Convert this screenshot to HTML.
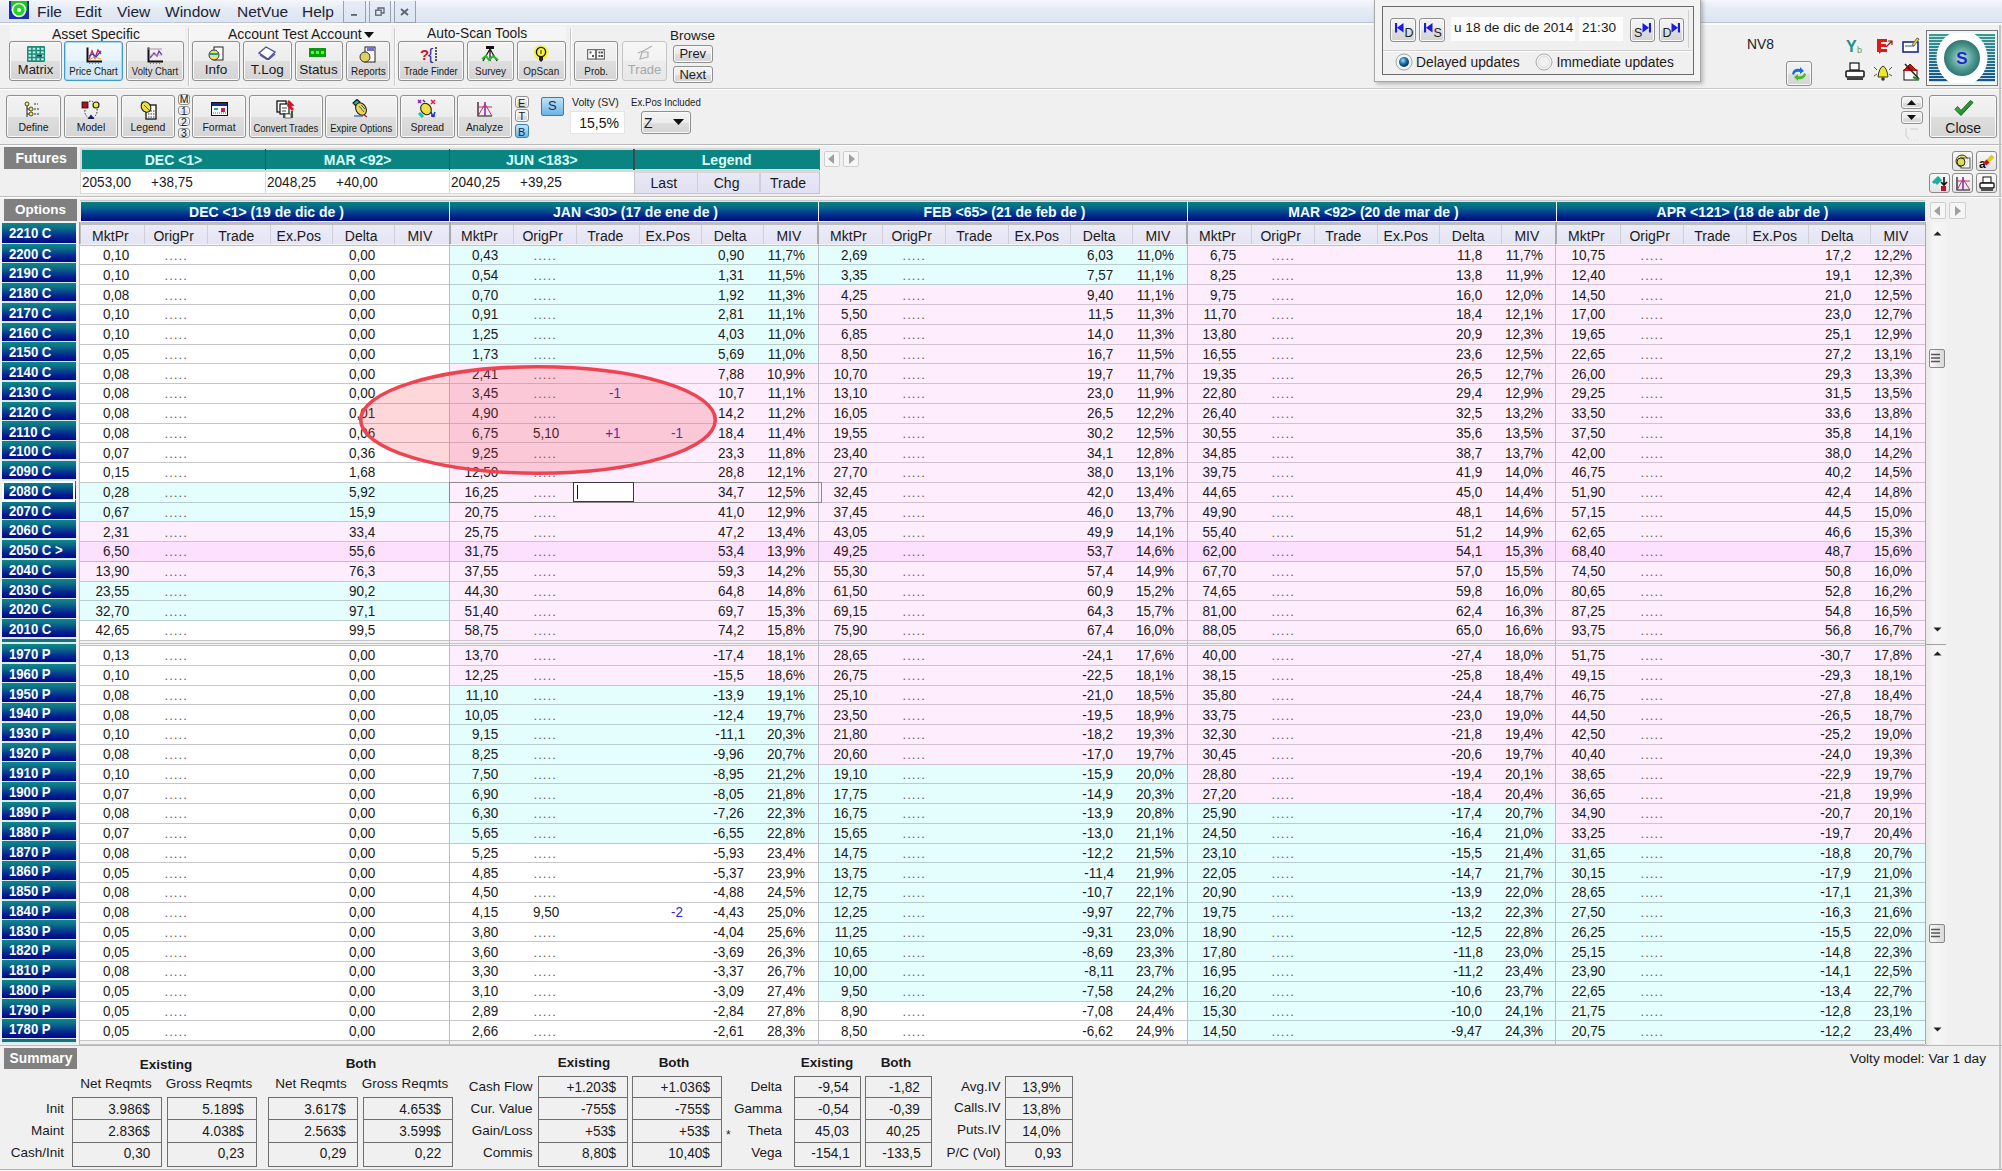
<!DOCTYPE html><html><head><meta charset="utf-8"><style>
*{margin:0;padding:0;box-sizing:border-box}
html,body{width:2002px;height:1171px;overflow:hidden;background:#f0f0f0}
body{position:relative;font-family:"Liberation Sans",sans-serif;font-size:14px;color:#1a1a1a}
.a{position:absolute}
.t{position:absolute;white-space:nowrap;line-height:16px;height:16px}
.r{text-align:right}
.c{text-align:center}
.b{font-weight:bold}
.lab{font-size:14.6px;transform:scaleX(.9);transform-origin:0 50%}
.sx{transform:scaleX(.93);transform-origin:100% 50%;font-size:14.5px}
.dots{color:#5c6262;letter-spacing:1.1px;font-size:13px}
.sxl{transform:scaleX(.97);transform-origin:0 50%}
.sxc{transform:scaleX(.93);transform-origin:50% 50%}
.btn{position:absolute;border:1px solid #8e8f8f;border-radius:3px;background:linear-gradient(#f2f2f2 0%,#ebebeb 50%,#dddddd 51%,#cfcfcf 100%)}
.lbl{position:absolute;background:#808080;color:#fff;font-weight:bold;text-align:center}
</style></head><body>
<div class="a " style="left:80.00px;top:199.60px;width:1845.00px;height:1.00px;background:#c8c8c8"></div>
<div class="a " style="left:80.00px;top:200.60px;width:1845.00px;height:1.00px;background:#bff0f0"></div>
<div class="a " style="left:81.00px;top:201.50px;width:368.00px;height:19.60px;background:linear-gradient(#0a807e 0%,#07698a 28%,#044690 52%,#01208a 78%,#000e78 100%)"></div>
<div class="t c b" style="left:116.50px;width:300px;top:203.60px;color:#f2ffff;font-size:14px">DEC &lt;1&gt; (19 de dic de )</div>
<div class="a " style="left:450.00px;top:201.50px;width:368.00px;height:19.60px;background:linear-gradient(#0a807e 0%,#07698a 28%,#044690 52%,#01208a 78%,#000e78 100%)"></div>
<div class="t c b" style="left:485.50px;width:300px;top:203.60px;color:#f2ffff;font-size:14px">JAN &lt;30&gt; (17 de ene de )</div>
<div class="a " style="left:819.00px;top:201.50px;width:368.00px;height:19.60px;background:linear-gradient(#0a807e 0%,#07698a 28%,#044690 52%,#01208a 78%,#000e78 100%)"></div>
<div class="t c b" style="left:854.50px;width:300px;top:203.60px;color:#f2ffff;font-size:14px">FEB &lt;65&gt; (21 de feb de )</div>
<div class="a " style="left:1188.00px;top:201.50px;width:368.00px;height:19.60px;background:linear-gradient(#0a807e 0%,#07698a 28%,#044690 52%,#01208a 78%,#000e78 100%)"></div>
<div class="t c b" style="left:1223.50px;width:300px;top:203.60px;color:#f2ffff;font-size:14px">MAR &lt;92&gt; (20 de mar de )</div>
<div class="a " style="left:1557.00px;top:201.50px;width:368.00px;height:19.60px;background:linear-gradient(#0a807e 0%,#07698a 28%,#044690 52%,#01208a 78%,#000e78 100%)"></div>
<div class="t c b" style="left:1592.50px;width:300px;top:203.60px;color:#f2ffff;font-size:14px">APR &lt;121&gt; (18 de abr de )</div>
<div class="a " style="left:80.00px;top:222.00px;width:1845.00px;height:23.00px;background:#bdbdbd"></div>
<div class="a " style="left:81.00px;top:224.50px;width:367.50px;height:20.00px;background:linear-gradient(#ececf8,#e3e3f4)"></div>
<div class="t c " style="left:70.40px;width:80px;top:227.60px;">MktPr</div>
<div class="a " style="left:144.30px;top:225.00px;width:1.20px;height:19.50px;background:#d0cfd8"></div>
<div class="t c " style="left:133.65px;width:80px;top:227.60px;">OrigPr</div>
<div class="a " style="left:207.00px;top:225.00px;width:1.20px;height:19.50px;background:#d0cfd8"></div>
<div class="t c " style="left:196.25px;width:80px;top:227.60px;">Trade</div>
<div class="a " style="left:269.50px;top:225.00px;width:1.20px;height:19.50px;background:#d0cfd8"></div>
<div class="t c " style="left:258.75px;width:80px;top:227.60px;">Ex.Pos</div>
<div class="a " style="left:332.00px;top:225.00px;width:1.20px;height:19.50px;background:#d0cfd8"></div>
<div class="t c " style="left:321.15px;width:80px;top:227.60px;">Delta</div>
<div class="a " style="left:394.30px;top:225.00px;width:1.20px;height:19.50px;background:#d0cfd8"></div>
<div class="t c " style="left:379.90px;width:80px;top:227.60px;">MIV</div>
<div class="a " style="left:450.00px;top:224.50px;width:367.50px;height:20.00px;background:linear-gradient(#ececf8,#e3e3f4)"></div>
<div class="t c " style="left:439.40px;width:80px;top:227.60px;">MktPr</div>
<div class="a " style="left:513.30px;top:225.00px;width:1.20px;height:19.50px;background:#d0cfd8"></div>
<div class="t c " style="left:502.65px;width:80px;top:227.60px;">OrigPr</div>
<div class="a " style="left:576.00px;top:225.00px;width:1.20px;height:19.50px;background:#d0cfd8"></div>
<div class="t c " style="left:565.25px;width:80px;top:227.60px;">Trade</div>
<div class="a " style="left:638.50px;top:225.00px;width:1.20px;height:19.50px;background:#d0cfd8"></div>
<div class="t c " style="left:627.75px;width:80px;top:227.60px;">Ex.Pos</div>
<div class="a " style="left:701.00px;top:225.00px;width:1.20px;height:19.50px;background:#d0cfd8"></div>
<div class="t c " style="left:690.15px;width:80px;top:227.60px;">Delta</div>
<div class="a " style="left:763.30px;top:225.00px;width:1.20px;height:19.50px;background:#d0cfd8"></div>
<div class="t c " style="left:748.90px;width:80px;top:227.60px;">MIV</div>
<div class="a " style="left:819.00px;top:224.50px;width:367.50px;height:20.00px;background:linear-gradient(#ececf8,#e3e3f4)"></div>
<div class="t c " style="left:808.40px;width:80px;top:227.60px;">MktPr</div>
<div class="a " style="left:882.30px;top:225.00px;width:1.20px;height:19.50px;background:#d0cfd8"></div>
<div class="t c " style="left:871.65px;width:80px;top:227.60px;">OrigPr</div>
<div class="a " style="left:945.00px;top:225.00px;width:1.20px;height:19.50px;background:#d0cfd8"></div>
<div class="t c " style="left:934.25px;width:80px;top:227.60px;">Trade</div>
<div class="a " style="left:1007.50px;top:225.00px;width:1.20px;height:19.50px;background:#d0cfd8"></div>
<div class="t c " style="left:996.75px;width:80px;top:227.60px;">Ex.Pos</div>
<div class="a " style="left:1070.00px;top:225.00px;width:1.20px;height:19.50px;background:#d0cfd8"></div>
<div class="t c " style="left:1059.15px;width:80px;top:227.60px;">Delta</div>
<div class="a " style="left:1132.30px;top:225.00px;width:1.20px;height:19.50px;background:#d0cfd8"></div>
<div class="t c " style="left:1117.90px;width:80px;top:227.60px;">MIV</div>
<div class="a " style="left:1188.00px;top:224.50px;width:367.50px;height:20.00px;background:linear-gradient(#ececf8,#e3e3f4)"></div>
<div class="t c " style="left:1177.40px;width:80px;top:227.60px;">MktPr</div>
<div class="a " style="left:1251.30px;top:225.00px;width:1.20px;height:19.50px;background:#d0cfd8"></div>
<div class="t c " style="left:1240.65px;width:80px;top:227.60px;">OrigPr</div>
<div class="a " style="left:1314.00px;top:225.00px;width:1.20px;height:19.50px;background:#d0cfd8"></div>
<div class="t c " style="left:1303.25px;width:80px;top:227.60px;">Trade</div>
<div class="a " style="left:1376.50px;top:225.00px;width:1.20px;height:19.50px;background:#d0cfd8"></div>
<div class="t c " style="left:1365.75px;width:80px;top:227.60px;">Ex.Pos</div>
<div class="a " style="left:1439.00px;top:225.00px;width:1.20px;height:19.50px;background:#d0cfd8"></div>
<div class="t c " style="left:1428.15px;width:80px;top:227.60px;">Delta</div>
<div class="a " style="left:1501.30px;top:225.00px;width:1.20px;height:19.50px;background:#d0cfd8"></div>
<div class="t c " style="left:1486.90px;width:80px;top:227.60px;">MIV</div>
<div class="a " style="left:1557.00px;top:224.50px;width:367.50px;height:20.00px;background:linear-gradient(#ececf8,#e3e3f4)"></div>
<div class="t c " style="left:1546.40px;width:80px;top:227.60px;">MktPr</div>
<div class="a " style="left:1620.30px;top:225.00px;width:1.20px;height:19.50px;background:#d0cfd8"></div>
<div class="t c " style="left:1609.65px;width:80px;top:227.60px;">OrigPr</div>
<div class="a " style="left:1683.00px;top:225.00px;width:1.20px;height:19.50px;background:#d0cfd8"></div>
<div class="t c " style="left:1672.25px;width:80px;top:227.60px;">Trade</div>
<div class="a " style="left:1745.50px;top:225.00px;width:1.20px;height:19.50px;background:#d0cfd8"></div>
<div class="t c " style="left:1734.75px;width:80px;top:227.60px;">Ex.Pos</div>
<div class="a " style="left:1808.00px;top:225.00px;width:1.20px;height:19.50px;background:#d0cfd8"></div>
<div class="t c " style="left:1797.15px;width:80px;top:227.60px;">Delta</div>
<div class="a " style="left:1870.30px;top:225.00px;width:1.20px;height:19.50px;background:#d0cfd8"></div>
<div class="t c " style="left:1855.90px;width:80px;top:227.60px;">MIV</div>
<div class="a " style="left:78.70px;top:222.00px;width:1.40px;height:23.00px;background:#9a9a9a"></div>
<div class="a " style="left:448.60px;top:222.00px;width:2.00px;height:23.00px;background:#a8a8a8"></div>
<div class="a " style="left:817.20px;top:222.00px;width:2.00px;height:23.00px;background:#a8a8a8"></div>
<div class="a " style="left:1186.00px;top:222.00px;width:2.00px;height:23.00px;background:#a8a8a8"></div>
<div class="a " style="left:1554.50px;top:222.00px;width:2.00px;height:23.00px;background:#a8a8a8"></div>
<div class="a " style="left:1925.00px;top:222.00px;width:2.00px;height:23.00px;background:#a8a8a8"></div>
<div class="a " style="left:80.00px;top:244.00px;width:1845.00px;height:401.20px;background:#f4f4f4"></div>
<div class="a " style="left:80.00px;top:245.00px;width:369.00px;height:19.76px;background:#ffffff"></div>
<div class="a " style="left:80.00px;top:264.76px;width:369.00px;height:19.76px;background:#ffffff"></div>
<div class="a " style="left:80.00px;top:284.52px;width:369.00px;height:19.76px;background:#ffffff"></div>
<div class="a " style="left:80.00px;top:304.28px;width:369.00px;height:19.76px;background:#ffffff"></div>
<div class="a " style="left:80.00px;top:324.04px;width:369.00px;height:19.76px;background:#ffffff"></div>
<div class="a " style="left:80.00px;top:343.80px;width:369.00px;height:19.76px;background:#ffffff"></div>
<div class="a " style="left:80.00px;top:363.56px;width:369.00px;height:19.76px;background:#ffffff"></div>
<div class="a " style="left:80.00px;top:383.32px;width:369.00px;height:19.76px;background:#ffffff"></div>
<div class="a " style="left:80.00px;top:403.08px;width:369.00px;height:19.76px;background:#ffffff"></div>
<div class="a " style="left:80.00px;top:422.84px;width:369.00px;height:19.76px;background:#ffffff"></div>
<div class="a " style="left:80.00px;top:442.60px;width:369.00px;height:19.76px;background:#ffffff"></div>
<div class="a " style="left:80.00px;top:462.36px;width:369.00px;height:19.76px;background:#ffffff"></div>
<div class="a " style="left:80.00px;top:482.12px;width:369.00px;height:19.76px;background:#e4fdfd"></div>
<div class="a " style="left:80.00px;top:501.88px;width:369.00px;height:19.76px;background:#e4fdfd"></div>
<div class="a " style="left:80.00px;top:521.64px;width:369.00px;height:19.76px;background:#fdedfd"></div>
<div class="a " style="left:80.00px;top:541.40px;width:369.00px;height:19.76px;background:#fde0fd"></div>
<div class="a " style="left:80.00px;top:561.16px;width:369.00px;height:19.76px;background:#fdedfd"></div>
<div class="a " style="left:80.00px;top:580.92px;width:369.00px;height:19.76px;background:#e4fdfd"></div>
<div class="a " style="left:80.00px;top:600.68px;width:369.00px;height:19.76px;background:#e4fdfd"></div>
<div class="a " style="left:80.00px;top:620.44px;width:369.00px;height:19.76px;background:#ffffff"></div>
<div class="a " style="left:80.00px;top:640.20px;width:369.00px;height:4.50px;background:#f2f2f2"></div>
<div class="a " style="left:449.00px;top:245.00px;width:369.00px;height:19.76px;background:#e4fdfd"></div>
<div class="a " style="left:449.00px;top:264.76px;width:369.00px;height:19.76px;background:#e4fdfd"></div>
<div class="a " style="left:449.00px;top:284.52px;width:369.00px;height:19.76px;background:#e4fdfd"></div>
<div class="a " style="left:449.00px;top:304.28px;width:369.00px;height:19.76px;background:#e4fdfd"></div>
<div class="a " style="left:449.00px;top:324.04px;width:369.00px;height:19.76px;background:#e4fdfd"></div>
<div class="a " style="left:449.00px;top:343.80px;width:369.00px;height:19.76px;background:#e4fdfd"></div>
<div class="a " style="left:449.00px;top:363.56px;width:369.00px;height:19.76px;background:#fdedfd"></div>
<div class="a " style="left:449.00px;top:383.32px;width:369.00px;height:19.76px;background:#fdedfd"></div>
<div class="a " style="left:449.00px;top:403.08px;width:369.00px;height:19.76px;background:#fdedfd"></div>
<div class="a " style="left:449.00px;top:422.84px;width:369.00px;height:19.76px;background:#fdedfd"></div>
<div class="a " style="left:449.00px;top:442.60px;width:369.00px;height:19.76px;background:#fdedfd"></div>
<div class="a " style="left:449.00px;top:462.36px;width:369.00px;height:19.76px;background:#fdedfd"></div>
<div class="a " style="left:449.00px;top:482.12px;width:369.00px;height:19.76px;background:#fdedfd"></div>
<div class="a " style="left:449.00px;top:501.88px;width:369.00px;height:19.76px;background:#fdedfd"></div>
<div class="a " style="left:449.00px;top:521.64px;width:369.00px;height:19.76px;background:#fdedfd"></div>
<div class="a " style="left:449.00px;top:541.40px;width:369.00px;height:19.76px;background:#fde0fd"></div>
<div class="a " style="left:449.00px;top:561.16px;width:369.00px;height:19.76px;background:#fdedfd"></div>
<div class="a " style="left:449.00px;top:580.92px;width:369.00px;height:19.76px;background:#fdedfd"></div>
<div class="a " style="left:449.00px;top:600.68px;width:369.00px;height:19.76px;background:#fdedfd"></div>
<div class="a " style="left:449.00px;top:620.44px;width:369.00px;height:19.76px;background:#fdedfd"></div>
<div class="a " style="left:449.00px;top:640.20px;width:369.00px;height:4.50px;background:#f2f2f2"></div>
<div class="a " style="left:818.00px;top:245.00px;width:369.00px;height:19.76px;background:#e4fdfd"></div>
<div class="a " style="left:818.00px;top:264.76px;width:369.00px;height:19.76px;background:#e4fdfd"></div>
<div class="a " style="left:818.00px;top:284.52px;width:369.00px;height:19.76px;background:#fdedfd"></div>
<div class="a " style="left:818.00px;top:304.28px;width:369.00px;height:19.76px;background:#fdedfd"></div>
<div class="a " style="left:818.00px;top:324.04px;width:369.00px;height:19.76px;background:#fdedfd"></div>
<div class="a " style="left:818.00px;top:343.80px;width:369.00px;height:19.76px;background:#fdedfd"></div>
<div class="a " style="left:818.00px;top:363.56px;width:369.00px;height:19.76px;background:#fdedfd"></div>
<div class="a " style="left:818.00px;top:383.32px;width:369.00px;height:19.76px;background:#fdedfd"></div>
<div class="a " style="left:818.00px;top:403.08px;width:369.00px;height:19.76px;background:#fdedfd"></div>
<div class="a " style="left:818.00px;top:422.84px;width:369.00px;height:19.76px;background:#fdedfd"></div>
<div class="a " style="left:818.00px;top:442.60px;width:369.00px;height:19.76px;background:#fdedfd"></div>
<div class="a " style="left:818.00px;top:462.36px;width:369.00px;height:19.76px;background:#fdedfd"></div>
<div class="a " style="left:818.00px;top:482.12px;width:369.00px;height:19.76px;background:#fdedfd"></div>
<div class="a " style="left:818.00px;top:501.88px;width:369.00px;height:19.76px;background:#fdedfd"></div>
<div class="a " style="left:818.00px;top:521.64px;width:369.00px;height:19.76px;background:#fdedfd"></div>
<div class="a " style="left:818.00px;top:541.40px;width:369.00px;height:19.76px;background:#fde0fd"></div>
<div class="a " style="left:818.00px;top:561.16px;width:369.00px;height:19.76px;background:#fdedfd"></div>
<div class="a " style="left:818.00px;top:580.92px;width:369.00px;height:19.76px;background:#fdedfd"></div>
<div class="a " style="left:818.00px;top:600.68px;width:369.00px;height:19.76px;background:#fdedfd"></div>
<div class="a " style="left:818.00px;top:620.44px;width:369.00px;height:19.76px;background:#fdedfd"></div>
<div class="a " style="left:818.00px;top:640.20px;width:369.00px;height:4.50px;background:#f2f2f2"></div>
<div class="a " style="left:1187.00px;top:245.00px;width:369.00px;height:19.76px;background:#fdedfd"></div>
<div class="a " style="left:1187.00px;top:264.76px;width:369.00px;height:19.76px;background:#fdedfd"></div>
<div class="a " style="left:1187.00px;top:284.52px;width:369.00px;height:19.76px;background:#fdedfd"></div>
<div class="a " style="left:1187.00px;top:304.28px;width:369.00px;height:19.76px;background:#fdedfd"></div>
<div class="a " style="left:1187.00px;top:324.04px;width:369.00px;height:19.76px;background:#fdedfd"></div>
<div class="a " style="left:1187.00px;top:343.80px;width:369.00px;height:19.76px;background:#fdedfd"></div>
<div class="a " style="left:1187.00px;top:363.56px;width:369.00px;height:19.76px;background:#fdedfd"></div>
<div class="a " style="left:1187.00px;top:383.32px;width:369.00px;height:19.76px;background:#fdedfd"></div>
<div class="a " style="left:1187.00px;top:403.08px;width:369.00px;height:19.76px;background:#fdedfd"></div>
<div class="a " style="left:1187.00px;top:422.84px;width:369.00px;height:19.76px;background:#fdedfd"></div>
<div class="a " style="left:1187.00px;top:442.60px;width:369.00px;height:19.76px;background:#fdedfd"></div>
<div class="a " style="left:1187.00px;top:462.36px;width:369.00px;height:19.76px;background:#fdedfd"></div>
<div class="a " style="left:1187.00px;top:482.12px;width:369.00px;height:19.76px;background:#fdedfd"></div>
<div class="a " style="left:1187.00px;top:501.88px;width:369.00px;height:19.76px;background:#fdedfd"></div>
<div class="a " style="left:1187.00px;top:521.64px;width:369.00px;height:19.76px;background:#fdedfd"></div>
<div class="a " style="left:1187.00px;top:541.40px;width:369.00px;height:19.76px;background:#fde0fd"></div>
<div class="a " style="left:1187.00px;top:561.16px;width:369.00px;height:19.76px;background:#fdedfd"></div>
<div class="a " style="left:1187.00px;top:580.92px;width:369.00px;height:19.76px;background:#fdedfd"></div>
<div class="a " style="left:1187.00px;top:600.68px;width:369.00px;height:19.76px;background:#fdedfd"></div>
<div class="a " style="left:1187.00px;top:620.44px;width:369.00px;height:19.76px;background:#fdedfd"></div>
<div class="a " style="left:1187.00px;top:640.20px;width:369.00px;height:4.50px;background:#f2f2f2"></div>
<div class="a " style="left:1556.00px;top:245.00px;width:369.00px;height:19.76px;background:#fdedfd"></div>
<div class="a " style="left:1556.00px;top:264.76px;width:369.00px;height:19.76px;background:#fdedfd"></div>
<div class="a " style="left:1556.00px;top:284.52px;width:369.00px;height:19.76px;background:#fdedfd"></div>
<div class="a " style="left:1556.00px;top:304.28px;width:369.00px;height:19.76px;background:#fdedfd"></div>
<div class="a " style="left:1556.00px;top:324.04px;width:369.00px;height:19.76px;background:#fdedfd"></div>
<div class="a " style="left:1556.00px;top:343.80px;width:369.00px;height:19.76px;background:#fdedfd"></div>
<div class="a " style="left:1556.00px;top:363.56px;width:369.00px;height:19.76px;background:#fdedfd"></div>
<div class="a " style="left:1556.00px;top:383.32px;width:369.00px;height:19.76px;background:#fdedfd"></div>
<div class="a " style="left:1556.00px;top:403.08px;width:369.00px;height:19.76px;background:#fdedfd"></div>
<div class="a " style="left:1556.00px;top:422.84px;width:369.00px;height:19.76px;background:#fdedfd"></div>
<div class="a " style="left:1556.00px;top:442.60px;width:369.00px;height:19.76px;background:#fdedfd"></div>
<div class="a " style="left:1556.00px;top:462.36px;width:369.00px;height:19.76px;background:#fdedfd"></div>
<div class="a " style="left:1556.00px;top:482.12px;width:369.00px;height:19.76px;background:#fdedfd"></div>
<div class="a " style="left:1556.00px;top:501.88px;width:369.00px;height:19.76px;background:#fdedfd"></div>
<div class="a " style="left:1556.00px;top:521.64px;width:369.00px;height:19.76px;background:#fdedfd"></div>
<div class="a " style="left:1556.00px;top:541.40px;width:369.00px;height:19.76px;background:#fde0fd"></div>
<div class="a " style="left:1556.00px;top:561.16px;width:369.00px;height:19.76px;background:#fdedfd"></div>
<div class="a " style="left:1556.00px;top:580.92px;width:369.00px;height:19.76px;background:#fdedfd"></div>
<div class="a " style="left:1556.00px;top:600.68px;width:369.00px;height:19.76px;background:#fdedfd"></div>
<div class="a " style="left:1556.00px;top:620.44px;width:369.00px;height:19.76px;background:#fdedfd"></div>
<div class="a " style="left:1556.00px;top:640.20px;width:369.00px;height:4.50px;background:#f2f2f2"></div>
<div class="a " style="left:80.00px;top:245.00px;width:369.00px;height:1.00px;background:#c0c0c0"></div>
<div class="a " style="left:80.00px;top:264.00px;width:369.00px;height:1.00px;background:#c6c6ca"></div>
<div class="a " style="left:80.00px;top:284.00px;width:369.00px;height:1.00px;background:#c6c6ca"></div>
<div class="a " style="left:80.00px;top:304.00px;width:369.00px;height:1.00px;background:#c6c6ca"></div>
<div class="a " style="left:80.00px;top:324.00px;width:369.00px;height:1.00px;background:#c6c6ca"></div>
<div class="a " style="left:80.00px;top:344.00px;width:369.00px;height:1.00px;background:#c6c6ca"></div>
<div class="a " style="left:80.00px;top:363.00px;width:369.00px;height:1.00px;background:#c6c6ca"></div>
<div class="a " style="left:80.00px;top:383.00px;width:369.00px;height:1.00px;background:#c6c6ca"></div>
<div class="a " style="left:80.00px;top:403.00px;width:369.00px;height:1.00px;background:#c6c6ca"></div>
<div class="a " style="left:80.00px;top:423.00px;width:369.00px;height:1.00px;background:#c6c6ca"></div>
<div class="a " style="left:80.00px;top:442.00px;width:369.00px;height:1.00px;background:#c6c6ca"></div>
<div class="a " style="left:80.00px;top:462.00px;width:369.00px;height:1.00px;background:#c6c6ca"></div>
<div class="a " style="left:80.00px;top:482.00px;width:369.00px;height:1.00px;background:#c6c6ca"></div>
<div class="a " style="left:80.00px;top:502.00px;width:369.00px;height:1.00px;background:#b9cdd0"></div>
<div class="a " style="left:80.00px;top:521.00px;width:369.00px;height:1.00px;background:#b9cdd0"></div>
<div class="a " style="left:80.00px;top:541.00px;width:369.00px;height:1.00px;background:#d0c2d0"></div>
<div class="a " style="left:80.00px;top:561.00px;width:369.00px;height:1.00px;background:#cbb8cb"></div>
<div class="a " style="left:80.00px;top:581.00px;width:369.00px;height:1.00px;background:#d0c2d0"></div>
<div class="a " style="left:80.00px;top:600.00px;width:369.00px;height:1.00px;background:#b9cdd0"></div>
<div class="a " style="left:80.00px;top:620.00px;width:369.00px;height:1.00px;background:#b9cdd0"></div>
<div class="a " style="left:80.00px;top:640.00px;width:369.00px;height:1.00px;background:#c6c6ca"></div>
<div class="a " style="left:449.00px;top:245.00px;width:369.00px;height:1.00px;background:#c0c0c0"></div>
<div class="a " style="left:449.00px;top:264.00px;width:369.00px;height:1.00px;background:#b9cdd0"></div>
<div class="a " style="left:449.00px;top:284.00px;width:369.00px;height:1.00px;background:#b9cdd0"></div>
<div class="a " style="left:449.00px;top:304.00px;width:369.00px;height:1.00px;background:#b9cdd0"></div>
<div class="a " style="left:449.00px;top:324.00px;width:369.00px;height:1.00px;background:#b9cdd0"></div>
<div class="a " style="left:449.00px;top:344.00px;width:369.00px;height:1.00px;background:#b9cdd0"></div>
<div class="a " style="left:449.00px;top:363.00px;width:369.00px;height:1.00px;background:#b9cdd0"></div>
<div class="a " style="left:449.00px;top:383.00px;width:369.00px;height:1.00px;background:#d0c2d0"></div>
<div class="a " style="left:449.00px;top:403.00px;width:369.00px;height:1.00px;background:#d0c2d0"></div>
<div class="a " style="left:449.00px;top:423.00px;width:369.00px;height:1.00px;background:#d0c2d0"></div>
<div class="a " style="left:449.00px;top:442.00px;width:369.00px;height:1.00px;background:#d0c2d0"></div>
<div class="a " style="left:449.00px;top:462.00px;width:369.00px;height:1.00px;background:#d0c2d0"></div>
<div class="a " style="left:449.00px;top:482.00px;width:369.00px;height:1.00px;background:#d0c2d0"></div>
<div class="a " style="left:449.00px;top:502.00px;width:369.00px;height:1.00px;background:#d0c2d0"></div>
<div class="a " style="left:449.00px;top:521.00px;width:369.00px;height:1.00px;background:#d0c2d0"></div>
<div class="a " style="left:449.00px;top:541.00px;width:369.00px;height:1.00px;background:#d0c2d0"></div>
<div class="a " style="left:449.00px;top:561.00px;width:369.00px;height:1.00px;background:#cbb8cb"></div>
<div class="a " style="left:449.00px;top:581.00px;width:369.00px;height:1.00px;background:#d0c2d0"></div>
<div class="a " style="left:449.00px;top:600.00px;width:369.00px;height:1.00px;background:#d0c2d0"></div>
<div class="a " style="left:449.00px;top:620.00px;width:369.00px;height:1.00px;background:#d0c2d0"></div>
<div class="a " style="left:449.00px;top:640.00px;width:369.00px;height:1.00px;background:#d0c2d0"></div>
<div class="a " style="left:818.00px;top:245.00px;width:369.00px;height:1.00px;background:#c0c0c0"></div>
<div class="a " style="left:818.00px;top:264.00px;width:369.00px;height:1.00px;background:#b9cdd0"></div>
<div class="a " style="left:818.00px;top:284.00px;width:369.00px;height:1.00px;background:#b9cdd0"></div>
<div class="a " style="left:818.00px;top:304.00px;width:369.00px;height:1.00px;background:#d0c2d0"></div>
<div class="a " style="left:818.00px;top:324.00px;width:369.00px;height:1.00px;background:#d0c2d0"></div>
<div class="a " style="left:818.00px;top:344.00px;width:369.00px;height:1.00px;background:#d0c2d0"></div>
<div class="a " style="left:818.00px;top:363.00px;width:369.00px;height:1.00px;background:#d0c2d0"></div>
<div class="a " style="left:818.00px;top:383.00px;width:369.00px;height:1.00px;background:#d0c2d0"></div>
<div class="a " style="left:818.00px;top:403.00px;width:369.00px;height:1.00px;background:#d0c2d0"></div>
<div class="a " style="left:818.00px;top:423.00px;width:369.00px;height:1.00px;background:#d0c2d0"></div>
<div class="a " style="left:818.00px;top:442.00px;width:369.00px;height:1.00px;background:#d0c2d0"></div>
<div class="a " style="left:818.00px;top:462.00px;width:369.00px;height:1.00px;background:#d0c2d0"></div>
<div class="a " style="left:818.00px;top:482.00px;width:369.00px;height:1.00px;background:#d0c2d0"></div>
<div class="a " style="left:818.00px;top:502.00px;width:369.00px;height:1.00px;background:#d0c2d0"></div>
<div class="a " style="left:818.00px;top:521.00px;width:369.00px;height:1.00px;background:#d0c2d0"></div>
<div class="a " style="left:818.00px;top:541.00px;width:369.00px;height:1.00px;background:#d0c2d0"></div>
<div class="a " style="left:818.00px;top:561.00px;width:369.00px;height:1.00px;background:#cbb8cb"></div>
<div class="a " style="left:818.00px;top:581.00px;width:369.00px;height:1.00px;background:#d0c2d0"></div>
<div class="a " style="left:818.00px;top:600.00px;width:369.00px;height:1.00px;background:#d0c2d0"></div>
<div class="a " style="left:818.00px;top:620.00px;width:369.00px;height:1.00px;background:#d0c2d0"></div>
<div class="a " style="left:818.00px;top:640.00px;width:369.00px;height:1.00px;background:#d0c2d0"></div>
<div class="a " style="left:1187.00px;top:245.00px;width:369.00px;height:1.00px;background:#c0c0c0"></div>
<div class="a " style="left:1187.00px;top:264.00px;width:369.00px;height:1.00px;background:#d0c2d0"></div>
<div class="a " style="left:1187.00px;top:284.00px;width:369.00px;height:1.00px;background:#d0c2d0"></div>
<div class="a " style="left:1187.00px;top:304.00px;width:369.00px;height:1.00px;background:#d0c2d0"></div>
<div class="a " style="left:1187.00px;top:324.00px;width:369.00px;height:1.00px;background:#d0c2d0"></div>
<div class="a " style="left:1187.00px;top:344.00px;width:369.00px;height:1.00px;background:#d0c2d0"></div>
<div class="a " style="left:1187.00px;top:363.00px;width:369.00px;height:1.00px;background:#d0c2d0"></div>
<div class="a " style="left:1187.00px;top:383.00px;width:369.00px;height:1.00px;background:#d0c2d0"></div>
<div class="a " style="left:1187.00px;top:403.00px;width:369.00px;height:1.00px;background:#d0c2d0"></div>
<div class="a " style="left:1187.00px;top:423.00px;width:369.00px;height:1.00px;background:#d0c2d0"></div>
<div class="a " style="left:1187.00px;top:442.00px;width:369.00px;height:1.00px;background:#d0c2d0"></div>
<div class="a " style="left:1187.00px;top:462.00px;width:369.00px;height:1.00px;background:#d0c2d0"></div>
<div class="a " style="left:1187.00px;top:482.00px;width:369.00px;height:1.00px;background:#d0c2d0"></div>
<div class="a " style="left:1187.00px;top:502.00px;width:369.00px;height:1.00px;background:#d0c2d0"></div>
<div class="a " style="left:1187.00px;top:521.00px;width:369.00px;height:1.00px;background:#d0c2d0"></div>
<div class="a " style="left:1187.00px;top:541.00px;width:369.00px;height:1.00px;background:#d0c2d0"></div>
<div class="a " style="left:1187.00px;top:561.00px;width:369.00px;height:1.00px;background:#cbb8cb"></div>
<div class="a " style="left:1187.00px;top:581.00px;width:369.00px;height:1.00px;background:#d0c2d0"></div>
<div class="a " style="left:1187.00px;top:600.00px;width:369.00px;height:1.00px;background:#d0c2d0"></div>
<div class="a " style="left:1187.00px;top:620.00px;width:369.00px;height:1.00px;background:#d0c2d0"></div>
<div class="a " style="left:1187.00px;top:640.00px;width:369.00px;height:1.00px;background:#d0c2d0"></div>
<div class="a " style="left:1556.00px;top:245.00px;width:369.00px;height:1.00px;background:#c0c0c0"></div>
<div class="a " style="left:1556.00px;top:264.00px;width:369.00px;height:1.00px;background:#d0c2d0"></div>
<div class="a " style="left:1556.00px;top:284.00px;width:369.00px;height:1.00px;background:#d0c2d0"></div>
<div class="a " style="left:1556.00px;top:304.00px;width:369.00px;height:1.00px;background:#d0c2d0"></div>
<div class="a " style="left:1556.00px;top:324.00px;width:369.00px;height:1.00px;background:#d0c2d0"></div>
<div class="a " style="left:1556.00px;top:344.00px;width:369.00px;height:1.00px;background:#d0c2d0"></div>
<div class="a " style="left:1556.00px;top:363.00px;width:369.00px;height:1.00px;background:#d0c2d0"></div>
<div class="a " style="left:1556.00px;top:383.00px;width:369.00px;height:1.00px;background:#d0c2d0"></div>
<div class="a " style="left:1556.00px;top:403.00px;width:369.00px;height:1.00px;background:#d0c2d0"></div>
<div class="a " style="left:1556.00px;top:423.00px;width:369.00px;height:1.00px;background:#d0c2d0"></div>
<div class="a " style="left:1556.00px;top:442.00px;width:369.00px;height:1.00px;background:#d0c2d0"></div>
<div class="a " style="left:1556.00px;top:462.00px;width:369.00px;height:1.00px;background:#d0c2d0"></div>
<div class="a " style="left:1556.00px;top:482.00px;width:369.00px;height:1.00px;background:#d0c2d0"></div>
<div class="a " style="left:1556.00px;top:502.00px;width:369.00px;height:1.00px;background:#d0c2d0"></div>
<div class="a " style="left:1556.00px;top:521.00px;width:369.00px;height:1.00px;background:#d0c2d0"></div>
<div class="a " style="left:1556.00px;top:541.00px;width:369.00px;height:1.00px;background:#d0c2d0"></div>
<div class="a " style="left:1556.00px;top:561.00px;width:369.00px;height:1.00px;background:#cbb8cb"></div>
<div class="a " style="left:1556.00px;top:581.00px;width:369.00px;height:1.00px;background:#d0c2d0"></div>
<div class="a " style="left:1556.00px;top:600.00px;width:369.00px;height:1.00px;background:#d0c2d0"></div>
<div class="a " style="left:1556.00px;top:620.00px;width:369.00px;height:1.00px;background:#d0c2d0"></div>
<div class="a " style="left:1556.00px;top:640.00px;width:369.00px;height:1.00px;background:#d0c2d0"></div>
<div class="a " style="left:80.00px;top:643.30px;width:1845.00px;height:1.20px;background:#c2c2c2"></div>
<div class="a " style="left:78.90px;top:244.00px;width:1.00px;height:401.20px;background:#bdbac6"></div>
<div class="a " style="left:449.10px;top:244.00px;width:1.00px;height:401.20px;background:#bdbac6"></div>
<div class="a " style="left:817.70px;top:244.00px;width:1.00px;height:401.20px;background:#bdbac6"></div>
<div class="a " style="left:1186.50px;top:244.00px;width:1.00px;height:401.20px;background:#bdbac6"></div>
<div class="a " style="left:1555.00px;top:244.00px;width:1.00px;height:401.20px;background:#bdbac6"></div>
<div class="a " style="left:1925.50px;top:244.00px;width:1.00px;height:401.20px;background:#bdbac6"></div>
<div class="t r sx" style="right:1873.00px;top:247.00px;">0,10</div>
<div class="t r dots" style="right:1814.00px;top:248.00px;">.....</div>
<div class="t r sx" style="right:1626.50px;top:247.00px;">0,00</div>
<div class="t r sx" style="right:1873.00px;top:266.76px;">0,10</div>
<div class="t r dots" style="right:1814.00px;top:267.76px;">.....</div>
<div class="t r sx" style="right:1626.50px;top:266.76px;">0,00</div>
<div class="t r sx" style="right:1873.00px;top:286.52px;">0,08</div>
<div class="t r dots" style="right:1814.00px;top:287.52px;">.....</div>
<div class="t r sx" style="right:1626.50px;top:286.52px;">0,00</div>
<div class="t r sx" style="right:1873.00px;top:306.28px;">0,10</div>
<div class="t r dots" style="right:1814.00px;top:307.28px;">.....</div>
<div class="t r sx" style="right:1626.50px;top:306.28px;">0,00</div>
<div class="t r sx" style="right:1873.00px;top:326.04px;">0,10</div>
<div class="t r dots" style="right:1814.00px;top:327.04px;">.....</div>
<div class="t r sx" style="right:1626.50px;top:326.04px;">0,00</div>
<div class="t r sx" style="right:1873.00px;top:345.80px;">0,05</div>
<div class="t r dots" style="right:1814.00px;top:346.80px;">.....</div>
<div class="t r sx" style="right:1626.50px;top:345.80px;">0,00</div>
<div class="t r sx" style="right:1873.00px;top:365.56px;">0,08</div>
<div class="t r dots" style="right:1814.00px;top:366.56px;">.....</div>
<div class="t r sx" style="right:1626.50px;top:365.56px;">0,00</div>
<div class="t r sx" style="right:1873.00px;top:385.32px;">0,08</div>
<div class="t r dots" style="right:1814.00px;top:386.32px;">.....</div>
<div class="t r sx" style="right:1626.50px;top:385.32px;">0,00</div>
<div class="t r sx" style="right:1873.00px;top:405.08px;">0,08</div>
<div class="t r dots" style="right:1814.00px;top:406.08px;">.....</div>
<div class="t r sx" style="right:1626.50px;top:405.08px;">0,01</div>
<div class="t r sx" style="right:1873.00px;top:424.84px;">0,08</div>
<div class="t r dots" style="right:1814.00px;top:425.84px;">.....</div>
<div class="t r sx" style="right:1626.50px;top:424.84px;">0,06</div>
<div class="t r sx" style="right:1873.00px;top:444.60px;">0,07</div>
<div class="t r dots" style="right:1814.00px;top:445.60px;">.....</div>
<div class="t r sx" style="right:1626.50px;top:444.60px;">0,36</div>
<div class="t r sx" style="right:1873.00px;top:464.36px;">0,15</div>
<div class="t r dots" style="right:1814.00px;top:465.36px;">.....</div>
<div class="t r sx" style="right:1626.50px;top:464.36px;">1,68</div>
<div class="t r sx" style="right:1873.00px;top:484.12px;">0,28</div>
<div class="t r dots" style="right:1814.00px;top:485.12px;">.....</div>
<div class="t r sx" style="right:1626.50px;top:484.12px;">5,92</div>
<div class="t r sx" style="right:1873.00px;top:503.88px;">0,67</div>
<div class="t r dots" style="right:1814.00px;top:504.88px;">.....</div>
<div class="t r sx" style="right:1626.50px;top:503.88px;">15,9</div>
<div class="t r sx" style="right:1873.00px;top:523.64px;">2,31</div>
<div class="t r dots" style="right:1814.00px;top:524.64px;">.....</div>
<div class="t r sx" style="right:1626.50px;top:523.64px;">33,4</div>
<div class="t r sx" style="right:1873.00px;top:543.40px;">6,50</div>
<div class="t r dots" style="right:1814.00px;top:544.40px;">.....</div>
<div class="t r sx" style="right:1626.50px;top:543.40px;">55,6</div>
<div class="t r sx" style="right:1873.00px;top:563.16px;">13,90</div>
<div class="t r dots" style="right:1814.00px;top:564.16px;">.....</div>
<div class="t r sx" style="right:1626.50px;top:563.16px;">76,3</div>
<div class="t r sx" style="right:1873.00px;top:582.92px;">23,55</div>
<div class="t r dots" style="right:1814.00px;top:583.92px;">.....</div>
<div class="t r sx" style="right:1626.50px;top:582.92px;">90,2</div>
<div class="t r sx" style="right:1873.00px;top:602.68px;">32,70</div>
<div class="t r dots" style="right:1814.00px;top:603.68px;">.....</div>
<div class="t r sx" style="right:1626.50px;top:602.68px;">97,1</div>
<div class="t r sx" style="right:1873.00px;top:622.44px;">42,65</div>
<div class="t r dots" style="right:1814.00px;top:623.44px;">.....</div>
<div class="t r sx" style="right:1626.50px;top:622.44px;">99,5</div>
<div class="t r sx" style="right:1504.00px;top:247.00px;">0,43</div>
<div class="t r dots" style="right:1445.00px;top:248.00px;">.....</div>
<div class="t r sx" style="right:1257.50px;top:247.00px;">0,90</div>
<div class="t r sx" style="right:1196.50px;top:247.00px;">11,7%</div>
<div class="t r sx" style="right:1504.00px;top:266.76px;">0,54</div>
<div class="t r dots" style="right:1445.00px;top:267.76px;">.....</div>
<div class="t r sx" style="right:1257.50px;top:266.76px;">1,31</div>
<div class="t r sx" style="right:1196.50px;top:266.76px;">11,5%</div>
<div class="t r sx" style="right:1504.00px;top:286.52px;">0,70</div>
<div class="t r dots" style="right:1445.00px;top:287.52px;">.....</div>
<div class="t r sx" style="right:1257.50px;top:286.52px;">1,92</div>
<div class="t r sx" style="right:1196.50px;top:286.52px;">11,3%</div>
<div class="t r sx" style="right:1504.00px;top:306.28px;">0,91</div>
<div class="t r dots" style="right:1445.00px;top:307.28px;">.....</div>
<div class="t r sx" style="right:1257.50px;top:306.28px;">2,81</div>
<div class="t r sx" style="right:1196.50px;top:306.28px;">11,1%</div>
<div class="t r sx" style="right:1504.00px;top:326.04px;">1,25</div>
<div class="t r dots" style="right:1445.00px;top:327.04px;">.....</div>
<div class="t r sx" style="right:1257.50px;top:326.04px;">4,03</div>
<div class="t r sx" style="right:1196.50px;top:326.04px;">11,0%</div>
<div class="t r sx" style="right:1504.00px;top:345.80px;">1,73</div>
<div class="t r dots" style="right:1445.00px;top:346.80px;">.....</div>
<div class="t r sx" style="right:1257.50px;top:345.80px;">5,69</div>
<div class="t r sx" style="right:1196.50px;top:345.80px;">11,0%</div>
<div class="t r sx" style="right:1504.00px;top:365.56px;">2,41</div>
<div class="t r dots" style="right:1445.00px;top:366.56px;">.....</div>
<div class="t r sx" style="right:1257.50px;top:365.56px;">7,88</div>
<div class="t r sx" style="right:1196.50px;top:365.56px;">10,9%</div>
<div class="t r sx" style="right:1504.00px;top:385.32px;">3,45</div>
<div class="t r dots" style="right:1445.00px;top:386.32px;">.....</div>
<div class="t r sx" style="right:1381.50px;top:385.32px;color:#3b22c8">-1</div>
<div class="t r sx" style="right:1257.50px;top:385.32px;">10,7</div>
<div class="t r sx" style="right:1196.50px;top:385.32px;">11,1%</div>
<div class="t r sx" style="right:1504.00px;top:405.08px;">4,90</div>
<div class="t r dots" style="right:1445.00px;top:406.08px;">.....</div>
<div class="t r sx" style="right:1257.50px;top:405.08px;">14,2</div>
<div class="t r sx" style="right:1196.50px;top:405.08px;">11,2%</div>
<div class="t r sx" style="right:1504.00px;top:424.84px;">6,75</div>
<div class="t r sx" style="right:1442.50px;top:424.84px;">5,10</div>
<div class="t r sx" style="right:1381.50px;top:424.84px;color:#3b22c8">+1</div>
<div class="t r sx" style="right:1319.50px;top:424.84px;color:#3b22c8">-1</div>
<div class="t r sx" style="right:1257.50px;top:424.84px;">18,4</div>
<div class="t r sx" style="right:1196.50px;top:424.84px;">11,4%</div>
<div class="t r sx" style="right:1504.00px;top:444.60px;">9,25</div>
<div class="t r dots" style="right:1445.00px;top:445.60px;">.....</div>
<div class="t r sx" style="right:1257.50px;top:444.60px;">23,3</div>
<div class="t r sx" style="right:1196.50px;top:444.60px;">11,8%</div>
<div class="t r sx" style="right:1504.00px;top:464.36px;">12,50</div>
<div class="t r dots" style="right:1445.00px;top:465.36px;">.....</div>
<div class="t r sx" style="right:1257.50px;top:464.36px;">28,8</div>
<div class="t r sx" style="right:1196.50px;top:464.36px;">12,1%</div>
<div class="t r sx" style="right:1504.00px;top:484.12px;">16,25</div>
<div class="t r dots" style="right:1445.00px;top:485.12px;">.....</div>
<div class="t r sx" style="right:1257.50px;top:484.12px;">34,7</div>
<div class="t r sx" style="right:1196.50px;top:484.12px;">12,5%</div>
<div class="t r sx" style="right:1504.00px;top:503.88px;">20,75</div>
<div class="t r dots" style="right:1445.00px;top:504.88px;">.....</div>
<div class="t r sx" style="right:1257.50px;top:503.88px;">41,0</div>
<div class="t r sx" style="right:1196.50px;top:503.88px;">12,9%</div>
<div class="t r sx" style="right:1504.00px;top:523.64px;">25,75</div>
<div class="t r dots" style="right:1445.00px;top:524.64px;">.....</div>
<div class="t r sx" style="right:1257.50px;top:523.64px;">47,2</div>
<div class="t r sx" style="right:1196.50px;top:523.64px;">13,4%</div>
<div class="t r sx" style="right:1504.00px;top:543.40px;">31,75</div>
<div class="t r dots" style="right:1445.00px;top:544.40px;">.....</div>
<div class="t r sx" style="right:1257.50px;top:543.40px;">53,4</div>
<div class="t r sx" style="right:1196.50px;top:543.40px;">13,9%</div>
<div class="t r sx" style="right:1504.00px;top:563.16px;">37,55</div>
<div class="t r dots" style="right:1445.00px;top:564.16px;">.....</div>
<div class="t r sx" style="right:1257.50px;top:563.16px;">59,3</div>
<div class="t r sx" style="right:1196.50px;top:563.16px;">14,2%</div>
<div class="t r sx" style="right:1504.00px;top:582.92px;">44,30</div>
<div class="t r dots" style="right:1445.00px;top:583.92px;">.....</div>
<div class="t r sx" style="right:1257.50px;top:582.92px;">64,8</div>
<div class="t r sx" style="right:1196.50px;top:582.92px;">14,8%</div>
<div class="t r sx" style="right:1504.00px;top:602.68px;">51,40</div>
<div class="t r dots" style="right:1445.00px;top:603.68px;">.....</div>
<div class="t r sx" style="right:1257.50px;top:602.68px;">69,7</div>
<div class="t r sx" style="right:1196.50px;top:602.68px;">15,3%</div>
<div class="t r sx" style="right:1504.00px;top:622.44px;">58,75</div>
<div class="t r dots" style="right:1445.00px;top:623.44px;">.....</div>
<div class="t r sx" style="right:1257.50px;top:622.44px;">74,2</div>
<div class="t r sx" style="right:1196.50px;top:622.44px;">15,8%</div>
<div class="t r sx" style="right:1135.00px;top:247.00px;">2,69</div>
<div class="t r dots" style="right:1076.00px;top:248.00px;">.....</div>
<div class="t r sx" style="right:888.50px;top:247.00px;">6,03</div>
<div class="t r sx" style="right:827.50px;top:247.00px;">11,0%</div>
<div class="t r sx" style="right:1135.00px;top:266.76px;">3,35</div>
<div class="t r dots" style="right:1076.00px;top:267.76px;">.....</div>
<div class="t r sx" style="right:888.50px;top:266.76px;">7,57</div>
<div class="t r sx" style="right:827.50px;top:266.76px;">11,1%</div>
<div class="t r sx" style="right:1135.00px;top:286.52px;">4,25</div>
<div class="t r dots" style="right:1076.00px;top:287.52px;">.....</div>
<div class="t r sx" style="right:888.50px;top:286.52px;">9,40</div>
<div class="t r sx" style="right:827.50px;top:286.52px;">11,1%</div>
<div class="t r sx" style="right:1135.00px;top:306.28px;">5,50</div>
<div class="t r dots" style="right:1076.00px;top:307.28px;">.....</div>
<div class="t r sx" style="right:888.50px;top:306.28px;">11,5</div>
<div class="t r sx" style="right:827.50px;top:306.28px;">11,3%</div>
<div class="t r sx" style="right:1135.00px;top:326.04px;">6,85</div>
<div class="t r dots" style="right:1076.00px;top:327.04px;">.....</div>
<div class="t r sx" style="right:888.50px;top:326.04px;">14,0</div>
<div class="t r sx" style="right:827.50px;top:326.04px;">11,3%</div>
<div class="t r sx" style="right:1135.00px;top:345.80px;">8,50</div>
<div class="t r dots" style="right:1076.00px;top:346.80px;">.....</div>
<div class="t r sx" style="right:888.50px;top:345.80px;">16,7</div>
<div class="t r sx" style="right:827.50px;top:345.80px;">11,5%</div>
<div class="t r sx" style="right:1135.00px;top:365.56px;">10,70</div>
<div class="t r dots" style="right:1076.00px;top:366.56px;">.....</div>
<div class="t r sx" style="right:888.50px;top:365.56px;">19,7</div>
<div class="t r sx" style="right:827.50px;top:365.56px;">11,7%</div>
<div class="t r sx" style="right:1135.00px;top:385.32px;">13,10</div>
<div class="t r dots" style="right:1076.00px;top:386.32px;">.....</div>
<div class="t r sx" style="right:888.50px;top:385.32px;">23,0</div>
<div class="t r sx" style="right:827.50px;top:385.32px;">11,9%</div>
<div class="t r sx" style="right:1135.00px;top:405.08px;">16,05</div>
<div class="t r dots" style="right:1076.00px;top:406.08px;">.....</div>
<div class="t r sx" style="right:888.50px;top:405.08px;">26,5</div>
<div class="t r sx" style="right:827.50px;top:405.08px;">12,2%</div>
<div class="t r sx" style="right:1135.00px;top:424.84px;">19,55</div>
<div class="t r dots" style="right:1076.00px;top:425.84px;">.....</div>
<div class="t r sx" style="right:888.50px;top:424.84px;">30,2</div>
<div class="t r sx" style="right:827.50px;top:424.84px;">12,5%</div>
<div class="t r sx" style="right:1135.00px;top:444.60px;">23,40</div>
<div class="t r dots" style="right:1076.00px;top:445.60px;">.....</div>
<div class="t r sx" style="right:888.50px;top:444.60px;">34,1</div>
<div class="t r sx" style="right:827.50px;top:444.60px;">12,8%</div>
<div class="t r sx" style="right:1135.00px;top:464.36px;">27,70</div>
<div class="t r dots" style="right:1076.00px;top:465.36px;">.....</div>
<div class="t r sx" style="right:888.50px;top:464.36px;">38,0</div>
<div class="t r sx" style="right:827.50px;top:464.36px;">13,1%</div>
<div class="t r sx" style="right:1135.00px;top:484.12px;">32,45</div>
<div class="t r dots" style="right:1076.00px;top:485.12px;">.....</div>
<div class="t r sx" style="right:888.50px;top:484.12px;">42,0</div>
<div class="t r sx" style="right:827.50px;top:484.12px;">13,4%</div>
<div class="t r sx" style="right:1135.00px;top:503.88px;">37,45</div>
<div class="t r dots" style="right:1076.00px;top:504.88px;">.....</div>
<div class="t r sx" style="right:888.50px;top:503.88px;">46,0</div>
<div class="t r sx" style="right:827.50px;top:503.88px;">13,7%</div>
<div class="t r sx" style="right:1135.00px;top:523.64px;">43,05</div>
<div class="t r dots" style="right:1076.00px;top:524.64px;">.....</div>
<div class="t r sx" style="right:888.50px;top:523.64px;">49,9</div>
<div class="t r sx" style="right:827.50px;top:523.64px;">14,1%</div>
<div class="t r sx" style="right:1135.00px;top:543.40px;">49,25</div>
<div class="t r dots" style="right:1076.00px;top:544.40px;">.....</div>
<div class="t r sx" style="right:888.50px;top:543.40px;">53,7</div>
<div class="t r sx" style="right:827.50px;top:543.40px;">14,6%</div>
<div class="t r sx" style="right:1135.00px;top:563.16px;">55,30</div>
<div class="t r dots" style="right:1076.00px;top:564.16px;">.....</div>
<div class="t r sx" style="right:888.50px;top:563.16px;">57,4</div>
<div class="t r sx" style="right:827.50px;top:563.16px;">14,9%</div>
<div class="t r sx" style="right:1135.00px;top:582.92px;">61,50</div>
<div class="t r dots" style="right:1076.00px;top:583.92px;">.....</div>
<div class="t r sx" style="right:888.50px;top:582.92px;">60,9</div>
<div class="t r sx" style="right:827.50px;top:582.92px;">15,2%</div>
<div class="t r sx" style="right:1135.00px;top:602.68px;">69,15</div>
<div class="t r dots" style="right:1076.00px;top:603.68px;">.....</div>
<div class="t r sx" style="right:888.50px;top:602.68px;">64,3</div>
<div class="t r sx" style="right:827.50px;top:602.68px;">15,7%</div>
<div class="t r sx" style="right:1135.00px;top:622.44px;">75,90</div>
<div class="t r dots" style="right:1076.00px;top:623.44px;">.....</div>
<div class="t r sx" style="right:888.50px;top:622.44px;">67,4</div>
<div class="t r sx" style="right:827.50px;top:622.44px;">16,0%</div>
<div class="t r sx" style="right:766.00px;top:247.00px;">6,75</div>
<div class="t r dots" style="right:707.00px;top:248.00px;">.....</div>
<div class="t r sx" style="right:519.50px;top:247.00px;">11,8</div>
<div class="t r sx" style="right:458.50px;top:247.00px;">11,7%</div>
<div class="t r sx" style="right:766.00px;top:266.76px;">8,25</div>
<div class="t r dots" style="right:707.00px;top:267.76px;">.....</div>
<div class="t r sx" style="right:519.50px;top:266.76px;">13,8</div>
<div class="t r sx" style="right:458.50px;top:266.76px;">11,9%</div>
<div class="t r sx" style="right:766.00px;top:286.52px;">9,75</div>
<div class="t r dots" style="right:707.00px;top:287.52px;">.....</div>
<div class="t r sx" style="right:519.50px;top:286.52px;">16,0</div>
<div class="t r sx" style="right:458.50px;top:286.52px;">12,0%</div>
<div class="t r sx" style="right:766.00px;top:306.28px;">11,70</div>
<div class="t r dots" style="right:707.00px;top:307.28px;">.....</div>
<div class="t r sx" style="right:519.50px;top:306.28px;">18,4</div>
<div class="t r sx" style="right:458.50px;top:306.28px;">12,1%</div>
<div class="t r sx" style="right:766.00px;top:326.04px;">13,80</div>
<div class="t r dots" style="right:707.00px;top:327.04px;">.....</div>
<div class="t r sx" style="right:519.50px;top:326.04px;">20,9</div>
<div class="t r sx" style="right:458.50px;top:326.04px;">12,3%</div>
<div class="t r sx" style="right:766.00px;top:345.80px;">16,55</div>
<div class="t r dots" style="right:707.00px;top:346.80px;">.....</div>
<div class="t r sx" style="right:519.50px;top:345.80px;">23,6</div>
<div class="t r sx" style="right:458.50px;top:345.80px;">12,5%</div>
<div class="t r sx" style="right:766.00px;top:365.56px;">19,35</div>
<div class="t r dots" style="right:707.00px;top:366.56px;">.....</div>
<div class="t r sx" style="right:519.50px;top:365.56px;">26,5</div>
<div class="t r sx" style="right:458.50px;top:365.56px;">12,7%</div>
<div class="t r sx" style="right:766.00px;top:385.32px;">22,80</div>
<div class="t r dots" style="right:707.00px;top:386.32px;">.....</div>
<div class="t r sx" style="right:519.50px;top:385.32px;">29,4</div>
<div class="t r sx" style="right:458.50px;top:385.32px;">12,9%</div>
<div class="t r sx" style="right:766.00px;top:405.08px;">26,40</div>
<div class="t r dots" style="right:707.00px;top:406.08px;">.....</div>
<div class="t r sx" style="right:519.50px;top:405.08px;">32,5</div>
<div class="t r sx" style="right:458.50px;top:405.08px;">13,2%</div>
<div class="t r sx" style="right:766.00px;top:424.84px;">30,55</div>
<div class="t r dots" style="right:707.00px;top:425.84px;">.....</div>
<div class="t r sx" style="right:519.50px;top:424.84px;">35,6</div>
<div class="t r sx" style="right:458.50px;top:424.84px;">13,5%</div>
<div class="t r sx" style="right:766.00px;top:444.60px;">34,85</div>
<div class="t r dots" style="right:707.00px;top:445.60px;">.....</div>
<div class="t r sx" style="right:519.50px;top:444.60px;">38,7</div>
<div class="t r sx" style="right:458.50px;top:444.60px;">13,7%</div>
<div class="t r sx" style="right:766.00px;top:464.36px;">39,75</div>
<div class="t r dots" style="right:707.00px;top:465.36px;">.....</div>
<div class="t r sx" style="right:519.50px;top:464.36px;">41,9</div>
<div class="t r sx" style="right:458.50px;top:464.36px;">14,0%</div>
<div class="t r sx" style="right:766.00px;top:484.12px;">44,65</div>
<div class="t r dots" style="right:707.00px;top:485.12px;">.....</div>
<div class="t r sx" style="right:519.50px;top:484.12px;">45,0</div>
<div class="t r sx" style="right:458.50px;top:484.12px;">14,4%</div>
<div class="t r sx" style="right:766.00px;top:503.88px;">49,90</div>
<div class="t r dots" style="right:707.00px;top:504.88px;">.....</div>
<div class="t r sx" style="right:519.50px;top:503.88px;">48,1</div>
<div class="t r sx" style="right:458.50px;top:503.88px;">14,6%</div>
<div class="t r sx" style="right:766.00px;top:523.64px;">55,40</div>
<div class="t r dots" style="right:707.00px;top:524.64px;">.....</div>
<div class="t r sx" style="right:519.50px;top:523.64px;">51,2</div>
<div class="t r sx" style="right:458.50px;top:523.64px;">14,9%</div>
<div class="t r sx" style="right:766.00px;top:543.40px;">62,00</div>
<div class="t r dots" style="right:707.00px;top:544.40px;">.....</div>
<div class="t r sx" style="right:519.50px;top:543.40px;">54,1</div>
<div class="t r sx" style="right:458.50px;top:543.40px;">15,3%</div>
<div class="t r sx" style="right:766.00px;top:563.16px;">67,70</div>
<div class="t r dots" style="right:707.00px;top:564.16px;">.....</div>
<div class="t r sx" style="right:519.50px;top:563.16px;">57,0</div>
<div class="t r sx" style="right:458.50px;top:563.16px;">15,5%</div>
<div class="t r sx" style="right:766.00px;top:582.92px;">74,65</div>
<div class="t r dots" style="right:707.00px;top:583.92px;">.....</div>
<div class="t r sx" style="right:519.50px;top:582.92px;">59,8</div>
<div class="t r sx" style="right:458.50px;top:582.92px;">16,0%</div>
<div class="t r sx" style="right:766.00px;top:602.68px;">81,00</div>
<div class="t r dots" style="right:707.00px;top:603.68px;">.....</div>
<div class="t r sx" style="right:519.50px;top:602.68px;">62,4</div>
<div class="t r sx" style="right:458.50px;top:602.68px;">16,3%</div>
<div class="t r sx" style="right:766.00px;top:622.44px;">88,05</div>
<div class="t r dots" style="right:707.00px;top:623.44px;">.....</div>
<div class="t r sx" style="right:519.50px;top:622.44px;">65,0</div>
<div class="t r sx" style="right:458.50px;top:622.44px;">16,6%</div>
<div class="t r sx" style="right:397.00px;top:247.00px;">10,75</div>
<div class="t r dots" style="right:338.00px;top:248.00px;">.....</div>
<div class="t r sx" style="right:150.50px;top:247.00px;">17,2</div>
<div class="t r sx" style="right:89.50px;top:247.00px;">12,2%</div>
<div class="t r sx" style="right:397.00px;top:266.76px;">12,40</div>
<div class="t r dots" style="right:338.00px;top:267.76px;">.....</div>
<div class="t r sx" style="right:150.50px;top:266.76px;">19,1</div>
<div class="t r sx" style="right:89.50px;top:266.76px;">12,3%</div>
<div class="t r sx" style="right:397.00px;top:286.52px;">14,50</div>
<div class="t r dots" style="right:338.00px;top:287.52px;">.....</div>
<div class="t r sx" style="right:150.50px;top:286.52px;">21,0</div>
<div class="t r sx" style="right:89.50px;top:286.52px;">12,5%</div>
<div class="t r sx" style="right:397.00px;top:306.28px;">17,00</div>
<div class="t r dots" style="right:338.00px;top:307.28px;">.....</div>
<div class="t r sx" style="right:150.50px;top:306.28px;">23,0</div>
<div class="t r sx" style="right:89.50px;top:306.28px;">12,7%</div>
<div class="t r sx" style="right:397.00px;top:326.04px;">19,65</div>
<div class="t r dots" style="right:338.00px;top:327.04px;">.....</div>
<div class="t r sx" style="right:150.50px;top:326.04px;">25,1</div>
<div class="t r sx" style="right:89.50px;top:326.04px;">12,9%</div>
<div class="t r sx" style="right:397.00px;top:345.80px;">22,65</div>
<div class="t r dots" style="right:338.00px;top:346.80px;">.....</div>
<div class="t r sx" style="right:150.50px;top:345.80px;">27,2</div>
<div class="t r sx" style="right:89.50px;top:345.80px;">13,1%</div>
<div class="t r sx" style="right:397.00px;top:365.56px;">26,00</div>
<div class="t r dots" style="right:338.00px;top:366.56px;">.....</div>
<div class="t r sx" style="right:150.50px;top:365.56px;">29,3</div>
<div class="t r sx" style="right:89.50px;top:365.56px;">13,3%</div>
<div class="t r sx" style="right:397.00px;top:385.32px;">29,25</div>
<div class="t r dots" style="right:338.00px;top:386.32px;">.....</div>
<div class="t r sx" style="right:150.50px;top:385.32px;">31,5</div>
<div class="t r sx" style="right:89.50px;top:385.32px;">13,5%</div>
<div class="t r sx" style="right:397.00px;top:405.08px;">33,50</div>
<div class="t r dots" style="right:338.00px;top:406.08px;">.....</div>
<div class="t r sx" style="right:150.50px;top:405.08px;">33,6</div>
<div class="t r sx" style="right:89.50px;top:405.08px;">13,8%</div>
<div class="t r sx" style="right:397.00px;top:424.84px;">37,50</div>
<div class="t r dots" style="right:338.00px;top:425.84px;">.....</div>
<div class="t r sx" style="right:150.50px;top:424.84px;">35,8</div>
<div class="t r sx" style="right:89.50px;top:424.84px;">14,1%</div>
<div class="t r sx" style="right:397.00px;top:444.60px;">42,00</div>
<div class="t r dots" style="right:338.00px;top:445.60px;">.....</div>
<div class="t r sx" style="right:150.50px;top:444.60px;">38,0</div>
<div class="t r sx" style="right:89.50px;top:444.60px;">14,2%</div>
<div class="t r sx" style="right:397.00px;top:464.36px;">46,75</div>
<div class="t r dots" style="right:338.00px;top:465.36px;">.....</div>
<div class="t r sx" style="right:150.50px;top:464.36px;">40,2</div>
<div class="t r sx" style="right:89.50px;top:464.36px;">14,5%</div>
<div class="t r sx" style="right:397.00px;top:484.12px;">51,90</div>
<div class="t r dots" style="right:338.00px;top:485.12px;">.....</div>
<div class="t r sx" style="right:150.50px;top:484.12px;">42,4</div>
<div class="t r sx" style="right:89.50px;top:484.12px;">14,8%</div>
<div class="t r sx" style="right:397.00px;top:503.88px;">57,15</div>
<div class="t r dots" style="right:338.00px;top:504.88px;">.....</div>
<div class="t r sx" style="right:150.50px;top:503.88px;">44,5</div>
<div class="t r sx" style="right:89.50px;top:503.88px;">15,0%</div>
<div class="t r sx" style="right:397.00px;top:523.64px;">62,65</div>
<div class="t r dots" style="right:338.00px;top:524.64px;">.....</div>
<div class="t r sx" style="right:150.50px;top:523.64px;">46,6</div>
<div class="t r sx" style="right:89.50px;top:523.64px;">15,3%</div>
<div class="t r sx" style="right:397.00px;top:543.40px;">68,40</div>
<div class="t r dots" style="right:338.00px;top:544.40px;">.....</div>
<div class="t r sx" style="right:150.50px;top:543.40px;">48,7</div>
<div class="t r sx" style="right:89.50px;top:543.40px;">15,6%</div>
<div class="t r sx" style="right:397.00px;top:563.16px;">74,50</div>
<div class="t r dots" style="right:338.00px;top:564.16px;">.....</div>
<div class="t r sx" style="right:150.50px;top:563.16px;">50,8</div>
<div class="t r sx" style="right:89.50px;top:563.16px;">16,0%</div>
<div class="t r sx" style="right:397.00px;top:582.92px;">80,65</div>
<div class="t r dots" style="right:338.00px;top:583.92px;">.....</div>
<div class="t r sx" style="right:150.50px;top:582.92px;">52,8</div>
<div class="t r sx" style="right:89.50px;top:582.92px;">16,2%</div>
<div class="t r sx" style="right:397.00px;top:602.68px;">87,25</div>
<div class="t r dots" style="right:338.00px;top:603.68px;">.....</div>
<div class="t r sx" style="right:150.50px;top:602.68px;">54,8</div>
<div class="t r sx" style="right:89.50px;top:602.68px;">16,5%</div>
<div class="t r sx" style="right:397.00px;top:622.44px;">93,75</div>
<div class="t r dots" style="right:338.00px;top:623.44px;">.....</div>
<div class="t r sx" style="right:150.50px;top:622.44px;">56,8</div>
<div class="t r sx" style="right:89.50px;top:622.44px;">16,7%</div>
<div class="a " style="left:80.00px;top:644.30px;width:1845.00px;height:401.20px;background:#f4f4f4"></div>
<div class="a " style="left:80.00px;top:645.30px;width:369.00px;height:19.76px;background:#ffffff"></div>
<div class="a " style="left:80.00px;top:665.06px;width:369.00px;height:19.76px;background:#ffffff"></div>
<div class="a " style="left:80.00px;top:684.82px;width:369.00px;height:19.76px;background:#ffffff"></div>
<div class="a " style="left:80.00px;top:704.58px;width:369.00px;height:19.76px;background:#ffffff"></div>
<div class="a " style="left:80.00px;top:724.34px;width:369.00px;height:19.76px;background:#ffffff"></div>
<div class="a " style="left:80.00px;top:744.10px;width:369.00px;height:19.76px;background:#ffffff"></div>
<div class="a " style="left:80.00px;top:763.86px;width:369.00px;height:19.76px;background:#ffffff"></div>
<div class="a " style="left:80.00px;top:783.62px;width:369.00px;height:19.76px;background:#ffffff"></div>
<div class="a " style="left:80.00px;top:803.38px;width:369.00px;height:19.76px;background:#ffffff"></div>
<div class="a " style="left:80.00px;top:823.14px;width:369.00px;height:19.76px;background:#ffffff"></div>
<div class="a " style="left:80.00px;top:842.90px;width:369.00px;height:19.76px;background:#ffffff"></div>
<div class="a " style="left:80.00px;top:862.66px;width:369.00px;height:19.76px;background:#ffffff"></div>
<div class="a " style="left:80.00px;top:882.42px;width:369.00px;height:19.76px;background:#ffffff"></div>
<div class="a " style="left:80.00px;top:902.18px;width:369.00px;height:19.76px;background:#ffffff"></div>
<div class="a " style="left:80.00px;top:921.94px;width:369.00px;height:19.76px;background:#ffffff"></div>
<div class="a " style="left:80.00px;top:941.70px;width:369.00px;height:19.76px;background:#ffffff"></div>
<div class="a " style="left:80.00px;top:961.46px;width:369.00px;height:19.76px;background:#ffffff"></div>
<div class="a " style="left:80.00px;top:981.22px;width:369.00px;height:19.76px;background:#ffffff"></div>
<div class="a " style="left:80.00px;top:1000.98px;width:369.00px;height:19.76px;background:#ffffff"></div>
<div class="a " style="left:80.00px;top:1020.74px;width:369.00px;height:19.76px;background:#ffffff"></div>
<div class="a " style="left:80.00px;top:1040.50px;width:369.00px;height:4.50px;background:#f2f2f2"></div>
<div class="a " style="left:449.00px;top:645.30px;width:369.00px;height:19.76px;background:#fdedfd"></div>
<div class="a " style="left:449.00px;top:665.06px;width:369.00px;height:19.76px;background:#fdedfd"></div>
<div class="a " style="left:449.00px;top:684.82px;width:369.00px;height:19.76px;background:#e4fdfd"></div>
<div class="a " style="left:449.00px;top:704.58px;width:369.00px;height:19.76px;background:#e4fdfd"></div>
<div class="a " style="left:449.00px;top:724.34px;width:369.00px;height:19.76px;background:#e4fdfd"></div>
<div class="a " style="left:449.00px;top:744.10px;width:369.00px;height:19.76px;background:#e4fdfd"></div>
<div class="a " style="left:449.00px;top:763.86px;width:369.00px;height:19.76px;background:#e4fdfd"></div>
<div class="a " style="left:449.00px;top:783.62px;width:369.00px;height:19.76px;background:#e4fdfd"></div>
<div class="a " style="left:449.00px;top:803.38px;width:369.00px;height:19.76px;background:#e4fdfd"></div>
<div class="a " style="left:449.00px;top:823.14px;width:369.00px;height:19.76px;background:#e4fdfd"></div>
<div class="a " style="left:449.00px;top:842.90px;width:369.00px;height:19.76px;background:#ffffff"></div>
<div class="a " style="left:449.00px;top:862.66px;width:369.00px;height:19.76px;background:#ffffff"></div>
<div class="a " style="left:449.00px;top:882.42px;width:369.00px;height:19.76px;background:#ffffff"></div>
<div class="a " style="left:449.00px;top:902.18px;width:369.00px;height:19.76px;background:#ffffff"></div>
<div class="a " style="left:449.00px;top:921.94px;width:369.00px;height:19.76px;background:#ffffff"></div>
<div class="a " style="left:449.00px;top:941.70px;width:369.00px;height:19.76px;background:#ffffff"></div>
<div class="a " style="left:449.00px;top:961.46px;width:369.00px;height:19.76px;background:#ffffff"></div>
<div class="a " style="left:449.00px;top:981.22px;width:369.00px;height:19.76px;background:#ffffff"></div>
<div class="a " style="left:449.00px;top:1000.98px;width:369.00px;height:19.76px;background:#ffffff"></div>
<div class="a " style="left:449.00px;top:1020.74px;width:369.00px;height:19.76px;background:#ffffff"></div>
<div class="a " style="left:449.00px;top:1040.50px;width:369.00px;height:4.50px;background:#f2f2f2"></div>
<div class="a " style="left:818.00px;top:645.30px;width:369.00px;height:19.76px;background:#fdedfd"></div>
<div class="a " style="left:818.00px;top:665.06px;width:369.00px;height:19.76px;background:#fdedfd"></div>
<div class="a " style="left:818.00px;top:684.82px;width:369.00px;height:19.76px;background:#fdedfd"></div>
<div class="a " style="left:818.00px;top:704.58px;width:369.00px;height:19.76px;background:#fdedfd"></div>
<div class="a " style="left:818.00px;top:724.34px;width:369.00px;height:19.76px;background:#fdedfd"></div>
<div class="a " style="left:818.00px;top:744.10px;width:369.00px;height:19.76px;background:#fdedfd"></div>
<div class="a " style="left:818.00px;top:763.86px;width:369.00px;height:19.76px;background:#e4fdfd"></div>
<div class="a " style="left:818.00px;top:783.62px;width:369.00px;height:19.76px;background:#e4fdfd"></div>
<div class="a " style="left:818.00px;top:803.38px;width:369.00px;height:19.76px;background:#e4fdfd"></div>
<div class="a " style="left:818.00px;top:823.14px;width:369.00px;height:19.76px;background:#e4fdfd"></div>
<div class="a " style="left:818.00px;top:842.90px;width:369.00px;height:19.76px;background:#e4fdfd"></div>
<div class="a " style="left:818.00px;top:862.66px;width:369.00px;height:19.76px;background:#e4fdfd"></div>
<div class="a " style="left:818.00px;top:882.42px;width:369.00px;height:19.76px;background:#e4fdfd"></div>
<div class="a " style="left:818.00px;top:902.18px;width:369.00px;height:19.76px;background:#e4fdfd"></div>
<div class="a " style="left:818.00px;top:921.94px;width:369.00px;height:19.76px;background:#e4fdfd"></div>
<div class="a " style="left:818.00px;top:941.70px;width:369.00px;height:19.76px;background:#e4fdfd"></div>
<div class="a " style="left:818.00px;top:961.46px;width:369.00px;height:19.76px;background:#e4fdfd"></div>
<div class="a " style="left:818.00px;top:981.22px;width:369.00px;height:19.76px;background:#e4fdfd"></div>
<div class="a " style="left:818.00px;top:1000.98px;width:369.00px;height:19.76px;background:#ffffff"></div>
<div class="a " style="left:818.00px;top:1020.74px;width:369.00px;height:19.76px;background:#ffffff"></div>
<div class="a " style="left:818.00px;top:1040.50px;width:369.00px;height:4.50px;background:#f2f2f2"></div>
<div class="a " style="left:1187.00px;top:645.30px;width:369.00px;height:19.76px;background:#fdedfd"></div>
<div class="a " style="left:1187.00px;top:665.06px;width:369.00px;height:19.76px;background:#fdedfd"></div>
<div class="a " style="left:1187.00px;top:684.82px;width:369.00px;height:19.76px;background:#fdedfd"></div>
<div class="a " style="left:1187.00px;top:704.58px;width:369.00px;height:19.76px;background:#fdedfd"></div>
<div class="a " style="left:1187.00px;top:724.34px;width:369.00px;height:19.76px;background:#fdedfd"></div>
<div class="a " style="left:1187.00px;top:744.10px;width:369.00px;height:19.76px;background:#fdedfd"></div>
<div class="a " style="left:1187.00px;top:763.86px;width:369.00px;height:19.76px;background:#fdedfd"></div>
<div class="a " style="left:1187.00px;top:783.62px;width:369.00px;height:19.76px;background:#fdedfd"></div>
<div class="a " style="left:1187.00px;top:803.38px;width:369.00px;height:19.76px;background:#e4fdfd"></div>
<div class="a " style="left:1187.00px;top:823.14px;width:369.00px;height:19.76px;background:#e4fdfd"></div>
<div class="a " style="left:1187.00px;top:842.90px;width:369.00px;height:19.76px;background:#e4fdfd"></div>
<div class="a " style="left:1187.00px;top:862.66px;width:369.00px;height:19.76px;background:#e4fdfd"></div>
<div class="a " style="left:1187.00px;top:882.42px;width:369.00px;height:19.76px;background:#e4fdfd"></div>
<div class="a " style="left:1187.00px;top:902.18px;width:369.00px;height:19.76px;background:#e4fdfd"></div>
<div class="a " style="left:1187.00px;top:921.94px;width:369.00px;height:19.76px;background:#e4fdfd"></div>
<div class="a " style="left:1187.00px;top:941.70px;width:369.00px;height:19.76px;background:#e4fdfd"></div>
<div class="a " style="left:1187.00px;top:961.46px;width:369.00px;height:19.76px;background:#e4fdfd"></div>
<div class="a " style="left:1187.00px;top:981.22px;width:369.00px;height:19.76px;background:#e4fdfd"></div>
<div class="a " style="left:1187.00px;top:1000.98px;width:369.00px;height:19.76px;background:#e4fdfd"></div>
<div class="a " style="left:1187.00px;top:1020.74px;width:369.00px;height:19.76px;background:#e4fdfd"></div>
<div class="a " style="left:1187.00px;top:1040.50px;width:369.00px;height:4.50px;background:#f2f2f2"></div>
<div class="a " style="left:1556.00px;top:645.30px;width:369.00px;height:19.76px;background:#fdedfd"></div>
<div class="a " style="left:1556.00px;top:665.06px;width:369.00px;height:19.76px;background:#fdedfd"></div>
<div class="a " style="left:1556.00px;top:684.82px;width:369.00px;height:19.76px;background:#fdedfd"></div>
<div class="a " style="left:1556.00px;top:704.58px;width:369.00px;height:19.76px;background:#fdedfd"></div>
<div class="a " style="left:1556.00px;top:724.34px;width:369.00px;height:19.76px;background:#fdedfd"></div>
<div class="a " style="left:1556.00px;top:744.10px;width:369.00px;height:19.76px;background:#fdedfd"></div>
<div class="a " style="left:1556.00px;top:763.86px;width:369.00px;height:19.76px;background:#fdedfd"></div>
<div class="a " style="left:1556.00px;top:783.62px;width:369.00px;height:19.76px;background:#fdedfd"></div>
<div class="a " style="left:1556.00px;top:803.38px;width:369.00px;height:19.76px;background:#fdedfd"></div>
<div class="a " style="left:1556.00px;top:823.14px;width:369.00px;height:19.76px;background:#fdedfd"></div>
<div class="a " style="left:1556.00px;top:842.90px;width:369.00px;height:19.76px;background:#e4fdfd"></div>
<div class="a " style="left:1556.00px;top:862.66px;width:369.00px;height:19.76px;background:#e4fdfd"></div>
<div class="a " style="left:1556.00px;top:882.42px;width:369.00px;height:19.76px;background:#e4fdfd"></div>
<div class="a " style="left:1556.00px;top:902.18px;width:369.00px;height:19.76px;background:#e4fdfd"></div>
<div class="a " style="left:1556.00px;top:921.94px;width:369.00px;height:19.76px;background:#e4fdfd"></div>
<div class="a " style="left:1556.00px;top:941.70px;width:369.00px;height:19.76px;background:#e4fdfd"></div>
<div class="a " style="left:1556.00px;top:961.46px;width:369.00px;height:19.76px;background:#e4fdfd"></div>
<div class="a " style="left:1556.00px;top:981.22px;width:369.00px;height:19.76px;background:#e4fdfd"></div>
<div class="a " style="left:1556.00px;top:1000.98px;width:369.00px;height:19.76px;background:#e4fdfd"></div>
<div class="a " style="left:1556.00px;top:1020.74px;width:369.00px;height:19.76px;background:#e4fdfd"></div>
<div class="a " style="left:1556.00px;top:1040.50px;width:369.00px;height:4.50px;background:#f2f2f2"></div>
<div class="a " style="left:80.00px;top:645.00px;width:369.00px;height:1.00px;background:#c0c0c0"></div>
<div class="a " style="left:80.00px;top:665.00px;width:369.00px;height:1.00px;background:#c6c6ca"></div>
<div class="a " style="left:80.00px;top:685.00px;width:369.00px;height:1.00px;background:#c6c6ca"></div>
<div class="a " style="left:80.00px;top:704.00px;width:369.00px;height:1.00px;background:#c6c6ca"></div>
<div class="a " style="left:80.00px;top:724.00px;width:369.00px;height:1.00px;background:#c6c6ca"></div>
<div class="a " style="left:80.00px;top:744.00px;width:369.00px;height:1.00px;background:#c6c6ca"></div>
<div class="a " style="left:80.00px;top:764.00px;width:369.00px;height:1.00px;background:#c6c6ca"></div>
<div class="a " style="left:80.00px;top:783.00px;width:369.00px;height:1.00px;background:#c6c6ca"></div>
<div class="a " style="left:80.00px;top:803.00px;width:369.00px;height:1.00px;background:#c6c6ca"></div>
<div class="a " style="left:80.00px;top:823.00px;width:369.00px;height:1.00px;background:#c6c6ca"></div>
<div class="a " style="left:80.00px;top:843.00px;width:369.00px;height:1.00px;background:#c6c6ca"></div>
<div class="a " style="left:80.00px;top:862.00px;width:369.00px;height:1.00px;background:#c6c6ca"></div>
<div class="a " style="left:80.00px;top:882.00px;width:369.00px;height:1.00px;background:#c6c6ca"></div>
<div class="a " style="left:80.00px;top:902.00px;width:369.00px;height:1.00px;background:#c6c6ca"></div>
<div class="a " style="left:80.00px;top:922.00px;width:369.00px;height:1.00px;background:#c6c6ca"></div>
<div class="a " style="left:80.00px;top:941.00px;width:369.00px;height:1.00px;background:#c6c6ca"></div>
<div class="a " style="left:80.00px;top:961.00px;width:369.00px;height:1.00px;background:#c6c6ca"></div>
<div class="a " style="left:80.00px;top:981.00px;width:369.00px;height:1.00px;background:#c6c6ca"></div>
<div class="a " style="left:80.00px;top:1001.00px;width:369.00px;height:1.00px;background:#c6c6ca"></div>
<div class="a " style="left:80.00px;top:1020.00px;width:369.00px;height:1.00px;background:#c6c6ca"></div>
<div class="a " style="left:80.00px;top:1040.00px;width:369.00px;height:1.00px;background:#c6c6ca"></div>
<div class="a " style="left:449.00px;top:645.00px;width:369.00px;height:1.00px;background:#c0c0c0"></div>
<div class="a " style="left:449.00px;top:665.00px;width:369.00px;height:1.00px;background:#d0c2d0"></div>
<div class="a " style="left:449.00px;top:685.00px;width:369.00px;height:1.00px;background:#d0c2d0"></div>
<div class="a " style="left:449.00px;top:704.00px;width:369.00px;height:1.00px;background:#b9cdd0"></div>
<div class="a " style="left:449.00px;top:724.00px;width:369.00px;height:1.00px;background:#b9cdd0"></div>
<div class="a " style="left:449.00px;top:744.00px;width:369.00px;height:1.00px;background:#b9cdd0"></div>
<div class="a " style="left:449.00px;top:764.00px;width:369.00px;height:1.00px;background:#b9cdd0"></div>
<div class="a " style="left:449.00px;top:783.00px;width:369.00px;height:1.00px;background:#b9cdd0"></div>
<div class="a " style="left:449.00px;top:803.00px;width:369.00px;height:1.00px;background:#b9cdd0"></div>
<div class="a " style="left:449.00px;top:823.00px;width:369.00px;height:1.00px;background:#b9cdd0"></div>
<div class="a " style="left:449.00px;top:843.00px;width:369.00px;height:1.00px;background:#b9cdd0"></div>
<div class="a " style="left:449.00px;top:862.00px;width:369.00px;height:1.00px;background:#c6c6ca"></div>
<div class="a " style="left:449.00px;top:882.00px;width:369.00px;height:1.00px;background:#c6c6ca"></div>
<div class="a " style="left:449.00px;top:902.00px;width:369.00px;height:1.00px;background:#c6c6ca"></div>
<div class="a " style="left:449.00px;top:922.00px;width:369.00px;height:1.00px;background:#c6c6ca"></div>
<div class="a " style="left:449.00px;top:941.00px;width:369.00px;height:1.00px;background:#c6c6ca"></div>
<div class="a " style="left:449.00px;top:961.00px;width:369.00px;height:1.00px;background:#c6c6ca"></div>
<div class="a " style="left:449.00px;top:981.00px;width:369.00px;height:1.00px;background:#c6c6ca"></div>
<div class="a " style="left:449.00px;top:1001.00px;width:369.00px;height:1.00px;background:#c6c6ca"></div>
<div class="a " style="left:449.00px;top:1020.00px;width:369.00px;height:1.00px;background:#c6c6ca"></div>
<div class="a " style="left:449.00px;top:1040.00px;width:369.00px;height:1.00px;background:#c6c6ca"></div>
<div class="a " style="left:818.00px;top:645.00px;width:369.00px;height:1.00px;background:#c0c0c0"></div>
<div class="a " style="left:818.00px;top:665.00px;width:369.00px;height:1.00px;background:#d0c2d0"></div>
<div class="a " style="left:818.00px;top:685.00px;width:369.00px;height:1.00px;background:#d0c2d0"></div>
<div class="a " style="left:818.00px;top:704.00px;width:369.00px;height:1.00px;background:#d0c2d0"></div>
<div class="a " style="left:818.00px;top:724.00px;width:369.00px;height:1.00px;background:#d0c2d0"></div>
<div class="a " style="left:818.00px;top:744.00px;width:369.00px;height:1.00px;background:#d0c2d0"></div>
<div class="a " style="left:818.00px;top:764.00px;width:369.00px;height:1.00px;background:#d0c2d0"></div>
<div class="a " style="left:818.00px;top:783.00px;width:369.00px;height:1.00px;background:#b9cdd0"></div>
<div class="a " style="left:818.00px;top:803.00px;width:369.00px;height:1.00px;background:#b9cdd0"></div>
<div class="a " style="left:818.00px;top:823.00px;width:369.00px;height:1.00px;background:#b9cdd0"></div>
<div class="a " style="left:818.00px;top:843.00px;width:369.00px;height:1.00px;background:#b9cdd0"></div>
<div class="a " style="left:818.00px;top:862.00px;width:369.00px;height:1.00px;background:#b9cdd0"></div>
<div class="a " style="left:818.00px;top:882.00px;width:369.00px;height:1.00px;background:#b9cdd0"></div>
<div class="a " style="left:818.00px;top:902.00px;width:369.00px;height:1.00px;background:#b9cdd0"></div>
<div class="a " style="left:818.00px;top:922.00px;width:369.00px;height:1.00px;background:#b9cdd0"></div>
<div class="a " style="left:818.00px;top:941.00px;width:369.00px;height:1.00px;background:#b9cdd0"></div>
<div class="a " style="left:818.00px;top:961.00px;width:369.00px;height:1.00px;background:#b9cdd0"></div>
<div class="a " style="left:818.00px;top:981.00px;width:369.00px;height:1.00px;background:#b9cdd0"></div>
<div class="a " style="left:818.00px;top:1001.00px;width:369.00px;height:1.00px;background:#b9cdd0"></div>
<div class="a " style="left:818.00px;top:1020.00px;width:369.00px;height:1.00px;background:#c6c6ca"></div>
<div class="a " style="left:818.00px;top:1040.00px;width:369.00px;height:1.00px;background:#c6c6ca"></div>
<div class="a " style="left:1187.00px;top:645.00px;width:369.00px;height:1.00px;background:#c0c0c0"></div>
<div class="a " style="left:1187.00px;top:665.00px;width:369.00px;height:1.00px;background:#d0c2d0"></div>
<div class="a " style="left:1187.00px;top:685.00px;width:369.00px;height:1.00px;background:#d0c2d0"></div>
<div class="a " style="left:1187.00px;top:704.00px;width:369.00px;height:1.00px;background:#d0c2d0"></div>
<div class="a " style="left:1187.00px;top:724.00px;width:369.00px;height:1.00px;background:#d0c2d0"></div>
<div class="a " style="left:1187.00px;top:744.00px;width:369.00px;height:1.00px;background:#d0c2d0"></div>
<div class="a " style="left:1187.00px;top:764.00px;width:369.00px;height:1.00px;background:#d0c2d0"></div>
<div class="a " style="left:1187.00px;top:783.00px;width:369.00px;height:1.00px;background:#d0c2d0"></div>
<div class="a " style="left:1187.00px;top:803.00px;width:369.00px;height:1.00px;background:#d0c2d0"></div>
<div class="a " style="left:1187.00px;top:823.00px;width:369.00px;height:1.00px;background:#b9cdd0"></div>
<div class="a " style="left:1187.00px;top:843.00px;width:369.00px;height:1.00px;background:#b9cdd0"></div>
<div class="a " style="left:1187.00px;top:862.00px;width:369.00px;height:1.00px;background:#b9cdd0"></div>
<div class="a " style="left:1187.00px;top:882.00px;width:369.00px;height:1.00px;background:#b9cdd0"></div>
<div class="a " style="left:1187.00px;top:902.00px;width:369.00px;height:1.00px;background:#b9cdd0"></div>
<div class="a " style="left:1187.00px;top:922.00px;width:369.00px;height:1.00px;background:#b9cdd0"></div>
<div class="a " style="left:1187.00px;top:941.00px;width:369.00px;height:1.00px;background:#b9cdd0"></div>
<div class="a " style="left:1187.00px;top:961.00px;width:369.00px;height:1.00px;background:#b9cdd0"></div>
<div class="a " style="left:1187.00px;top:981.00px;width:369.00px;height:1.00px;background:#b9cdd0"></div>
<div class="a " style="left:1187.00px;top:1001.00px;width:369.00px;height:1.00px;background:#b9cdd0"></div>
<div class="a " style="left:1187.00px;top:1020.00px;width:369.00px;height:1.00px;background:#b9cdd0"></div>
<div class="a " style="left:1187.00px;top:1040.00px;width:369.00px;height:1.00px;background:#b9cdd0"></div>
<div class="a " style="left:1556.00px;top:645.00px;width:369.00px;height:1.00px;background:#c0c0c0"></div>
<div class="a " style="left:1556.00px;top:665.00px;width:369.00px;height:1.00px;background:#d0c2d0"></div>
<div class="a " style="left:1556.00px;top:685.00px;width:369.00px;height:1.00px;background:#d0c2d0"></div>
<div class="a " style="left:1556.00px;top:704.00px;width:369.00px;height:1.00px;background:#d0c2d0"></div>
<div class="a " style="left:1556.00px;top:724.00px;width:369.00px;height:1.00px;background:#d0c2d0"></div>
<div class="a " style="left:1556.00px;top:744.00px;width:369.00px;height:1.00px;background:#d0c2d0"></div>
<div class="a " style="left:1556.00px;top:764.00px;width:369.00px;height:1.00px;background:#d0c2d0"></div>
<div class="a " style="left:1556.00px;top:783.00px;width:369.00px;height:1.00px;background:#d0c2d0"></div>
<div class="a " style="left:1556.00px;top:803.00px;width:369.00px;height:1.00px;background:#d0c2d0"></div>
<div class="a " style="left:1556.00px;top:823.00px;width:369.00px;height:1.00px;background:#d0c2d0"></div>
<div class="a " style="left:1556.00px;top:843.00px;width:369.00px;height:1.00px;background:#d0c2d0"></div>
<div class="a " style="left:1556.00px;top:862.00px;width:369.00px;height:1.00px;background:#b9cdd0"></div>
<div class="a " style="left:1556.00px;top:882.00px;width:369.00px;height:1.00px;background:#b9cdd0"></div>
<div class="a " style="left:1556.00px;top:902.00px;width:369.00px;height:1.00px;background:#b9cdd0"></div>
<div class="a " style="left:1556.00px;top:922.00px;width:369.00px;height:1.00px;background:#b9cdd0"></div>
<div class="a " style="left:1556.00px;top:941.00px;width:369.00px;height:1.00px;background:#b9cdd0"></div>
<div class="a " style="left:1556.00px;top:961.00px;width:369.00px;height:1.00px;background:#b9cdd0"></div>
<div class="a " style="left:1556.00px;top:981.00px;width:369.00px;height:1.00px;background:#b9cdd0"></div>
<div class="a " style="left:1556.00px;top:1001.00px;width:369.00px;height:1.00px;background:#b9cdd0"></div>
<div class="a " style="left:1556.00px;top:1020.00px;width:369.00px;height:1.00px;background:#b9cdd0"></div>
<div class="a " style="left:1556.00px;top:1040.00px;width:369.00px;height:1.00px;background:#b9cdd0"></div>
<div class="a " style="left:80.00px;top:1043.60px;width:1845.00px;height:1.20px;background:#c2c2c2"></div>
<div class="a " style="left:78.90px;top:644.30px;width:1.00px;height:401.20px;background:#bdbac6"></div>
<div class="a " style="left:449.10px;top:644.30px;width:1.00px;height:401.20px;background:#bdbac6"></div>
<div class="a " style="left:817.70px;top:644.30px;width:1.00px;height:401.20px;background:#bdbac6"></div>
<div class="a " style="left:1186.50px;top:644.30px;width:1.00px;height:401.20px;background:#bdbac6"></div>
<div class="a " style="left:1555.00px;top:644.30px;width:1.00px;height:401.20px;background:#bdbac6"></div>
<div class="a " style="left:1925.50px;top:644.30px;width:1.00px;height:401.20px;background:#bdbac6"></div>
<div class="t r sx" style="right:1873.00px;top:647.30px;">0,13</div>
<div class="t r dots" style="right:1814.00px;top:648.30px;">.....</div>
<div class="t r sx" style="right:1626.50px;top:647.30px;">0,00</div>
<div class="t r sx" style="right:1873.00px;top:667.06px;">0,10</div>
<div class="t r dots" style="right:1814.00px;top:668.06px;">.....</div>
<div class="t r sx" style="right:1626.50px;top:667.06px;">0,00</div>
<div class="t r sx" style="right:1873.00px;top:686.82px;">0,08</div>
<div class="t r dots" style="right:1814.00px;top:687.82px;">.....</div>
<div class="t r sx" style="right:1626.50px;top:686.82px;">0,00</div>
<div class="t r sx" style="right:1873.00px;top:706.58px;">0,08</div>
<div class="t r dots" style="right:1814.00px;top:707.58px;">.....</div>
<div class="t r sx" style="right:1626.50px;top:706.58px;">0,00</div>
<div class="t r sx" style="right:1873.00px;top:726.34px;">0,10</div>
<div class="t r dots" style="right:1814.00px;top:727.34px;">.....</div>
<div class="t r sx" style="right:1626.50px;top:726.34px;">0,00</div>
<div class="t r sx" style="right:1873.00px;top:746.10px;">0,08</div>
<div class="t r dots" style="right:1814.00px;top:747.10px;">.....</div>
<div class="t r sx" style="right:1626.50px;top:746.10px;">0,00</div>
<div class="t r sx" style="right:1873.00px;top:765.86px;">0,10</div>
<div class="t r dots" style="right:1814.00px;top:766.86px;">.....</div>
<div class="t r sx" style="right:1626.50px;top:765.86px;">0,00</div>
<div class="t r sx" style="right:1873.00px;top:785.62px;">0,07</div>
<div class="t r dots" style="right:1814.00px;top:786.62px;">.....</div>
<div class="t r sx" style="right:1626.50px;top:785.62px;">0,00</div>
<div class="t r sx" style="right:1873.00px;top:805.38px;">0,08</div>
<div class="t r dots" style="right:1814.00px;top:806.38px;">.....</div>
<div class="t r sx" style="right:1626.50px;top:805.38px;">0,00</div>
<div class="t r sx" style="right:1873.00px;top:825.14px;">0,07</div>
<div class="t r dots" style="right:1814.00px;top:826.14px;">.....</div>
<div class="t r sx" style="right:1626.50px;top:825.14px;">0,00</div>
<div class="t r sx" style="right:1873.00px;top:844.90px;">0,08</div>
<div class="t r dots" style="right:1814.00px;top:845.90px;">.....</div>
<div class="t r sx" style="right:1626.50px;top:844.90px;">0,00</div>
<div class="t r sx" style="right:1873.00px;top:864.66px;">0,05</div>
<div class="t r dots" style="right:1814.00px;top:865.66px;">.....</div>
<div class="t r sx" style="right:1626.50px;top:864.66px;">0,00</div>
<div class="t r sx" style="right:1873.00px;top:884.42px;">0,08</div>
<div class="t r dots" style="right:1814.00px;top:885.42px;">.....</div>
<div class="t r sx" style="right:1626.50px;top:884.42px;">0,00</div>
<div class="t r sx" style="right:1873.00px;top:904.18px;">0,08</div>
<div class="t r dots" style="right:1814.00px;top:905.18px;">.....</div>
<div class="t r sx" style="right:1626.50px;top:904.18px;">0,00</div>
<div class="t r sx" style="right:1873.00px;top:923.94px;">0,05</div>
<div class="t r dots" style="right:1814.00px;top:924.94px;">.....</div>
<div class="t r sx" style="right:1626.50px;top:923.94px;">0,00</div>
<div class="t r sx" style="right:1873.00px;top:943.70px;">0,05</div>
<div class="t r dots" style="right:1814.00px;top:944.70px;">.....</div>
<div class="t r sx" style="right:1626.50px;top:943.70px;">0,00</div>
<div class="t r sx" style="right:1873.00px;top:963.46px;">0,08</div>
<div class="t r dots" style="right:1814.00px;top:964.46px;">.....</div>
<div class="t r sx" style="right:1626.50px;top:963.46px;">0,00</div>
<div class="t r sx" style="right:1873.00px;top:983.22px;">0,05</div>
<div class="t r dots" style="right:1814.00px;top:984.22px;">.....</div>
<div class="t r sx" style="right:1626.50px;top:983.22px;">0,00</div>
<div class="t r sx" style="right:1873.00px;top:1002.98px;">0,05</div>
<div class="t r dots" style="right:1814.00px;top:1003.98px;">.....</div>
<div class="t r sx" style="right:1626.50px;top:1002.98px;">0,00</div>
<div class="t r sx" style="right:1873.00px;top:1022.74px;">0,05</div>
<div class="t r dots" style="right:1814.00px;top:1023.74px;">.....</div>
<div class="t r sx" style="right:1626.50px;top:1022.74px;">0,00</div>
<div class="t r sx" style="right:1504.00px;top:647.30px;">13,70</div>
<div class="t r dots" style="right:1445.00px;top:648.30px;">.....</div>
<div class="t r sx" style="right:1257.50px;top:647.30px;">-17,4</div>
<div class="t r sx" style="right:1196.50px;top:647.30px;">18,1%</div>
<div class="t r sx" style="right:1504.00px;top:667.06px;">12,25</div>
<div class="t r dots" style="right:1445.00px;top:668.06px;">.....</div>
<div class="t r sx" style="right:1257.50px;top:667.06px;">-15,5</div>
<div class="t r sx" style="right:1196.50px;top:667.06px;">18,6%</div>
<div class="t r sx" style="right:1504.00px;top:686.82px;">11,10</div>
<div class="t r dots" style="right:1445.00px;top:687.82px;">.....</div>
<div class="t r sx" style="right:1257.50px;top:686.82px;">-13,9</div>
<div class="t r sx" style="right:1196.50px;top:686.82px;">19,1%</div>
<div class="t r sx" style="right:1504.00px;top:706.58px;">10,05</div>
<div class="t r dots" style="right:1445.00px;top:707.58px;">.....</div>
<div class="t r sx" style="right:1257.50px;top:706.58px;">-12,4</div>
<div class="t r sx" style="right:1196.50px;top:706.58px;">19,7%</div>
<div class="t r sx" style="right:1504.00px;top:726.34px;">9,15</div>
<div class="t r dots" style="right:1445.00px;top:727.34px;">.....</div>
<div class="t r sx" style="right:1257.50px;top:726.34px;">-11,1</div>
<div class="t r sx" style="right:1196.50px;top:726.34px;">20,3%</div>
<div class="t r sx" style="right:1504.00px;top:746.10px;">8,25</div>
<div class="t r dots" style="right:1445.00px;top:747.10px;">.....</div>
<div class="t r sx" style="right:1257.50px;top:746.10px;">-9,96</div>
<div class="t r sx" style="right:1196.50px;top:746.10px;">20,7%</div>
<div class="t r sx" style="right:1504.00px;top:765.86px;">7,50</div>
<div class="t r dots" style="right:1445.00px;top:766.86px;">.....</div>
<div class="t r sx" style="right:1257.50px;top:765.86px;">-8,95</div>
<div class="t r sx" style="right:1196.50px;top:765.86px;">21,2%</div>
<div class="t r sx" style="right:1504.00px;top:785.62px;">6,90</div>
<div class="t r dots" style="right:1445.00px;top:786.62px;">.....</div>
<div class="t r sx" style="right:1257.50px;top:785.62px;">-8,05</div>
<div class="t r sx" style="right:1196.50px;top:785.62px;">21,8%</div>
<div class="t r sx" style="right:1504.00px;top:805.38px;">6,30</div>
<div class="t r dots" style="right:1445.00px;top:806.38px;">.....</div>
<div class="t r sx" style="right:1257.50px;top:805.38px;">-7,26</div>
<div class="t r sx" style="right:1196.50px;top:805.38px;">22,3%</div>
<div class="t r sx" style="right:1504.00px;top:825.14px;">5,65</div>
<div class="t r dots" style="right:1445.00px;top:826.14px;">.....</div>
<div class="t r sx" style="right:1257.50px;top:825.14px;">-6,55</div>
<div class="t r sx" style="right:1196.50px;top:825.14px;">22,8%</div>
<div class="t r sx" style="right:1504.00px;top:844.90px;">5,25</div>
<div class="t r dots" style="right:1445.00px;top:845.90px;">.....</div>
<div class="t r sx" style="right:1257.50px;top:844.90px;">-5,93</div>
<div class="t r sx" style="right:1196.50px;top:844.90px;">23,4%</div>
<div class="t r sx" style="right:1504.00px;top:864.66px;">4,85</div>
<div class="t r dots" style="right:1445.00px;top:865.66px;">.....</div>
<div class="t r sx" style="right:1257.50px;top:864.66px;">-5,37</div>
<div class="t r sx" style="right:1196.50px;top:864.66px;">23,9%</div>
<div class="t r sx" style="right:1504.00px;top:884.42px;">4,50</div>
<div class="t r dots" style="right:1445.00px;top:885.42px;">.....</div>
<div class="t r sx" style="right:1257.50px;top:884.42px;">-4,88</div>
<div class="t r sx" style="right:1196.50px;top:884.42px;">24,5%</div>
<div class="t r sx" style="right:1504.00px;top:904.18px;">4,15</div>
<div class="t r sx" style="right:1442.50px;top:904.18px;">9,50</div>
<div class="t r sx" style="right:1319.50px;top:904.18px;color:#3b22c8">-2</div>
<div class="t r sx" style="right:1257.50px;top:904.18px;">-4,43</div>
<div class="t r sx" style="right:1196.50px;top:904.18px;">25,0%</div>
<div class="t r sx" style="right:1504.00px;top:923.94px;">3,80</div>
<div class="t r dots" style="right:1445.00px;top:924.94px;">.....</div>
<div class="t r sx" style="right:1257.50px;top:923.94px;">-4,04</div>
<div class="t r sx" style="right:1196.50px;top:923.94px;">25,6%</div>
<div class="t r sx" style="right:1504.00px;top:943.70px;">3,60</div>
<div class="t r dots" style="right:1445.00px;top:944.70px;">.....</div>
<div class="t r sx" style="right:1257.50px;top:943.70px;">-3,69</div>
<div class="t r sx" style="right:1196.50px;top:943.70px;">26,3%</div>
<div class="t r sx" style="right:1504.00px;top:963.46px;">3,30</div>
<div class="t r dots" style="right:1445.00px;top:964.46px;">.....</div>
<div class="t r sx" style="right:1257.50px;top:963.46px;">-3,37</div>
<div class="t r sx" style="right:1196.50px;top:963.46px;">26,7%</div>
<div class="t r sx" style="right:1504.00px;top:983.22px;">3,10</div>
<div class="t r dots" style="right:1445.00px;top:984.22px;">.....</div>
<div class="t r sx" style="right:1257.50px;top:983.22px;">-3,09</div>
<div class="t r sx" style="right:1196.50px;top:983.22px;">27,4%</div>
<div class="t r sx" style="right:1504.00px;top:1002.98px;">2,89</div>
<div class="t r dots" style="right:1445.00px;top:1003.98px;">.....</div>
<div class="t r sx" style="right:1257.50px;top:1002.98px;">-2,84</div>
<div class="t r sx" style="right:1196.50px;top:1002.98px;">27,8%</div>
<div class="t r sx" style="right:1504.00px;top:1022.74px;">2,66</div>
<div class="t r dots" style="right:1445.00px;top:1023.74px;">.....</div>
<div class="t r sx" style="right:1257.50px;top:1022.74px;">-2,61</div>
<div class="t r sx" style="right:1196.50px;top:1022.74px;">28,3%</div>
<div class="t r sx" style="right:1135.00px;top:647.30px;">28,65</div>
<div class="t r dots" style="right:1076.00px;top:648.30px;">.....</div>
<div class="t r sx" style="right:888.50px;top:647.30px;">-24,1</div>
<div class="t r sx" style="right:827.50px;top:647.30px;">17,6%</div>
<div class="t r sx" style="right:1135.00px;top:667.06px;">26,75</div>
<div class="t r dots" style="right:1076.00px;top:668.06px;">.....</div>
<div class="t r sx" style="right:888.50px;top:667.06px;">-22,5</div>
<div class="t r sx" style="right:827.50px;top:667.06px;">18,1%</div>
<div class="t r sx" style="right:1135.00px;top:686.82px;">25,10</div>
<div class="t r dots" style="right:1076.00px;top:687.82px;">.....</div>
<div class="t r sx" style="right:888.50px;top:686.82px;">-21,0</div>
<div class="t r sx" style="right:827.50px;top:686.82px;">18,5%</div>
<div class="t r sx" style="right:1135.00px;top:706.58px;">23,50</div>
<div class="t r dots" style="right:1076.00px;top:707.58px;">.....</div>
<div class="t r sx" style="right:888.50px;top:706.58px;">-19,5</div>
<div class="t r sx" style="right:827.50px;top:706.58px;">18,9%</div>
<div class="t r sx" style="right:1135.00px;top:726.34px;">21,80</div>
<div class="t r dots" style="right:1076.00px;top:727.34px;">.....</div>
<div class="t r sx" style="right:888.50px;top:726.34px;">-18,2</div>
<div class="t r sx" style="right:827.50px;top:726.34px;">19,3%</div>
<div class="t r sx" style="right:1135.00px;top:746.10px;">20,60</div>
<div class="t r dots" style="right:1076.00px;top:747.10px;">.....</div>
<div class="t r sx" style="right:888.50px;top:746.10px;">-17,0</div>
<div class="t r sx" style="right:827.50px;top:746.10px;">19,7%</div>
<div class="t r sx" style="right:1135.00px;top:765.86px;">19,10</div>
<div class="t r dots" style="right:1076.00px;top:766.86px;">.....</div>
<div class="t r sx" style="right:888.50px;top:765.86px;">-15,9</div>
<div class="t r sx" style="right:827.50px;top:765.86px;">20,0%</div>
<div class="t r sx" style="right:1135.00px;top:785.62px;">17,75</div>
<div class="t r dots" style="right:1076.00px;top:786.62px;">.....</div>
<div class="t r sx" style="right:888.50px;top:785.62px;">-14,9</div>
<div class="t r sx" style="right:827.50px;top:785.62px;">20,3%</div>
<div class="t r sx" style="right:1135.00px;top:805.38px;">16,75</div>
<div class="t r dots" style="right:1076.00px;top:806.38px;">.....</div>
<div class="t r sx" style="right:888.50px;top:805.38px;">-13,9</div>
<div class="t r sx" style="right:827.50px;top:805.38px;">20,8%</div>
<div class="t r sx" style="right:1135.00px;top:825.14px;">15,65</div>
<div class="t r dots" style="right:1076.00px;top:826.14px;">.....</div>
<div class="t r sx" style="right:888.50px;top:825.14px;">-13,0</div>
<div class="t r sx" style="right:827.50px;top:825.14px;">21,1%</div>
<div class="t r sx" style="right:1135.00px;top:844.90px;">14,75</div>
<div class="t r dots" style="right:1076.00px;top:845.90px;">.....</div>
<div class="t r sx" style="right:888.50px;top:844.90px;">-12,2</div>
<div class="t r sx" style="right:827.50px;top:844.90px;">21,5%</div>
<div class="t r sx" style="right:1135.00px;top:864.66px;">13,75</div>
<div class="t r dots" style="right:1076.00px;top:865.66px;">.....</div>
<div class="t r sx" style="right:888.50px;top:864.66px;">-11,4</div>
<div class="t r sx" style="right:827.50px;top:864.66px;">21,9%</div>
<div class="t r sx" style="right:1135.00px;top:884.42px;">12,75</div>
<div class="t r dots" style="right:1076.00px;top:885.42px;">.....</div>
<div class="t r sx" style="right:888.50px;top:884.42px;">-10,7</div>
<div class="t r sx" style="right:827.50px;top:884.42px;">22,1%</div>
<div class="t r sx" style="right:1135.00px;top:904.18px;">12,25</div>
<div class="t r dots" style="right:1076.00px;top:905.18px;">.....</div>
<div class="t r sx" style="right:888.50px;top:904.18px;">-9,97</div>
<div class="t r sx" style="right:827.50px;top:904.18px;">22,7%</div>
<div class="t r sx" style="right:1135.00px;top:923.94px;">11,25</div>
<div class="t r dots" style="right:1076.00px;top:924.94px;">.....</div>
<div class="t r sx" style="right:888.50px;top:923.94px;">-9,31</div>
<div class="t r sx" style="right:827.50px;top:923.94px;">23,0%</div>
<div class="t r sx" style="right:1135.00px;top:943.70px;">10,65</div>
<div class="t r dots" style="right:1076.00px;top:944.70px;">.....</div>
<div class="t r sx" style="right:888.50px;top:943.70px;">-8,69</div>
<div class="t r sx" style="right:827.50px;top:943.70px;">23,3%</div>
<div class="t r sx" style="right:1135.00px;top:963.46px;">10,00</div>
<div class="t r dots" style="right:1076.00px;top:964.46px;">.....</div>
<div class="t r sx" style="right:888.50px;top:963.46px;">-8,11</div>
<div class="t r sx" style="right:827.50px;top:963.46px;">23,7%</div>
<div class="t r sx" style="right:1135.00px;top:983.22px;">9,50</div>
<div class="t r dots" style="right:1076.00px;top:984.22px;">.....</div>
<div class="t r sx" style="right:888.50px;top:983.22px;">-7,58</div>
<div class="t r sx" style="right:827.50px;top:983.22px;">24,2%</div>
<div class="t r sx" style="right:1135.00px;top:1002.98px;">8,90</div>
<div class="t r dots" style="right:1076.00px;top:1003.98px;">.....</div>
<div class="t r sx" style="right:888.50px;top:1002.98px;">-7,08</div>
<div class="t r sx" style="right:827.50px;top:1002.98px;">24,4%</div>
<div class="t r sx" style="right:1135.00px;top:1022.74px;">8,50</div>
<div class="t r dots" style="right:1076.00px;top:1023.74px;">.....</div>
<div class="t r sx" style="right:888.50px;top:1022.74px;">-6,62</div>
<div class="t r sx" style="right:827.50px;top:1022.74px;">24,9%</div>
<div class="t r sx" style="right:766.00px;top:647.30px;">40,00</div>
<div class="t r dots" style="right:707.00px;top:648.30px;">.....</div>
<div class="t r sx" style="right:519.50px;top:647.30px;">-27,4</div>
<div class="t r sx" style="right:458.50px;top:647.30px;">18,0%</div>
<div class="t r sx" style="right:766.00px;top:667.06px;">38,15</div>
<div class="t r dots" style="right:707.00px;top:668.06px;">.....</div>
<div class="t r sx" style="right:519.50px;top:667.06px;">-25,8</div>
<div class="t r sx" style="right:458.50px;top:667.06px;">18,4%</div>
<div class="t r sx" style="right:766.00px;top:686.82px;">35,80</div>
<div class="t r dots" style="right:707.00px;top:687.82px;">.....</div>
<div class="t r sx" style="right:519.50px;top:686.82px;">-24,4</div>
<div class="t r sx" style="right:458.50px;top:686.82px;">18,7%</div>
<div class="t r sx" style="right:766.00px;top:706.58px;">33,75</div>
<div class="t r dots" style="right:707.00px;top:707.58px;">.....</div>
<div class="t r sx" style="right:519.50px;top:706.58px;">-23,0</div>
<div class="t r sx" style="right:458.50px;top:706.58px;">19,0%</div>
<div class="t r sx" style="right:766.00px;top:726.34px;">32,30</div>
<div class="t r dots" style="right:707.00px;top:727.34px;">.....</div>
<div class="t r sx" style="right:519.50px;top:726.34px;">-21,8</div>
<div class="t r sx" style="right:458.50px;top:726.34px;">19,4%</div>
<div class="t r sx" style="right:766.00px;top:746.10px;">30,45</div>
<div class="t r dots" style="right:707.00px;top:747.10px;">.....</div>
<div class="t r sx" style="right:519.50px;top:746.10px;">-20,6</div>
<div class="t r sx" style="right:458.50px;top:746.10px;">19,7%</div>
<div class="t r sx" style="right:766.00px;top:765.86px;">28,80</div>
<div class="t r dots" style="right:707.00px;top:766.86px;">.....</div>
<div class="t r sx" style="right:519.50px;top:765.86px;">-19,4</div>
<div class="t r sx" style="right:458.50px;top:765.86px;">20,1%</div>
<div class="t r sx" style="right:766.00px;top:785.62px;">27,20</div>
<div class="t r dots" style="right:707.00px;top:786.62px;">.....</div>
<div class="t r sx" style="right:519.50px;top:785.62px;">-18,4</div>
<div class="t r sx" style="right:458.50px;top:785.62px;">20,4%</div>
<div class="t r sx" style="right:766.00px;top:805.38px;">25,90</div>
<div class="t r dots" style="right:707.00px;top:806.38px;">.....</div>
<div class="t r sx" style="right:519.50px;top:805.38px;">-17,4</div>
<div class="t r sx" style="right:458.50px;top:805.38px;">20,7%</div>
<div class="t r sx" style="right:766.00px;top:825.14px;">24,50</div>
<div class="t r dots" style="right:707.00px;top:826.14px;">.....</div>
<div class="t r sx" style="right:519.50px;top:825.14px;">-16,4</div>
<div class="t r sx" style="right:458.50px;top:825.14px;">21,0%</div>
<div class="t r sx" style="right:766.00px;top:844.90px;">23,10</div>
<div class="t r dots" style="right:707.00px;top:845.90px;">.....</div>
<div class="t r sx" style="right:519.50px;top:844.90px;">-15,5</div>
<div class="t r sx" style="right:458.50px;top:844.90px;">21,4%</div>
<div class="t r sx" style="right:766.00px;top:864.66px;">22,05</div>
<div class="t r dots" style="right:707.00px;top:865.66px;">.....</div>
<div class="t r sx" style="right:519.50px;top:864.66px;">-14,7</div>
<div class="t r sx" style="right:458.50px;top:864.66px;">21,7%</div>
<div class="t r sx" style="right:766.00px;top:884.42px;">20,90</div>
<div class="t r dots" style="right:707.00px;top:885.42px;">.....</div>
<div class="t r sx" style="right:519.50px;top:884.42px;">-13,9</div>
<div class="t r sx" style="right:458.50px;top:884.42px;">22,0%</div>
<div class="t r sx" style="right:766.00px;top:904.18px;">19,75</div>
<div class="t r dots" style="right:707.00px;top:905.18px;">.....</div>
<div class="t r sx" style="right:519.50px;top:904.18px;">-13,2</div>
<div class="t r sx" style="right:458.50px;top:904.18px;">22,3%</div>
<div class="t r sx" style="right:766.00px;top:923.94px;">18,90</div>
<div class="t r dots" style="right:707.00px;top:924.94px;">.....</div>
<div class="t r sx" style="right:519.50px;top:923.94px;">-12,5</div>
<div class="t r sx" style="right:458.50px;top:923.94px;">22,8%</div>
<div class="t r sx" style="right:766.00px;top:943.70px;">17,80</div>
<div class="t r dots" style="right:707.00px;top:944.70px;">.....</div>
<div class="t r sx" style="right:519.50px;top:943.70px;">-11,8</div>
<div class="t r sx" style="right:458.50px;top:943.70px;">23,0%</div>
<div class="t r sx" style="right:766.00px;top:963.46px;">16,95</div>
<div class="t r dots" style="right:707.00px;top:964.46px;">.....</div>
<div class="t r sx" style="right:519.50px;top:963.46px;">-11,2</div>
<div class="t r sx" style="right:458.50px;top:963.46px;">23,4%</div>
<div class="t r sx" style="right:766.00px;top:983.22px;">16,20</div>
<div class="t r dots" style="right:707.00px;top:984.22px;">.....</div>
<div class="t r sx" style="right:519.50px;top:983.22px;">-10,6</div>
<div class="t r sx" style="right:458.50px;top:983.22px;">23,7%</div>
<div class="t r sx" style="right:766.00px;top:1002.98px;">15,30</div>
<div class="t r dots" style="right:707.00px;top:1003.98px;">.....</div>
<div class="t r sx" style="right:519.50px;top:1002.98px;">-10,0</div>
<div class="t r sx" style="right:458.50px;top:1002.98px;">24,1%</div>
<div class="t r sx" style="right:766.00px;top:1022.74px;">14,50</div>
<div class="t r dots" style="right:707.00px;top:1023.74px;">.....</div>
<div class="t r sx" style="right:519.50px;top:1022.74px;">-9,47</div>
<div class="t r sx" style="right:458.50px;top:1022.74px;">24,3%</div>
<div class="t r sx" style="right:397.00px;top:647.30px;">51,75</div>
<div class="t r dots" style="right:338.00px;top:648.30px;">.....</div>
<div class="t r sx" style="right:150.50px;top:647.30px;">-30,7</div>
<div class="t r sx" style="right:89.50px;top:647.30px;">17,8%</div>
<div class="t r sx" style="right:397.00px;top:667.06px;">49,15</div>
<div class="t r dots" style="right:338.00px;top:668.06px;">.....</div>
<div class="t r sx" style="right:150.50px;top:667.06px;">-29,3</div>
<div class="t r sx" style="right:89.50px;top:667.06px;">18,1%</div>
<div class="t r sx" style="right:397.00px;top:686.82px;">46,75</div>
<div class="t r dots" style="right:338.00px;top:687.82px;">.....</div>
<div class="t r sx" style="right:150.50px;top:686.82px;">-27,8</div>
<div class="t r sx" style="right:89.50px;top:686.82px;">18,4%</div>
<div class="t r sx" style="right:397.00px;top:706.58px;">44,50</div>
<div class="t r dots" style="right:338.00px;top:707.58px;">.....</div>
<div class="t r sx" style="right:150.50px;top:706.58px;">-26,5</div>
<div class="t r sx" style="right:89.50px;top:706.58px;">18,7%</div>
<div class="t r sx" style="right:397.00px;top:726.34px;">42,50</div>
<div class="t r dots" style="right:338.00px;top:727.34px;">.....</div>
<div class="t r sx" style="right:150.50px;top:726.34px;">-25,2</div>
<div class="t r sx" style="right:89.50px;top:726.34px;">19,0%</div>
<div class="t r sx" style="right:397.00px;top:746.10px;">40,40</div>
<div class="t r dots" style="right:338.00px;top:747.10px;">.....</div>
<div class="t r sx" style="right:150.50px;top:746.10px;">-24,0</div>
<div class="t r sx" style="right:89.50px;top:746.10px;">19,3%</div>
<div class="t r sx" style="right:397.00px;top:765.86px;">38,65</div>
<div class="t r dots" style="right:338.00px;top:766.86px;">.....</div>
<div class="t r sx" style="right:150.50px;top:765.86px;">-22,9</div>
<div class="t r sx" style="right:89.50px;top:765.86px;">19,7%</div>
<div class="t r sx" style="right:397.00px;top:785.62px;">36,65</div>
<div class="t r dots" style="right:338.00px;top:786.62px;">.....</div>
<div class="t r sx" style="right:150.50px;top:785.62px;">-21,8</div>
<div class="t r sx" style="right:89.50px;top:785.62px;">19,9%</div>
<div class="t r sx" style="right:397.00px;top:805.38px;">34,90</div>
<div class="t r dots" style="right:338.00px;top:806.38px;">.....</div>
<div class="t r sx" style="right:150.50px;top:805.38px;">-20,7</div>
<div class="t r sx" style="right:89.50px;top:805.38px;">20,1%</div>
<div class="t r sx" style="right:397.00px;top:825.14px;">33,25</div>
<div class="t r dots" style="right:338.00px;top:826.14px;">.....</div>
<div class="t r sx" style="right:150.50px;top:825.14px;">-19,7</div>
<div class="t r sx" style="right:89.50px;top:825.14px;">20,4%</div>
<div class="t r sx" style="right:397.00px;top:844.90px;">31,65</div>
<div class="t r dots" style="right:338.00px;top:845.90px;">.....</div>
<div class="t r sx" style="right:150.50px;top:844.90px;">-18,8</div>
<div class="t r sx" style="right:89.50px;top:844.90px;">20,7%</div>
<div class="t r sx" style="right:397.00px;top:864.66px;">30,15</div>
<div class="t r dots" style="right:338.00px;top:865.66px;">.....</div>
<div class="t r sx" style="right:150.50px;top:864.66px;">-17,9</div>
<div class="t r sx" style="right:89.50px;top:864.66px;">21,0%</div>
<div class="t r sx" style="right:397.00px;top:884.42px;">28,65</div>
<div class="t r dots" style="right:338.00px;top:885.42px;">.....</div>
<div class="t r sx" style="right:150.50px;top:884.42px;">-17,1</div>
<div class="t r sx" style="right:89.50px;top:884.42px;">21,3%</div>
<div class="t r sx" style="right:397.00px;top:904.18px;">27,50</div>
<div class="t r dots" style="right:338.00px;top:905.18px;">.....</div>
<div class="t r sx" style="right:150.50px;top:904.18px;">-16,3</div>
<div class="t r sx" style="right:89.50px;top:904.18px;">21,6%</div>
<div class="t r sx" style="right:397.00px;top:923.94px;">26,25</div>
<div class="t r dots" style="right:338.00px;top:924.94px;">.....</div>
<div class="t r sx" style="right:150.50px;top:923.94px;">-15,5</div>
<div class="t r sx" style="right:89.50px;top:923.94px;">22,0%</div>
<div class="t r sx" style="right:397.00px;top:943.70px;">25,15</div>
<div class="t r dots" style="right:338.00px;top:944.70px;">.....</div>
<div class="t r sx" style="right:150.50px;top:943.70px;">-14,8</div>
<div class="t r sx" style="right:89.50px;top:943.70px;">22,3%</div>
<div class="t r sx" style="right:397.00px;top:963.46px;">23,90</div>
<div class="t r dots" style="right:338.00px;top:964.46px;">.....</div>
<div class="t r sx" style="right:150.50px;top:963.46px;">-14,1</div>
<div class="t r sx" style="right:89.50px;top:963.46px;">22,5%</div>
<div class="t r sx" style="right:397.00px;top:983.22px;">22,65</div>
<div class="t r dots" style="right:338.00px;top:984.22px;">.....</div>
<div class="t r sx" style="right:150.50px;top:983.22px;">-13,4</div>
<div class="t r sx" style="right:89.50px;top:983.22px;">22,7%</div>
<div class="t r sx" style="right:397.00px;top:1002.98px;">21,75</div>
<div class="t r dots" style="right:338.00px;top:1003.98px;">.....</div>
<div class="t r sx" style="right:150.50px;top:1002.98px;">-12,8</div>
<div class="t r sx" style="right:89.50px;top:1002.98px;">23,1%</div>
<div class="t r sx" style="right:397.00px;top:1022.74px;">20,75</div>
<div class="t r dots" style="right:338.00px;top:1023.74px;">.....</div>
<div class="t r sx" style="right:150.50px;top:1022.74px;">-12,2</div>
<div class="t r sx" style="right:89.50px;top:1022.74px;">23,4%</div>
<div class="a " style="left:2.00px;top:223.00px;width:73.50px;height:420.00px;background:#d6ecf2"></div>
<div class="a " style="left:2.00px;top:643.00px;width:73.50px;height:401.00px;background:#d6ecf2"></div>
<div class="a " style="left:76.50px;top:222.00px;width:1.50px;height:822.00px;background:#fafafa"></div>
<div class="a " style="left:2.00px;top:223.30px;width:73.50px;height:19.50px;background:linear-gradient(#0f8886 0%,#0b6e88 25%,#06428e 52%,#021a90 78%,#000a80 100%)"><div class="t b lab" style="left:7.4px;top:2.0px;color:#fff">2210 C</div></div>
<div class="a " style="left:2.00px;top:243.50px;width:73.50px;height:18.36px;background:linear-gradient(#0f8886 0%,#0b6e88 25%,#06428e 52%,#021a90 78%,#000a80 100%)"><div class="t b lab" style="left:7.4px;top:2.2px;color:#fff">2200 C</div></div>
<div class="a " style="left:2.00px;top:263.26px;width:73.50px;height:18.36px;background:linear-gradient(#0f8886 0%,#0b6e88 25%,#06428e 52%,#021a90 78%,#000a80 100%)"><div class="t b lab" style="left:7.4px;top:2.2px;color:#fff">2190 C</div></div>
<div class="a " style="left:2.00px;top:283.02px;width:73.50px;height:18.36px;background:linear-gradient(#0f8886 0%,#0b6e88 25%,#06428e 52%,#021a90 78%,#000a80 100%)"><div class="t b lab" style="left:7.4px;top:2.2px;color:#fff">2180 C</div></div>
<div class="a " style="left:2.00px;top:302.78px;width:73.50px;height:18.36px;background:linear-gradient(#0f8886 0%,#0b6e88 25%,#06428e 52%,#021a90 78%,#000a80 100%)"><div class="t b lab" style="left:7.4px;top:2.2px;color:#fff">2170 C</div></div>
<div class="a " style="left:2.00px;top:322.54px;width:73.50px;height:18.36px;background:linear-gradient(#0f8886 0%,#0b6e88 25%,#06428e 52%,#021a90 78%,#000a80 100%)"><div class="t b lab" style="left:7.4px;top:2.2px;color:#fff">2160 C</div></div>
<div class="a " style="left:2.00px;top:342.30px;width:73.50px;height:18.36px;background:linear-gradient(#0f8886 0%,#0b6e88 25%,#06428e 52%,#021a90 78%,#000a80 100%)"><div class="t b lab" style="left:7.4px;top:2.2px;color:#fff">2150 C</div></div>
<div class="a " style="left:2.00px;top:362.06px;width:73.50px;height:18.36px;background:linear-gradient(#0f8886 0%,#0b6e88 25%,#06428e 52%,#021a90 78%,#000a80 100%)"><div class="t b lab" style="left:7.4px;top:2.2px;color:#fff">2140 C</div></div>
<div class="a " style="left:2.00px;top:381.82px;width:73.50px;height:18.36px;background:linear-gradient(#0f8886 0%,#0b6e88 25%,#06428e 52%,#021a90 78%,#000a80 100%)"><div class="t b lab" style="left:7.4px;top:2.2px;color:#fff">2130 C</div></div>
<div class="a " style="left:2.00px;top:401.58px;width:73.50px;height:18.36px;background:linear-gradient(#0f8886 0%,#0b6e88 25%,#06428e 52%,#021a90 78%,#000a80 100%)"><div class="t b lab" style="left:7.4px;top:2.2px;color:#fff">2120 C</div></div>
<div class="a " style="left:2.00px;top:421.34px;width:73.50px;height:18.36px;background:linear-gradient(#0f8886 0%,#0b6e88 25%,#06428e 52%,#021a90 78%,#000a80 100%)"><div class="t b lab" style="left:7.4px;top:2.2px;color:#fff">2110 C</div></div>
<div class="a " style="left:2.00px;top:441.10px;width:73.50px;height:18.36px;background:linear-gradient(#0f8886 0%,#0b6e88 25%,#06428e 52%,#021a90 78%,#000a80 100%)"><div class="t b lab" style="left:7.4px;top:2.2px;color:#fff">2100 C</div></div>
<div class="a " style="left:2.00px;top:460.86px;width:73.50px;height:18.36px;background:linear-gradient(#0f8886 0%,#0b6e88 25%,#06428e 52%,#021a90 78%,#000a80 100%)"><div class="t b lab" style="left:7.4px;top:2.2px;color:#fff">2090 C</div></div>
<div class="a " style="left:2.00px;top:480.62px;width:73.50px;height:18.36px;background:linear-gradient(#0f8886 0%,#0b6e88 25%,#06428e 52%,#021a90 78%,#000a80 100%)"><div class="t b lab" style="left:7.4px;top:2.2px;color:#fff">2080 C</div></div>
<div class="a " style="left:2.00px;top:500.38px;width:73.50px;height:18.36px;background:linear-gradient(#0f8886 0%,#0b6e88 25%,#06428e 52%,#021a90 78%,#000a80 100%)"><div class="t b lab" style="left:7.4px;top:2.2px;color:#fff">2070 C</div></div>
<div class="a " style="left:2.00px;top:520.14px;width:73.50px;height:18.36px;background:linear-gradient(#0f8886 0%,#0b6e88 25%,#06428e 52%,#021a90 78%,#000a80 100%)"><div class="t b lab" style="left:7.4px;top:2.2px;color:#fff">2060 C</div></div>
<div class="a " style="left:2.00px;top:539.90px;width:73.50px;height:18.36px;background:linear-gradient(#0f8886 0%,#0b6e88 25%,#06428e 52%,#021a90 78%,#000a80 100%)"><div class="t b lab" style="left:7.4px;top:2.2px;color:#fff">2050 C &gt;</div></div>
<div class="a " style="left:2.00px;top:559.66px;width:73.50px;height:18.36px;background:linear-gradient(#0f8886 0%,#0b6e88 25%,#06428e 52%,#021a90 78%,#000a80 100%)"><div class="t b lab" style="left:7.4px;top:2.2px;color:#fff">2040 C</div></div>
<div class="a " style="left:2.00px;top:579.42px;width:73.50px;height:18.36px;background:linear-gradient(#0f8886 0%,#0b6e88 25%,#06428e 52%,#021a90 78%,#000a80 100%)"><div class="t b lab" style="left:7.4px;top:2.2px;color:#fff">2030 C</div></div>
<div class="a " style="left:2.00px;top:599.18px;width:73.50px;height:18.36px;background:linear-gradient(#0f8886 0%,#0b6e88 25%,#06428e 52%,#021a90 78%,#000a80 100%)"><div class="t b lab" style="left:7.4px;top:2.2px;color:#fff">2020 C</div></div>
<div class="a " style="left:2.00px;top:618.94px;width:73.50px;height:18.36px;background:linear-gradient(#0f8886 0%,#0b6e88 25%,#06428e 52%,#021a90 78%,#000a80 100%)"><div class="t b lab" style="left:7.4px;top:2.2px;color:#fff">2010 C</div></div>
<div class="a " style="left:2.00px;top:638.70px;width:73.50px;height:3.20px;background:#137376"></div>
<div class="a " style="left:2.00px;top:643.80px;width:73.50px;height:18.36px;background:linear-gradient(#0f8886 0%,#0b6e88 25%,#06428e 52%,#021a90 78%,#000a80 100%)"><div class="t b lab" style="left:7.4px;top:2.2px;color:#fff">1970 P</div></div>
<div class="a " style="left:2.00px;top:663.56px;width:73.50px;height:18.36px;background:linear-gradient(#0f8886 0%,#0b6e88 25%,#06428e 52%,#021a90 78%,#000a80 100%)"><div class="t b lab" style="left:7.4px;top:2.2px;color:#fff">1960 P</div></div>
<div class="a " style="left:2.00px;top:683.32px;width:73.50px;height:18.36px;background:linear-gradient(#0f8886 0%,#0b6e88 25%,#06428e 52%,#021a90 78%,#000a80 100%)"><div class="t b lab" style="left:7.4px;top:2.2px;color:#fff">1950 P</div></div>
<div class="a " style="left:2.00px;top:703.08px;width:73.50px;height:18.36px;background:linear-gradient(#0f8886 0%,#0b6e88 25%,#06428e 52%,#021a90 78%,#000a80 100%)"><div class="t b lab" style="left:7.4px;top:2.2px;color:#fff">1940 P</div></div>
<div class="a " style="left:2.00px;top:722.84px;width:73.50px;height:18.36px;background:linear-gradient(#0f8886 0%,#0b6e88 25%,#06428e 52%,#021a90 78%,#000a80 100%)"><div class="t b lab" style="left:7.4px;top:2.2px;color:#fff">1930 P</div></div>
<div class="a " style="left:2.00px;top:742.60px;width:73.50px;height:18.36px;background:linear-gradient(#0f8886 0%,#0b6e88 25%,#06428e 52%,#021a90 78%,#000a80 100%)"><div class="t b lab" style="left:7.4px;top:2.2px;color:#fff">1920 P</div></div>
<div class="a " style="left:2.00px;top:762.36px;width:73.50px;height:18.36px;background:linear-gradient(#0f8886 0%,#0b6e88 25%,#06428e 52%,#021a90 78%,#000a80 100%)"><div class="t b lab" style="left:7.4px;top:2.2px;color:#fff">1910 P</div></div>
<div class="a " style="left:2.00px;top:782.12px;width:73.50px;height:18.36px;background:linear-gradient(#0f8886 0%,#0b6e88 25%,#06428e 52%,#021a90 78%,#000a80 100%)"><div class="t b lab" style="left:7.4px;top:2.2px;color:#fff">1900 P</div></div>
<div class="a " style="left:2.00px;top:801.88px;width:73.50px;height:18.36px;background:linear-gradient(#0f8886 0%,#0b6e88 25%,#06428e 52%,#021a90 78%,#000a80 100%)"><div class="t b lab" style="left:7.4px;top:2.2px;color:#fff">1890 P</div></div>
<div class="a " style="left:2.00px;top:821.64px;width:73.50px;height:18.36px;background:linear-gradient(#0f8886 0%,#0b6e88 25%,#06428e 52%,#021a90 78%,#000a80 100%)"><div class="t b lab" style="left:7.4px;top:2.2px;color:#fff">1880 P</div></div>
<div class="a " style="left:2.00px;top:841.40px;width:73.50px;height:18.36px;background:linear-gradient(#0f8886 0%,#0b6e88 25%,#06428e 52%,#021a90 78%,#000a80 100%)"><div class="t b lab" style="left:7.4px;top:2.2px;color:#fff">1870 P</div></div>
<div class="a " style="left:2.00px;top:861.16px;width:73.50px;height:18.36px;background:linear-gradient(#0f8886 0%,#0b6e88 25%,#06428e 52%,#021a90 78%,#000a80 100%)"><div class="t b lab" style="left:7.4px;top:2.2px;color:#fff">1860 P</div></div>
<div class="a " style="left:2.00px;top:880.92px;width:73.50px;height:18.36px;background:linear-gradient(#0f8886 0%,#0b6e88 25%,#06428e 52%,#021a90 78%,#000a80 100%)"><div class="t b lab" style="left:7.4px;top:2.2px;color:#fff">1850 P</div></div>
<div class="a " style="left:2.00px;top:900.68px;width:73.50px;height:18.36px;background:linear-gradient(#0f8886 0%,#0b6e88 25%,#06428e 52%,#021a90 78%,#000a80 100%)"><div class="t b lab" style="left:7.4px;top:2.2px;color:#fff">1840 P</div></div>
<div class="a " style="left:2.00px;top:920.44px;width:73.50px;height:18.36px;background:linear-gradient(#0f8886 0%,#0b6e88 25%,#06428e 52%,#021a90 78%,#000a80 100%)"><div class="t b lab" style="left:7.4px;top:2.2px;color:#fff">1830 P</div></div>
<div class="a " style="left:2.00px;top:940.20px;width:73.50px;height:18.36px;background:linear-gradient(#0f8886 0%,#0b6e88 25%,#06428e 52%,#021a90 78%,#000a80 100%)"><div class="t b lab" style="left:7.4px;top:2.2px;color:#fff">1820 P</div></div>
<div class="a " style="left:2.00px;top:959.96px;width:73.50px;height:18.36px;background:linear-gradient(#0f8886 0%,#0b6e88 25%,#06428e 52%,#021a90 78%,#000a80 100%)"><div class="t b lab" style="left:7.4px;top:2.2px;color:#fff">1810 P</div></div>
<div class="a " style="left:2.00px;top:979.72px;width:73.50px;height:18.36px;background:linear-gradient(#0f8886 0%,#0b6e88 25%,#06428e 52%,#021a90 78%,#000a80 100%)"><div class="t b lab" style="left:7.4px;top:2.2px;color:#fff">1800 P</div></div>
<div class="a " style="left:2.00px;top:999.48px;width:73.50px;height:18.36px;background:linear-gradient(#0f8886 0%,#0b6e88 25%,#06428e 52%,#021a90 78%,#000a80 100%)"><div class="t b lab" style="left:7.4px;top:2.2px;color:#fff">1790 P</div></div>
<div class="a " style="left:2.00px;top:1019.24px;width:73.50px;height:18.36px;background:linear-gradient(#0f8886 0%,#0b6e88 25%,#06428e 52%,#021a90 78%,#000a80 100%)"><div class="t b lab" style="left:7.4px;top:2.2px;color:#fff">1780 P</div></div>
<div class="a " style="left:2.00px;top:1039.00px;width:73.50px;height:3.20px;background:#137376"></div>
<div class="a " style="left:0.00px;top:0.00px;width:2002.00px;height:23.00px;background:linear-gradient(#f4f7fb 0%,#e6ecf5 40%,#dce4f0 100%);border-bottom:1px solid #b9c4d4"></div>
<div class="a " style="left:0.00px;top:23.00px;width:2002.00px;height:2.00px;background:#fbfbfb"></div>
<svg class="a" style="left:9px;top:1px;" width="20" height="18" viewBox="0 0 20 18"><rect x="0" y="0" width="20" height="18" fill="#1a2fb0"/><rect x="2" y="0" width="16" height="10" fill="#1fc21f"/><circle cx="10" cy="9" r="6.5" fill="#22d522" stroke="#fff" stroke-width="1.5"/><circle cx="10" cy="9" r="2" fill="#fff"/></svg>
<div class="t " style="left:37.00px;top:3.00px;font-size:15.5px;line-height:18px;height:18px;color:#1b2434">File</div>
<div class="t " style="left:75.00px;top:3.00px;font-size:15.5px;line-height:18px;height:18px;color:#1b2434">Edit</div>
<div class="t " style="left:117.00px;top:3.00px;font-size:15.5px;line-height:18px;height:18px;color:#1b2434">View</div>
<div class="t " style="left:165.00px;top:3.00px;font-size:15.5px;line-height:18px;height:18px;color:#1b2434">Window</div>
<div class="t " style="left:237.00px;top:3.00px;font-size:15.5px;line-height:18px;height:18px;color:#1b2434">NetVue</div>
<div class="t " style="left:302.00px;top:3.00px;font-size:15.5px;line-height:18px;height:18px;color:#1b2434">Help</div>
<div class="a " style="left:343.30px;top:1.00px;width:22.50px;height:21.50px;background:linear-gradient(#e6edf7,#dbe4f1);border:1px solid #98a2ae;border-top:none"></div>
<div class="a " style="left:368.50px;top:1.00px;width:22.30px;height:21.50px;background:linear-gradient(#e6edf7,#dbe4f1);border:1px solid #98a2ae;border-top:none"></div>
<div class="a " style="left:393.50px;top:1.00px;width:22.80px;height:21.50px;background:linear-gradient(#e6edf7,#dbe4f1);border:1px solid #98a2ae;border-top:none"></div>
<svg class="a" style="left:350px;top:10px;" width="12" height="8" viewBox="0 0 12 8"><rect x="1" y="4" width="6" height="1.8" fill="#5b6470"/></svg>
<svg class="a" style="left:375px;top:7px;" width="10" height="9" viewBox="0 0 10 9"><rect x="0.7" y="3.2" width="5.5" height="5" fill="none" stroke="#5b6470" stroke-width="1.3"/><path d="M3 3 V1 H9 V6 H6.5" fill="none" stroke="#5b6470" stroke-width="1.3"/></svg>
<svg class="a" style="left:400px;top:8px;" width="9" height="8" viewBox="0 0 9 8"><path d="M1 1 L8 7 M8 1 L1 7" stroke="#5b6470" stroke-width="1.8"/></svg>
<div class="a " style="left:0.00px;top:25.00px;width:2002.00px;height:64.00px;background:#f0f0f0"></div>
<div class="a " style="left:10.00px;top:26.00px;width:175.00px;height:14.00px;background:#f5f5f5"></div>
<div class="a " style="left:190.00px;top:26.00px;width:201.00px;height:14.00px;background:#f5f5f5"></div>
<div class="a " style="left:397.00px;top:26.00px;width:169.00px;height:14.00px;background:#f5f5f5"></div>
<div class="a " style="left:188.00px;top:28.00px;width:1.20px;height:58.00px;background:#c9c9c9"></div>
<div class="a " style="left:189.20px;top:28.00px;width:1.00px;height:58.00px;background:#fff"></div>
<div class="a " style="left:394.00px;top:28.00px;width:1.20px;height:58.00px;background:#c9c9c9"></div>
<div class="a " style="left:395.20px;top:28.00px;width:1.00px;height:58.00px;background:#fff"></div>
<div class="a " style="left:570.00px;top:28.00px;width:1.20px;height:58.00px;background:#c9c9c9"></div>
<div class="a " style="left:571.20px;top:28.00px;width:1.00px;height:58.00px;background:#fff"></div>
<div class="t " style="left:52.00px;top:26.00px;font-size:14px;line-height:16px">Asset Specific</div>
<div class="t " style="left:228.00px;top:26.00px;font-size:14px;line-height:16px">Account Test Account</div>
<svg class="a" style="left:364px;top:32px;" width="11" height="6" viewBox="0 0 11 6"><path d="M0 0 H10 L5 6 Z" fill="#111"/></svg>
<div class="t " style="left:427.00px;top:26.00px;font-size:13.8px;line-height:16px">Auto-Scan Tools</div>
<div class="t " style="left:670.00px;top:28.00px;font-size:13.5px;line-height:16px">Browse</div>
<div class="a " style="left:9.00px;top:41.00px;width:53.00px;height:40.00px;border:1px solid #8f8f8f;border-radius:3px;background:linear-gradient(#f3f3f3 0%,#ececec 50%,#dedede 51%,#d4d4d4 100%);box-shadow:inset 0 0 0 1px #fafafa"></div>
<div class="t c" style="left:-11px;width:93px;top:62px;font-size:13px;color:#1a1a1a;transform:scaleX(1.0);transform-origin:50% 50%;">Matrix</div>
<div class="a " style="left:64.00px;top:41.00px;width:59.00px;height:40.00px;border:1px solid #3c9ad0;border-radius:3px;background:linear-gradient(#f2f9fd 0%,#e6f3fb 50%,#d6ecf8 51%,#cfe6f4 100%);box-shadow:inset 0 0 0 1px #a8daf2"></div>
<div class="t c" style="left:44px;width:99px;top:63px;font-size:11px;color:#1a1a1a;transform:scaleX(0.88);transform-origin:50% 50%;">Price Chart</div>
<div class="a " style="left:126.00px;top:41.00px;width:58.00px;height:40.00px;border:1px solid #8f8f8f;border-radius:3px;background:linear-gradient(#f3f3f3 0%,#ececec 50%,#dedede 51%,#d4d4d4 100%);box-shadow:inset 0 0 0 1px #fafafa"></div>
<div class="t c" style="left:106px;width:98px;top:63px;font-size:11px;color:#1a1a1a;transform:scaleX(0.86);transform-origin:50% 50%;">Volty Chart</div>
<div class="a " style="left:192.00px;top:41.00px;width:48.00px;height:40.00px;border:1px solid #8f8f8f;border-radius:3px;background:linear-gradient(#f3f3f3 0%,#ececec 50%,#dedede 51%,#d4d4d4 100%);box-shadow:inset 0 0 0 1px #fafafa"></div>
<div class="t c" style="left:172px;width:88px;top:62px;font-size:13.5px;color:#1a1a1a;transform:scaleX(1.0);transform-origin:50% 50%;">Info</div>
<div class="a " style="left:243.00px;top:41.00px;width:48.50px;height:40.00px;border:1px solid #8f8f8f;border-radius:3px;background:linear-gradient(#f3f3f3 0%,#ececec 50%,#dedede 51%,#d4d4d4 100%);box-shadow:inset 0 0 0 1px #fafafa"></div>
<div class="t c" style="left:223px;width:88.5px;top:62px;font-size:13.5px;color:#1a1a1a;transform:scaleX(1.0);transform-origin:50% 50%;">T.Log</div>
<div class="a " style="left:294.50px;top:41.00px;width:48.00px;height:40.00px;border:1px solid #8f8f8f;border-radius:3px;background:linear-gradient(#f3f3f3 0%,#ececec 50%,#dedede 51%,#d4d4d4 100%);box-shadow:inset 0 0 0 1px #fafafa"></div>
<div class="t c" style="left:274.5px;width:88.0px;top:62px;font-size:13.5px;color:#1a1a1a;transform:scaleX(1.0);transform-origin:50% 50%;">Status</div>
<div class="a " style="left:345.50px;top:41.00px;width:44.90px;height:40.00px;border:1px solid #8f8f8f;border-radius:3px;background:linear-gradient(#f3f3f3 0%,#ececec 50%,#dedede 51%,#d4d4d4 100%);box-shadow:inset 0 0 0 1px #fafafa"></div>
<div class="t c" style="left:325.5px;width:84.89999999999998px;top:63px;font-size:11px;color:#1a1a1a;transform:scaleX(0.9);transform-origin:50% 50%;">Reports</div>
<div class="a " style="left:398.00px;top:41.00px;width:65.70px;height:40.00px;border:1px solid #8f8f8f;border-radius:3px;background:linear-gradient(#f3f3f3 0%,#ececec 50%,#dedede 51%,#d4d4d4 100%);box-shadow:inset 0 0 0 1px #fafafa"></div>
<div class="t c" style="left:378px;width:105.69999999999999px;top:63px;font-size:11px;color:#1a1a1a;transform:scaleX(0.86);transform-origin:50% 50%;">Trade Finder</div>
<div class="a " style="left:467.00px;top:41.00px;width:47.00px;height:40.00px;border:1px solid #8f8f8f;border-radius:3px;background:linear-gradient(#f3f3f3 0%,#ececec 50%,#dedede 51%,#d4d4d4 100%);box-shadow:inset 0 0 0 1px #fafafa"></div>
<div class="t c" style="left:447px;width:87px;top:63px;font-size:11px;color:#1a1a1a;transform:scaleX(0.9);transform-origin:50% 50%;">Survey</div>
<div class="a " style="left:517.00px;top:41.00px;width:48.50px;height:40.00px;border:1px solid #8f8f8f;border-radius:3px;background:linear-gradient(#f3f3f3 0%,#ececec 50%,#dedede 51%,#d4d4d4 100%);box-shadow:inset 0 0 0 1px #fafafa"></div>
<div class="t c" style="left:497px;width:88.5px;top:63px;font-size:11px;color:#1a1a1a;transform:scaleX(0.9);transform-origin:50% 50%;">OpScan</div>
<div class="a " style="left:573.70px;top:41.00px;width:44.30px;height:40.00px;border:1px solid #8f8f8f;border-radius:3px;background:linear-gradient(#f3f3f3 0%,#ececec 50%,#dedede 51%,#d4d4d4 100%);box-shadow:inset 0 0 0 1px #fafafa"></div>
<div class="t c" style="left:553.7px;width:84.29999999999995px;top:63px;font-size:11px;color:#1a1a1a;transform:scaleX(0.9);transform-origin:50% 50%;">Prob.</div>
<div class="a " style="left:621.70px;top:41.00px;width:45.80px;height:40.00px;border:1px solid #c5c5c5;border-radius:3px;background:linear-gradient(#f6f6f6 0%,#f2f2f2 50%,#ececec 51%,#e8e8e8 100%)"></div>
<div class="t c" style="left:601.7px;width:85.79999999999995px;top:62px;font-size:13px;color:#a8a8a8;transform:scaleX(1.0);transform-origin:50% 50%;">Trade</div>
<div class="a " style="left:672.50px;top:44.50px;width:40.50px;height:18.00px;border:1px solid #8f8f8f;border-radius:3px;background:linear-gradient(#f3f3f3 0%,#ececec 50%,#dedede 51%,#d4d4d4 100%);box-shadow:inset 0 0 0 1px #fafafa"></div>
<div class="t c" style="left:652.5px;width:80.5px;top:46px;font-size:13px;color:#1a1a1a;transform:scaleX(1.0);transform-origin:50% 50%;">Prev</div>
<div class="a " style="left:672.50px;top:65.50px;width:40.50px;height:17.50px;border:1px solid #8f8f8f;border-radius:3px;background:linear-gradient(#f3f3f3 0%,#ececec 50%,#dedede 51%,#d4d4d4 100%);box-shadow:inset 0 0 0 1px #fafafa"></div>
<div class="t c" style="left:652.5px;width:80.5px;top:67px;font-size:13px;color:#1a1a1a;transform:scaleX(1.0);transform-origin:50% 50%;">Next</div>
<svg class="a" style="left:27px;top:46px;" width="18" height="16" viewBox="0 0 18 16"><rect x="0" y="0" width="18" height="16" rx="1" fill="#1f8a7a"/><rect x="1.5" y="1.8" width="2.6" height="2" fill="#bff0e8"/><rect x="5.7" y="1.8" width="2.6" height="2" fill="#bff0e8"/><rect x="9.9" y="1.8" width="2.6" height="2" fill="#bff0e8"/><rect x="14.100000000000001" y="1.8" width="2.6" height="2" fill="#bff0e8"/><rect x="1.5" y="5.3" width="2.6" height="2" fill="#bff0e8"/><rect x="5.7" y="5.3" width="2.6" height="2" fill="#bff0e8"/><rect x="9.9" y="5.3" width="2.6" height="2" fill="#bff0e8"/><rect x="14.100000000000001" y="5.3" width="2.6" height="2" fill="#bff0e8"/><rect x="1.5" y="8.8" width="2.6" height="2" fill="#bff0e8"/><rect x="5.7" y="8.8" width="2.6" height="2" fill="#bff0e8"/><rect x="9.9" y="8.8" width="2.6" height="2" fill="#bff0e8"/><rect x="14.100000000000001" y="8.8" width="2.6" height="2" fill="#bff0e8"/><rect x="1.5" y="12.3" width="2.6" height="2" fill="#bff0e8"/><rect x="5.7" y="12.3" width="2.6" height="2" fill="#bff0e8"/><rect x="9.9" y="12.3" width="2.6" height="2" fill="#bff0e8"/><rect x="14.100000000000001" y="12.3" width="2.6" height="2" fill="#bff0e8"/><rect x="10" y="9" width="5" height="1.6" fill="#0a2a5a"/></svg>
<svg class="a" style="left:85px;top:47px;" width="18" height="17" viewBox="0 0 18 17"><rect x="2" y="1" width="15" height="13" fill="#fff" opacity=".6"/><path d="M2.5 0.5 V14.5 H17" stroke="#111" stroke-width="2" fill="none"/><path d="M4 12 L7 4 L10 11 L13 3 L16 7" stroke="#d02060" stroke-width="1.4" fill="none"/><path d="M4 9 L8 7 L11 10 L16 4" stroke="#3040d0" stroke-width="1.2" fill="none"/><path d="M4 13 L9 10 L16 12" stroke="#e0a020" stroke-width="1" fill="none"/><path d="M4 16.5 H16" stroke="#666" stroke-width=".8" stroke-dasharray="1 2"/></svg>
<svg class="a" style="left:146px;top:47px;" width="18" height="17" viewBox="0 0 18 17"><path d="M2.5 0.5 V14.5 H17" stroke="#111" stroke-width="2" fill="none"/><path d="M2 2 H16" stroke="#a090b0" stroke-width="1"/><path d="M4 11 L8 6 L11 9 L13 4 L16 8" stroke="#7040a0" stroke-width="1.3" fill="none"/><path d="M4 8 H16" stroke="#c0a0c0" stroke-width=".8"/><path d="M4 16.5 H16" stroke="#666" stroke-width=".8" stroke-dasharray="1 2"/></svg>
<svg class="a" style="left:207px;top:45px;" width="18" height="18" viewBox="0 0 18 18"><rect x="7" y="2" width="9" height="13" fill="#fff" stroke="#222"/><circle cx="7" cy="10" r="5" fill="#e8e070" stroke="#333"/><path d="M3 9 H11" stroke="#1aa0a0" stroke-width="2"/></svg>
<svg class="a" style="left:258px;top:46px;" width="18" height="14" viewBox="0 0 18 14"><path d="M1 7 L8 1 L17 6 L10 13 Z" fill="#fff" stroke="#5050a0" stroke-width="1.4"/><path d="M2 9 L10 14 L17 8" stroke="#5050a0" stroke-width="1.4" fill="none"/></svg>
<svg class="a" style="left:309px;top:48px;" width="17" height="9" viewBox="0 0 17 9"><rect x="0" y="0" width="17" height="9" fill="#0a9a0a"/><rect x="2" y="3" width="3" height="3" fill="#4f4"/><rect x="7" y="3" width="3" height="3" fill="#4f4"/><rect x="12" y="3" width="3" height="3" fill="#4f4"/></svg>
<svg class="a" style="left:359px;top:46px;" width="18" height="18" viewBox="0 0 18 18"><rect x="6" y="1" width="10" height="15" fill="#fff" stroke="#222"/><rect x="8" y="1" width="7" height="4" fill="#7070d0"/><circle cx="6" cy="11" r="5" fill="#e0d060" stroke="#333"/></svg>
<svg class="a" style="left:420px;top:45px;" width="20" height="18" viewBox="0 0 20 18"><text x="0" y="15" font-family="Liberation Sans" font-weight="bold" font-size="15" fill="#d01030">?</text><text x="8" y="15" font-family="Liberation Sans" font-size="16" fill="#2030a0">{</text><path d="M16 2 V16" stroke="#222" stroke-width="1.5" stroke-dasharray="2 1"/></svg>
<svg class="a" style="left:480px;top:45px;" width="20" height="18" viewBox="0 0 20 18"><rect x="6" y="1" width="8" height="3" fill="#111"/><path d="M10 4 L3 16 M10 4 L17 16 M10 4 V16" stroke="#111" stroke-width="1.2"/><path d="M2 14 L6 11 L9 15 L13 11 L18 15" stroke="#20c020" stroke-width="2" fill="none"/></svg>
<svg class="a" style="left:532px;top:45px;" width="18" height="19" viewBox="0 0 18 19"><circle cx="9" cy="7.5" r="7.5" fill="#f4f400" opacity=".7"/><circle cx="9" cy="7" r="4.6" fill="#f8f040" stroke="#111" stroke-width="1.3"/><path d="M7 11 H11 V15 L9 17 L7 15 Z" fill="#222"/><path d="M9 5 V9" stroke="#333"/></svg>
<svg class="a" style="left:587px;top:49px;" width="18" height="11" viewBox="0 0 18 11"><rect x="0.6" y="0.6" width="8" height="9.5" fill="#fff" stroke="#707070" stroke-width="1.3"/><rect x="9.4" y="0.6" width="8" height="9.5" fill="#fff" stroke="#707070" stroke-width="1.3"/><rect x="2.5" y="2.5" width="2" height="2" fill="#555"/><rect x="5" y="6" width="2" height="2" fill="#555"/><rect x="11.5" y="2.5" width="2" height="2" fill="#555"/><rect x="14" y="2.5" width="2" height="2" fill="#555"/><rect x="11.5" y="6" width="2" height="2" fill="#555"/><rect x="14" y="6" width="2" height="2" fill="#555"/></svg>
<svg class="a" style="left:636px;top:45px;" width="18" height="16" viewBox="0 0 18 16"><path d="M2 8 L9 5 L16 1 M4 14 L12 12 L12 7 L6 7 Z" stroke="#b0b0b0" stroke-width="1.2" fill="#eee"/></svg>
<div class="a " style="left:0.00px;top:88.00px;width:2002.00px;height:1.20px;background:#c8c8c8"></div>
<div class="a " style="left:0.00px;top:89.20px;width:2002.00px;height:1.00px;background:#fff"></div>
<div class="a " style="left:2.00px;top:90.00px;width:1996.00px;height:54.00px;background:#f0f0f0"></div>
<div class="a " style="left:6.00px;top:95.40px;width:55.00px;height:42.60px;border:1px solid #8f8f8f;border-radius:3px;background:linear-gradient(#f3f3f3 0%,#ececec 50%,#dedede 51%,#d4d4d4 100%);box-shadow:inset 0 0 0 1px #fafafa"></div>
<div class="t c" style="left:-14px;width:95px;top:119px;font-size:11px;color:#1a1a1a;transform:scaleX(0.95);transform-origin:50% 50%;">Define</div>
<div class="a " style="left:64.00px;top:95.40px;width:54.00px;height:42.60px;border:1px solid #8f8f8f;border-radius:3px;background:linear-gradient(#f3f3f3 0%,#ececec 50%,#dedede 51%,#d4d4d4 100%);box-shadow:inset 0 0 0 1px #fafafa"></div>
<div class="t c" style="left:44px;width:94px;top:119px;font-size:11px;color:#1a1a1a;transform:scaleX(0.95);transform-origin:50% 50%;">Model</div>
<div class="a " style="left:121.00px;top:95.40px;width:54.00px;height:42.60px;border:1px solid #8f8f8f;border-radius:3px;background:linear-gradient(#f3f3f3 0%,#ececec 50%,#dedede 51%,#d4d4d4 100%);box-shadow:inset 0 0 0 1px #fafafa"></div>
<div class="t c" style="left:101px;width:94px;top:119px;font-size:11px;color:#1a1a1a;transform:scaleX(0.95);transform-origin:50% 50%;">Legend</div>
<div class="a " style="left:178.00px;top:94.00px;width:12.00px;height:10.50px;border:1px solid #8f8f8f;border-radius:3px;background:linear-gradient(#f3f3f3 0%,#ececec 50%,#dedede 51%,#d4d4d4 100%);box-shadow:inset 0 0 0 1px #fafafa"></div>
<div class="t c" style="left:158px;width:52px;top:91px;font-size:10.5px;color:#1a1a1a;transform:scaleX(1.0);transform-origin:50% 50%;">M</div>
<div class="a " style="left:178.00px;top:106.00px;width:12.00px;height:9.00px;border:1px solid #8f8f8f;border-radius:3px;background:linear-gradient(#f3f3f3 0%,#ececec 50%,#dedede 51%,#d4d4d4 100%);box-shadow:inset 0 0 0 1px #fafafa"></div>
<div class="t c" style="left:158px;width:52px;top:103px;font-size:10.5px;color:#1a1a1a;transform:scaleX(1.0);transform-origin:50% 50%;">1</div>
<div class="a " style="left:178.00px;top:116.50px;width:12.00px;height:9.50px;border:1px solid #8f8f8f;border-radius:3px;background:linear-gradient(#f3f3f3 0%,#ececec 50%,#dedede 51%,#d4d4d4 100%);box-shadow:inset 0 0 0 1px #fafafa"></div>
<div class="t c" style="left:158px;width:52px;top:113.5px;font-size:10.5px;color:#1a1a1a;transform:scaleX(1.0);transform-origin:50% 50%;">2</div>
<div class="a " style="left:178.00px;top:127.50px;width:12.00px;height:10.50px;border:1px solid #8f8f8f;border-radius:3px;background:linear-gradient(#f3f3f3 0%,#ececec 50%,#dedede 51%,#d4d4d4 100%);box-shadow:inset 0 0 0 1px #fafafa"></div>
<div class="t c" style="left:158px;width:52px;top:124.5px;font-size:10.5px;color:#1a1a1a;transform:scaleX(1.0);transform-origin:50% 50%;">3</div>
<div class="a " style="left:192.00px;top:95.40px;width:54.00px;height:42.60px;border:1px solid #8f8f8f;border-radius:3px;background:linear-gradient(#f3f3f3 0%,#ececec 50%,#dedede 51%,#d4d4d4 100%);box-shadow:inset 0 0 0 1px #fafafa"></div>
<div class="t c" style="left:172px;width:94px;top:119px;font-size:11px;color:#1a1a1a;transform:scaleX(0.95);transform-origin:50% 50%;">Format</div>
<div class="a " style="left:249.00px;top:95.40px;width:73.70px;height:42.60px;border:1px solid #8f8f8f;border-radius:3px;background:linear-gradient(#f3f3f3 0%,#ececec 50%,#dedede 51%,#d4d4d4 100%);box-shadow:inset 0 0 0 1px #fafafa"></div>
<div class="t c" style="left:229px;width:113.69999999999999px;top:119.5px;font-size:11px;color:#1a1a1a;transform:scaleX(0.86);transform-origin:50% 50%;">Convert Trades</div>
<div class="a " style="left:325.00px;top:95.40px;width:72.50px;height:42.60px;border:1px solid #8f8f8f;border-radius:3px;background:linear-gradient(#f3f3f3 0%,#ececec 50%,#dedede 51%,#d4d4d4 100%);box-shadow:inset 0 0 0 1px #fafafa"></div>
<div class="t c" style="left:305px;width:112.5px;top:119.5px;font-size:11px;color:#1a1a1a;transform:scaleX(0.86);transform-origin:50% 50%;">Expire Options</div>
<div class="a " style="left:400.00px;top:95.40px;width:54.60px;height:42.60px;border:1px solid #8f8f8f;border-radius:3px;background:linear-gradient(#f3f3f3 0%,#ececec 50%,#dedede 51%,#d4d4d4 100%);box-shadow:inset 0 0 0 1px #fafafa"></div>
<div class="t c" style="left:380px;width:94.60000000000002px;top:119px;font-size:11px;color:#1a1a1a;transform:scaleX(0.95);transform-origin:50% 50%;">Spread</div>
<div class="a " style="left:457.00px;top:95.40px;width:55.00px;height:42.60px;border:1px solid #8f8f8f;border-radius:3px;background:linear-gradient(#f3f3f3 0%,#ececec 50%,#dedede 51%,#d4d4d4 100%);box-shadow:inset 0 0 0 1px #fafafa"></div>
<div class="t c" style="left:437px;width:95px;top:119px;font-size:11px;color:#1a1a1a;transform:scaleX(0.95);transform-origin:50% 50%;">Analyze</div>
<div class="a " style="left:514.60px;top:95.80px;width:14.40px;height:12.00px;border:1px solid #8f8f8f;border-radius:3px;background:linear-gradient(#f3f3f3 0%,#ececec 50%,#dedede 51%,#d4d4d4 100%);box-shadow:inset 0 0 0 1px #fafafa"></div>
<div class="t c" style="left:494.6px;width:54.39999999999998px;top:94.6px;font-size:11px;color:#1a1a1a;transform:scaleX(1.0);transform-origin:50% 50%;">E</div>
<div class="a " style="left:514.60px;top:109.00px;width:14.40px;height:13.00px;border:1px solid #8f8f8f;border-radius:3px;background:linear-gradient(#f3f3f3 0%,#ececec 50%,#dedede 51%,#d4d4d4 100%);box-shadow:inset 0 0 0 1px #fafafa"></div>
<div class="t c" style="left:494.6px;width:54.39999999999998px;top:108px;font-size:11px;color:#1a1a1a;transform:scaleX(1.0);transform-origin:50% 50%;">T</div>
<div class="a " style="left:514.60px;top:124.00px;width:14.40px;height:14.00px;border:1px solid #3a7fb0;border-radius:3px;background:linear-gradient(#c6e6f8,#6fb6e6)"></div>
<div class="t " style="left:518.00px;top:123.50px;font-size:11px;color:#0a2a55">B</div>
<div class="a " style="left:541.00px;top:96.50px;width:23.00px;height:19.50px;border:1px solid #2f7fbf;border-radius:2px;background:linear-gradient(#bfe3f8,#6ab3e6)"></div>
<div class="t " style="left:548.00px;top:98.00px;font-size:13px;color:#12304f">S</div>
<div class="t " style="left:572.00px;top:96.00px;font-size:10.5px;line-height:13px;color:#222">Volty (SV)</div>
<div class="a " style="left:570.00px;top:111.00px;width:55.00px;height:23.00px;background:#fff;border:1px solid #e4e4e4"></div>
<div class="t r " style="right:1383.00px;top:115.00px;font-size:14px;color:#111">15,5%</div>
<div class="t " style="left:631.00px;top:96.00px;font-size:10.5px;line-height:13px;color:#222;transform:scaleX(.92);transform-origin:0 0">Ex.Pos Included</div>
<div class="a " style="left:640.50px;top:111.00px;width:50.50px;height:23.00px;border:1px solid #8f8f8f;border-radius:3px;background:linear-gradient(#f3f3f3 0%,#ececec 50%,#dedede 51%,#d4d4d4 100%);box-shadow:inset 0 0 0 1px #fafafa"></div>
<div class="t " style="left:644.00px;top:115.00px;font-size:14px">Z</div>
<svg class="a" style="left:673px;top:119px;" width="11" height="6" viewBox="0 0 11 6"><path d="M0 0 H11 L5.5 6 Z" fill="#111"/></svg>
<svg class="a" style="left:24px;top:101px;" width="18" height="18" viewBox="0 0 18 18"><circle cx="3" cy="3" r="2" fill="#ee4" stroke="#222" stroke-width=".8"/><circle cx="7" cy="8" r="2" fill="#ee4" stroke="#222" stroke-width=".8"/><circle cx="7" cy="13" r="2" fill="#ee4" stroke="#222" stroke-width=".8"/><path d="M3 5 V16 M3 8 H5 M3 13 H5" stroke="#222"/><path d="M10 3 H14 M10 8 H16 M10 13 H16" stroke="#333" stroke-dasharray="2 1"/></svg>
<svg class="a" style="left:81px;top:100px;" width="20" height="20" viewBox="0 0 20 20"><rect x="1" y="2" width="6" height="6" fill="#b01020" stroke="#111" stroke-width=".8"/><circle cx="15" cy="5" r="3" fill="#ee4" stroke="#222" stroke-width="1.2"/><path d="M4 10 Q3 15 8 18 M16 9 Q17 14 12 18 M8 1.5 Q10 0.5 12 2" stroke="#222" stroke-dasharray="1.5 1.5" fill="none"/><path d="M6.5 19 L10 14.5 L13.5 19 Z" fill="#1a1a6a"/></svg>
<svg class="a" style="left:139px;top:100px;" width="19" height="20" viewBox="0 0 19 20"><rect x="7" y="5" width="10" height="14" fill="#fff" stroke="#111" stroke-width="1.3"/><path d="M9 11 H16 M9 14 H16 M9 17 H16" stroke="#333" stroke-dasharray="1.5 1"/><path d="M1 3 L4 1 L6 4 Z" fill="#20d0c0"/><ellipse cx="7" cy="7" rx="4.5" ry="5.5" transform="rotate(-35 7 7)" fill="#f0e040" stroke="#222" stroke-width="1.1"/><path d="M5 5 L10 10" stroke="#444"/></svg>
<svg class="a" style="left:211px;top:102px;" width="17" height="14" viewBox="0 0 17 14"><rect x="0.5" y="0.5" width="16" height="13" fill="#fff" stroke="#111"/><rect x="1" y="1" width="15" height="3" fill="#1a2a9a"/><rect x="3" y="6" width="4" height="2" fill="#20a0c0"/><rect x="10" y="6" width="4" height="4" fill="#c02060"/><path d="M2 11 H15" stroke="#555" stroke-dasharray="1 1"/></svg>
<svg class="a" style="left:276px;top:99px;" width="19" height="20" viewBox="0 0 19 20"><rect x="1" y="2" width="9" height="11" fill="#fff" stroke="#111" stroke-width="1.3"/><rect x="4" y="5" width="9" height="10" fill="#fff" stroke="#111" stroke-width="1.2"/><path d="M6 9 H11 M6 12 H10" stroke="#444"/><path d="M12 2 L16 6 L13 7 L17 11" stroke="#e01020" stroke-width="2.6" fill="none"/><path d="M8 14 V19 M16 12 V19" stroke="#2a4a2a" stroke-width="1.8"/><rect x="9" y="15" width="6" height="4" fill="#fff" stroke="#555" stroke-width=".8"/></svg>
<svg class="a" style="left:351px;top:99px;" width="19" height="20" viewBox="0 0 19 20"><path d="M2 4 L6 0.5 L9 3 L5 7 Z" fill="#18b8a8" stroke="#111" stroke-width="1.1"/><ellipse cx="10" cy="10" rx="5" ry="6.5" transform="rotate(-30 10 10)" fill="#ecd850" stroke="#222" stroke-width="1.1"/><path d="M8 7 L13 13 M10 6 L14 10" stroke="#555"/><path d="M3 17 H12" stroke="#3050b0" stroke-width="1.2"/><path d="M13 16 L16 18" stroke="#c02030" stroke-width="1.5"/></svg>
<svg class="a" style="left:417px;top:99px;" width="20" height="20" viewBox="0 0 20 20"><path d="M1 1 L4 4 M4 1 L1 4" stroke="#8020c0" stroke-width="1.5"/><path d="M6 1 L8 3" stroke="#3030c0" stroke-width="1.5"/><path d="M14 1 L18 5 M18 1 L14 5" stroke="#e02040" stroke-width="1.5"/><ellipse cx="9" cy="10" rx="5" ry="6" transform="rotate(-35 9 10)" fill="#eee040" stroke="#222" stroke-width="1.1"/><path d="M2 14 L6 18" stroke="#18c0b0" stroke-width="3"/><path d="M14 13 L16 18 M18 13 L16 18 M14 17 H18" stroke="#1a2ad0" stroke-width="1.5"/></svg>
<svg class="a" style="left:476px;top:101px;" width="17" height="17" viewBox="0 0 17 17"><path d="M2 1 V15 H16" stroke="#111" stroke-width="1.2" fill="none"/><path d="M9 1 V15" stroke="#8020c0" stroke-width="1.5"/><path d="M2 15 L9 3 L16 15 M2 6 H16" stroke="#c03060" fill="none"/></svg>
<div class="a " style="left:1901.00px;top:96.00px;width:21.50px;height:13.00px;border:1px solid #8f8f8f;border-radius:3px;background:linear-gradient(#f3f3f3 0%,#ececec 50%,#dedede 51%,#d4d4d4 100%);box-shadow:inset 0 0 0 1px #fafafa"></div>
<svg class="a" style="left:1907px;top:100px;" width="9" height="5" viewBox="0 0 9 5"><path d="M0 5 L4.5 0 L9 5 Z" fill="#111"/></svg>
<div class="a " style="left:1901.00px;top:111.00px;width:21.50px;height:13.00px;border:1px solid #8f8f8f;border-radius:3px;background:linear-gradient(#f3f3f3 0%,#ececec 50%,#dedede 51%,#d4d4d4 100%);box-shadow:inset 0 0 0 1px #fafafa"></div>
<svg class="a" style="left:1907px;top:115px;" width="9" height="5" viewBox="0 0 9 5"><path d="M0 0 L4.5 5 L9 0 Z" fill="#111"/></svg>
<svg class="a" style="left:1904px;top:127px;" width="16" height="14" viewBox="0 0 16 14"><path d="M2 1 V9 L5 12 M6 2 H14" stroke="#ccc" fill="none"/><path d="M4 13 H14" stroke="#ddd" stroke-dasharray="1 2"/></svg>
<div class="a " style="left:1929.00px;top:95.40px;width:68.40px;height:43.00px;border:1px solid #8f8f8f;border-radius:3px;background:linear-gradient(#f3f3f3 0%,#ececec 50%,#dedede 51%,#d4d4d4 100%);box-shadow:inset 0 0 0 1px #fafafa"></div>
<div class="t c" style="left:1909px;width:108.40000000000009px;top:119.5px;font-size:14px;color:#1a1a1a;transform:scaleX(1.0);transform-origin:50% 50%;">Close</div>
<svg class="a" style="left:1954px;top:100px;" width="20" height="17" viewBox="0 0 20 17"><defs><linearGradient id="lg4" x1="0" y1="0" x2="1" y2="1"><stop offset="0" stop-color="#50d050"/><stop offset="1" stop-color="#0a6a12"/></linearGradient></defs><path d="M1 9.5 L7 15.5 L19 2.5 L16.5 0.5 L7 10.5 L3.5 6.5 Z" fill="url(#lg4)" stroke="#0a5a10" stroke-width=".9"/></svg>
<div class="a " style="left:0.00px;top:143.50px;width:2002.00px;height:1.30px;background:#b8b8b8"></div>
<div class="a " style="left:0.00px;top:144.80px;width:2002.00px;height:1.00px;background:#fdfdfd"></div>
<div class="a " style="left:1374.00px;top:-2.00px;width:327.00px;height:84.00px;background:#f3f3f3;border:1px solid #a8a8a8;box-shadow:2px 2px 4px rgba(0,0,0,.25)"></div>
<div class="a " style="left:1381.50px;top:6.00px;width:312.00px;height:69.00px;border:1.5px solid #6a6a6a;background:#f0f0f0"></div>
<div class="a " style="left:1383.00px;top:49.50px;width:309.00px;height:1.00px;background:#cfcfcf"></div>
<div class="a " style="left:1383.00px;top:50.50px;width:309.00px;height:1.00px;background:#fff"></div>
<div class="a " style="left:1688.00px;top:10.00px;width:1.00px;height:38.00px;background:#d0d0d0"></div>
<div class="a " style="left:1390.00px;top:18.30px;width:26.00px;height:23.30px;border:1px solid #8f8f8f;border-radius:3px;background:linear-gradient(#f3f3f3 0%,#ececec 50%,#dedede 51%,#d4d4d4 100%);box-shadow:inset 0 0 0 1px #fafafa"></div>
<svg class="a" style="left:1395px;top:23px;" width="9" height="10" viewBox="0 0 9 10"><path d="M1 0 V9.5" stroke="#1a1ae0" stroke-width="2.2"/><path d="M8.5 0 L2 4.75 L8.5 9.5 Z" fill="#1a1ae0"/></svg>
<div class="t " style="left:1404.50px;top:26.50px;font-size:12.5px;line-height:13px;color:#222">D</div>
<div class="a " style="left:1419.00px;top:18.30px;width:25.70px;height:23.30px;border:1px solid #8f8f8f;border-radius:3px;background:linear-gradient(#f3f3f3 0%,#ececec 50%,#dedede 51%,#d4d4d4 100%);box-shadow:inset 0 0 0 1px #fafafa"></div>
<svg class="a" style="left:1424px;top:23px;" width="9" height="10" viewBox="0 0 9 10"><path d="M1 0 V9.5" stroke="#1a1ae0" stroke-width="2.2"/><path d="M8.5 0 L2 4.75 L8.5 9.5 Z" fill="#1a1ae0"/></svg>
<div class="t " style="left:1433.50px;top:26.50px;font-size:12.5px;line-height:13px;color:#222">S</div>
<div class="a " style="left:1630.00px;top:18.30px;width:25.00px;height:23.30px;border:1px solid #8f8f8f;border-radius:3px;background:linear-gradient(#f3f3f3 0%,#ececec 50%,#dedede 51%,#d4d4d4 100%);box-shadow:inset 0 0 0 1px #fafafa"></div>
<svg class="a" style="left:1642px;top:23px;" width="9" height="10" viewBox="0 0 9 10"><path d="M8 0 V9.5" stroke="#1a1ae0" stroke-width="2.2"/><path d="M0.5 0 L7 4.75 L0.5 9.5 Z" fill="#1a1ae0"/></svg>
<div class="t " style="left:1634.00px;top:26.50px;font-size:12.5px;line-height:13px;color:#222">S</div>
<div class="a " style="left:1658.60px;top:18.30px;width:25.40px;height:23.30px;border:1px solid #8f8f8f;border-radius:3px;background:linear-gradient(#f3f3f3 0%,#ececec 50%,#dedede 51%,#d4d4d4 100%);box-shadow:inset 0 0 0 1px #fafafa"></div>
<svg class="a" style="left:1671px;top:23px;" width="9" height="10" viewBox="0 0 9 10"><path d="M8 0 V9.5" stroke="#1a1ae0" stroke-width="2.2"/><path d="M0.5 0 L7 4.75 L0.5 9.5 Z" fill="#1a1ae0"/></svg>
<div class="t " style="left:1662.60px;top:26.50px;font-size:12.5px;line-height:13px;color:#222">D</div>
<div class="a " style="left:1450.60px;top:17.00px;width:124.00px;height:23.70px;background:#fcfcfc"></div>
<div class="a " style="left:1578.50px;top:17.00px;width:44.50px;height:23.70px;background:#fcfcfc"></div>
<div class="t " style="left:1454.00px;top:20.00px;font-size:13.6px;color:#1a1a1a">u 18 de dic de 2014</div>
<div class="t " style="left:1582.00px;top:20.00px;font-size:13.6px;color:#1a1a1a">21:30</div>
<svg class="a" style="left:1395px;top:53px;" width="18" height="18" viewBox="0 0 18 18"><defs><radialGradient id="rg1" cx="40%" cy="35%" r="60%"><stop offset="0" stop-color="#9fe0ff"/><stop offset=".6" stop-color="#1a6aa0"/><stop offset="1" stop-color="#0a3a60"/></radialGradient></defs><circle cx="9" cy="9" r="8" fill="#f4f4f4" stroke="#9aa" /><circle cx="9" cy="9" r="5" fill="url(#rg1)"/></svg>
<div class="t " style="left:1416.00px;top:55.00px;font-size:13.8px;color:#1a1a1a">Delayed updates</div>
<svg class="a" style="left:1535px;top:53px;" width="18" height="18" viewBox="0 0 18 18"><circle cx="9" cy="9" r="8" fill="#f0f0f0" stroke="#aaa"/><circle cx="9" cy="9" r="5.5" fill="none" stroke="#ddd"/></svg>
<div class="t " style="left:1556.50px;top:55.00px;font-size:13.8px;color:#1a1a1a">Immediate updates</div>
<div class="t " style="left:1747.00px;top:37.00px;font-size:13.8px;color:#222">NV8</div>
<div class="a " style="left:1786.00px;top:60.70px;width:26.00px;height:25.70px;border:1px solid #8f8f8f;border-radius:3px;background:linear-gradient(#f3f3f3 0%,#ececec 50%,#dedede 51%,#d4d4d4 100%);box-shadow:inset 0 0 0 1px #fafafa"></div>
<svg class="a" style="left:1790px;top:66px;" width="18" height="16" viewBox="0 0 18 16"><path d="M2 8 Q3 2 10 3 L10 1 L14 5 L10 8 L10 6 Q5 5 4 9 Z" fill="#1a70d0"/><path d="M16 8 Q15 14 8 13 L8 15 L4 11 L8 8 L8 10 Q13 11 14 7 Z" fill="#40c020"/></svg>
<svg class="a" style="left:1846px;top:38px;" width="18" height="16" viewBox="0 0 18 16"><text x="0" y="14" font-family="Liberation Sans" font-weight="bold" font-size="16" fill="#1a9090">Y</text><text x="11" y="15" font-family="Liberation Sans" font-size="9" fill="#60a040">b</text></svg>
<svg class="a" style="left:1876px;top:37px;" width="18" height="18" viewBox="0 0 18 18"><path d="M1 2 H11 V5 H5 V7 H10 V10 H5 V12 H11 V15 H5 L3 17 V15 H1 Z" fill="#e01818"/><path d="M10 10 L16 4 M12 4 H16 V8" stroke="#a01010" stroke-width="1.2" fill="none"/></svg>
<svg class="a" style="left:1902px;top:37px;" width="18" height="17" viewBox="0 0 18 17"><rect x="1" y="5" width="15" height="10" fill="#fff" stroke="#1a2a90" stroke-width="1.6"/><path d="M3 9 H12" stroke="#3a4aa0"/><path d="M10 8 L15 1 L17 2 L12 9 Z" fill="#e8e020" stroke="#665"/></svg>
<svg class="a" style="left:1845px;top:62px;" width="20" height="20" viewBox="0 0 20 20"><rect x="5" y="1" width="9" height="7" fill="#fff" stroke="#111" stroke-width="1.2"/><rect x="1" y="9" width="18" height="6" rx="1" fill="#fff" stroke="#111" stroke-width="1.5"/><path d="M2 17 H18" stroke="#111" stroke-width="1.6"/></svg>
<svg class="a" style="left:1873px;top:62px;" width="20" height="20" viewBox="0 0 20 20"><path d="M5 15 Q6 6 10 4 Q14 6 15 15 Z" fill="#f0e820" stroke="#333"/><circle cx="10" cy="17" r="1.8" fill="#333"/><path d="M1 5 L4 8 M19 5 L16 8 M1 14 L4 12 M19 14 L16 12" stroke="#555"/></svg>
<svg class="a" style="left:1901px;top:62px;" width="20" height="20" viewBox="0 0 20 20"><rect x="3" y="8" width="13" height="10" fill="#fff" stroke="#111"/><path d="M2 9 L9 2 L16 9" fill="#d01010" stroke="#900"/><path d="M4 2 L18 17" stroke="#222" stroke-width="1.5"/><path d="M12 15 L18 18" stroke="#2a8a2a" stroke-width="2"/></svg>
<div class="a " style="left:1926.00px;top:29.80px;width:72.00px;height:55.80px;border:1.5px solid #777;background:#eef6f6"></div>
<svg class="a" style="left:1929px;top:33px;" width="66" height="50" viewBox="0 0 66 50"><defs><radialGradient id="rg2" cx="50%" cy="50%" r="55%"><stop offset="0" stop-color="#c8e0dc"/><stop offset=".6" stop-color="#4a9a90"/><stop offset="1" stop-color="#2a6a6a"/></radialGradient></defs><rect x="0" y="0" width="66" height="50" fill="#eef6f6"/><defs><linearGradient id="lg3" x1="0" y1="0" x2="0" y2="1"><stop offset="0" stop-color="#3a9a90"/><stop offset="1" stop-color="#15508a"/></linearGradient></defs><rect x="0" y="1" width="66" height="48" fill="url(#lg3)"/><rect x="0" y="3.1" width="66" height="0.9" fill="#d8ecec"/><rect x="0" y="6.1" width="66" height="0.9" fill="#d8ecec"/><rect x="0" y="9.1" width="66" height="0.9" fill="#d8ecec"/><rect x="0" y="12.1" width="66" height="0.9" fill="#d8ecec"/><rect x="0" y="15.1" width="66" height="0.9" fill="#d8ecec"/><rect x="0" y="18.1" width="66" height="0.9" fill="#d8ecec"/><rect x="0" y="21.1" width="66" height="0.9" fill="#d8ecec"/><rect x="0" y="24.1" width="66" height="0.9" fill="#d8ecec"/><rect x="0" y="27.1" width="66" height="0.9" fill="#d8ecec"/><rect x="0" y="30.1" width="66" height="0.9" fill="#d8ecec"/><rect x="0" y="33.1" width="66" height="0.9" fill="#d8ecec"/><rect x="0" y="36.1" width="66" height="0.9" fill="#d8ecec"/><rect x="0" y="39.1" width="66" height="0.9" fill="#d8ecec"/><rect x="0" y="42.1" width="66" height="0.9" fill="#d8ecec"/><rect x="0" y="45.1" width="66" height="0.9" fill="#d8ecec"/><rect x="0" y="48.1" width="66" height="0.9" fill="#d8ecec"/><ellipse cx="33" cy="25" rx="25.5" ry="27.5" fill="#fff"/><circle cx="33" cy="25" r="18" fill="url(#rg2)"/><text x="33" y="31" text-anchor="middle" font-family="Liberation Sans" font-weight="bold" font-size="17" fill="#1a2ad0">S</text></svg>
<div class="a " style="left:1999.00px;top:25.00px;width:1.50px;height:1146.00px;background:#c4c4c4"></div>
<div class="a " style="left:4.00px;top:147.00px;width:73.00px;height:22.00px;background:#808080"></div>
<div class="t " style="left:15.50px;top:149.50px;font-size:14px;font-weight:bold;color:#fff">Futures</div>
<div class="a " style="left:80.00px;top:148.00px;width:740.00px;height:46.00px;background:#d8d8d8"></div>
<div class="a " style="left:82.00px;top:150.00px;width:183.00px;height:19.50px;background:#0a8480;border-bottom:1.5px solid #a8ecec"></div>
<div class="t c b" style="left:82px;width:183px;top:151.5px;font-size:14px;color:#d8ffff">DEC &lt;1&gt;</div>
<div class="a " style="left:266.00px;top:150.00px;width:183.40px;height:19.50px;background:#0a8480;border-bottom:1.5px solid #a8ecec"></div>
<div class="t c b" style="left:266px;width:183.39999999999998px;top:151.5px;font-size:14px;color:#d8ffff">MAR &lt;92&gt;</div>
<div class="a " style="left:450.00px;top:150.00px;width:183.60px;height:19.50px;background:#0a8480;border-bottom:1.5px solid #a8ecec"></div>
<div class="t c b" style="left:450px;width:183.60000000000002px;top:151.5px;font-size:14px;color:#d8ffff">JUN &lt;183&gt;</div>
<div class="a " style="left:634.40px;top:150.00px;width:184.60px;height:19.50px;background:#0a8480;border-bottom:1.5px solid #a8ecec"></div>
<div class="t c b" style="left:634.4px;width:184.60000000000002px;top:151.5px;font-size:14px;color:#d8ffff">Legend</div>
<div class="a " style="left:264.50px;top:149.00px;width:1.60px;height:21.00px;background:#3a4a4a"></div>
<div class="a " style="left:448.90px;top:149.00px;width:1.60px;height:21.00px;background:#3a4a4a"></div>
<div class="a " style="left:633.10px;top:149.00px;width:1.60px;height:21.00px;background:#3a4a4a"></div>
<div class="a " style="left:819.00px;top:149.00px;width:1.20px;height:21.00px;background:#5a6a6a"></div>
<div class="a " style="left:81.00px;top:171.50px;width:184.00px;height:21.00px;background:#fff"></div>
<div class="t " style="left:82.00px;top:174.00px;font-size:14px;transform:scaleX(.97);transform-origin:0 0">2053,00</div>
<div class="t " style="left:151.00px;top:174.00px;font-size:14px;transform:scaleX(.97);transform-origin:0 0">+38,75</div>
<div class="a " style="left:266.00px;top:171.50px;width:183.40px;height:21.00px;background:#fff"></div>
<div class="t " style="left:267.00px;top:174.00px;font-size:14px;transform:scaleX(.97);transform-origin:0 0">2048,25</div>
<div class="t " style="left:336.00px;top:174.00px;font-size:14px;transform:scaleX(.97);transform-origin:0 0">+40,00</div>
<div class="a " style="left:450.00px;top:171.50px;width:183.60px;height:21.00px;background:#fff"></div>
<div class="t " style="left:451.00px;top:174.00px;font-size:14px;transform:scaleX(.97);transform-origin:0 0">2040,25</div>
<div class="t " style="left:520.00px;top:174.00px;font-size:14px;transform:scaleX(.97);transform-origin:0 0">+39,25</div>
<div class="a " style="left:265.00px;top:171.50px;width:1.00px;height:21.00px;background:#d8d8d8"></div>
<div class="a " style="left:449.40px;top:171.50px;width:1.00px;height:21.00px;background:#d8d8d8"></div>
<div class="a " style="left:634.40px;top:172.50px;width:185.00px;height:20.50px;background:linear-gradient(#e8e8f6,#e0e0f2)"></div>
<div class="a " style="left:697.00px;top:173.00px;width:1.20px;height:19.00px;background:#cfcfdb"></div>
<div class="a " style="left:759.40px;top:173.00px;width:1.20px;height:19.00px;background:#cfcfdb"></div>
<div class="a " style="left:633.80px;top:171.80px;width:186.40px;height:22.50px;border:1px solid #c4c4cc;border-top:none"></div>
<div class="t c" style="left:623.8px;width:80px;top:175px;font-size:14px">Last</div>
<div class="t c" style="left:686.6px;width:80px;top:175px;font-size:14px">Chg</div>
<div class="t c" style="left:748px;width:80px;top:175px;font-size:14px">Trade</div>
<div class="a " style="left:823.80px;top:150.50px;width:16.20px;height:16.80px;border:1px solid #cfcfcf;border-radius:2px;background:#f6f6f6"></div>
<svg class="a" style="left:828px;top:154px;" width="7" height="10" viewBox="0 0 7 10"><path d="M6 0 L0 5 L6 10 Z" fill="#a0a0a0"/></svg>
<div class="a " style="left:843.00px;top:150.50px;width:16.40px;height:16.80px;border:1px solid #cfcfcf;border-radius:2px;background:#f6f6f6"></div>
<svg class="a" style="left:849px;top:154px;" width="7" height="10" viewBox="0 0 7 10"><path d="M0 0 L6 5 L0 10 Z" fill="#a0a0a0"/></svg>
<div class="a " style="left:1952.00px;top:151.30px;width:21.00px;height:20.00px;border:1px solid #8a8a8a;border-radius:3px;background:linear-gradient(#f8f8f8,#e4e4e4)"></div>
<div class="a " style="left:1975.60px;top:151.30px;width:21.00px;height:20.00px;border:1px solid #8a8a8a;border-radius:3px;background:linear-gradient(#f8f8f8,#e4e4e4)"></div>
<div class="a " style="left:1929.00px;top:173.30px;width:21.00px;height:20.00px;border:1px solid #8a8a8a;border-radius:3px;background:linear-gradient(#f8f8f8,#e4e4e4)"></div>
<div class="a " style="left:1952.00px;top:173.30px;width:21.00px;height:20.00px;border:1px solid #8a8a8a;border-radius:3px;background:linear-gradient(#f8f8f8,#e4e4e4)"></div>
<div class="a " style="left:1975.60px;top:173.30px;width:21.00px;height:20.00px;border:1px solid #8a8a8a;border-radius:3px;background:linear-gradient(#f8f8f8,#e4e4e4)"></div>
<svg class="a" style="left:1955px;top:154px;" width="16" height="15" viewBox="0 0 16 15"><circle cx="7" cy="7" r="6" fill="#e8e060" stroke="#333"/><rect x="6" y="4" width="9" height="10" fill="#fff" stroke="#333" opacity=".8"/><circle cx="6" cy="8" r="4" fill="#d8e050" stroke="#222"/></svg>
<svg class="a" style="left:1979px;top:154px;" width="16" height="15" viewBox="0 0 16 15"><text x="0" y="14" font-family="Liberation Sans" font-weight="bold" font-size="12" fill="#111">a</text><path d="M6 10 L14 2" stroke="#d8d020" stroke-width="4"/><path d="M6 10 L9 7" stroke="#d01010" stroke-width="4"/></svg>
<svg class="a" style="left:1932px;top:176px;" width="16" height="15" viewBox="0 0 16 15"><path d="M1 7 L7 1 M4 8 L9 3" stroke="#18b0a0" stroke-width="3"/><path d="M12 1 V8 M9 6 L12 9 L15 6" stroke="#111" stroke-width="1.6" fill="none"/><rect x="9" y="10" width="5" height="5" fill="#c01030"/></svg>
<svg class="a" style="left:1955px;top:176px;" width="16" height="15" viewBox="0 0 16 15"><path d="M2 1 V14 H15" stroke="#111" stroke-width="1.2" fill="none"/><path d="M8 1 V14" stroke="#8020c0" stroke-width="1.5"/><path d="M2 14 L8 3 L15 14 M2 5 H15" stroke="#c03060" fill="none"/></svg>
<svg class="a" style="left:1979px;top:176px;" width="16" height="15" viewBox="0 0 16 15"><rect x="4" y="1" width="8" height="6" fill="#fff" stroke="#111"/><rect x="1" y="7" width="14" height="5" rx="1" fill="#fff" stroke="#111" stroke-width="1.3"/><path d="M2 14 H14" stroke="#111" stroke-width="1.4"/></svg>
<div class="a " style="left:0.00px;top:195.50px;width:2002.00px;height:1.30px;background:#bdbdbd"></div>
<div class="a " style="left:0.00px;top:196.80px;width:2002.00px;height:1.00px;background:#fff"></div>
<div class="a " style="left:4.00px;top:199.40px;width:73.00px;height:21.20px;background:#808080"></div>
<div class="t " style="left:15.00px;top:202.00px;font-size:13.5px;font-weight:bold;color:#fff">Options</div>
<div class="a " style="left:1929.60px;top:202.40px;width:16.90px;height:16.90px;border:1px solid #cfcfcf;border-radius:2px;background:#f6f6f6"></div>
<svg class="a" style="left:1934px;top:206px;" width="7" height="10" viewBox="0 0 7 10"><path d="M6 0 L0 5 L6 10 Z" fill="#a0a0a0"/></svg>
<div class="a " style="left:1949.30px;top:202.40px;width:16.90px;height:16.90px;border:1px solid #cfcfcf;border-radius:2px;background:#f6f6f6"></div>
<svg class="a" style="left:1955px;top:206px;" width="7" height="10" viewBox="0 0 7 10"><path d="M0 0 L6 5 L0 10 Z" fill="#a0a0a0"/></svg>
<div class="a " style="left:1926.00px;top:222.00px;width:19.50px;height:822.00px;background:linear-gradient(90deg,#e8e8e8,#f6f6f6 40%,#f2f2f2)"></div>
<div class="a " style="left:1925.30px;top:222.00px;width:1.20px;height:822.00px;background:#a8a8a8"></div>
<svg class="a" style="left:1933px;top:231px;" width="9" height="6" viewBox="0 0 9 6"><path d="M0.5 4.5 L4.5 0.5 L8.5 4.5 Z" fill="#222"/></svg>
<svg class="a" style="left:1933px;top:627px;" width="9" height="6" viewBox="0 0 9 6"><path d="M0.5 0.5 L4.5 4.5 L8.5 0.5 Z" fill="#222"/></svg>
<svg class="a" style="left:1933px;top:651px;" width="9" height="6" viewBox="0 0 9 6"><path d="M0.5 4.5 L4.5 0.5 L8.5 4.5 Z" fill="#222"/></svg>
<svg class="a" style="left:1933px;top:1027px;" width="9" height="6" viewBox="0 0 9 6"><path d="M0.5 0.5 L4.5 4.5 L8.5 0.5 Z" fill="#222"/></svg>
<div class="a " style="left:1926.00px;top:643.50px;width:20.00px;height:1.30px;background:#a0a0a0"></div>
<div class="a " style="left:1928.50px;top:349.00px;width:16.00px;height:19.00px;border:1px solid #888;border-radius:2px;background:linear-gradient(90deg,#fafafa,#d8d8d8)"></div>
<svg class="a" style="left:1931px;top:353px;" width="10" height="11" viewBox="0 0 10 11"><path d="M0 1.5 H9 M0 5 H9 M0 8.5 H9" stroke="#555" stroke-width="1.6"/></svg>
<div class="a " style="left:1928.50px;top:924.00px;width:16.00px;height:19.00px;border:1px solid #888;border-radius:2px;background:linear-gradient(90deg,#fafafa,#d8d8d8)"></div>
<svg class="a" style="left:1931px;top:928px;" width="10" height="11" viewBox="0 0 10 11"><path d="M0 1.5 H9 M0 5 H9 M0 8.5 H9" stroke="#555" stroke-width="1.6"/></svg>
<div class="a " style="left:449.00px;top:481.50px;width:373.00px;height:21.00px;border:1px solid #8a8a8a"></div>
<div class="a " style="left:573.00px;top:482.00px;width:61.00px;height:19.50px;background:#fff;border:1.5px solid #3a3a3a"></div>
<div class="a " style="left:577.00px;top:485.00px;width:1.20px;height:14.00px;background:#111"></div>
<div class="a " style="left:2.30px;top:480.90px;width:73.20px;height:21.20px;border:2px solid #fff"></div>
<svg class="a" style="left:355px;top:362px;" width="366" height="116" viewBox="0 0 366 116"><ellipse cx="183" cy="58" rx="177.3" ry="53.2" fill="rgba(245,55,70,0.2)" stroke="#ee4452" stroke-width="3.6"/></svg>
<div class="a " style="left:0.00px;top:1044.50px;width:2002.00px;height:1.30px;background:#b8b8b8"></div>
<div class="a " style="left:4.00px;top:1048.00px;width:73.00px;height:21.40px;background:#808080"></div>
<div class="t " style="left:9.50px;top:1051.00px;font-size:13.8px;font-weight:bold;color:#fff">Summary</div>
<div class="t c" style="left:106px;width:120px;top:1057px;font-size:13.5px;font-weight:bold;">Existing</div>
<div class="t c" style="left:301px;width:120px;top:1056px;font-size:13.5px;font-weight:bold;">Both</div>
<div class="t c" style="left:56px;width:120px;top:1076px;font-size:13.5px;">Net Reqmts</div>
<div class="t c" style="left:149px;width:120px;top:1076px;font-size:13.5px;">Gross Reqmts</div>
<div class="t c" style="left:251px;width:120px;top:1076px;font-size:13.5px;">Net Reqmts</div>
<div class="t c" style="left:345px;width:120px;top:1076px;font-size:13.5px;">Gross Reqmts</div>
<div class="t c" style="left:524px;width:120px;top:1055px;font-size:13.5px;font-weight:bold;">Existing</div>
<div class="t c" style="left:614px;width:120px;top:1055px;font-size:13.5px;font-weight:bold;">Both</div>
<div class="t c" style="left:767px;width:120px;top:1055px;font-size:13.5px;font-weight:bold;">Existing</div>
<div class="t c" style="left:836px;width:120px;top:1055px;font-size:13.5px;font-weight:bold;">Both</div>
<div class="a " style="left:72.40px;top:1097.20px;width:89.80px;height:23.70px;border:1.5px solid #6e6e6e;background:#f0f0f0"></div>
<div class="t r " style="right:1852.20px;top:1100.70px;font-size:14px;transform:scaleX(.97);transform-origin:100% 50%">3.986$</div>
<div class="a " style="left:72.40px;top:1119.40px;width:89.80px;height:23.90px;border:1.5px solid #6e6e6e;background:#f0f0f0"></div>
<div class="t r " style="right:1852.20px;top:1122.90px;font-size:14px;transform:scaleX(.97);transform-origin:100% 50%">2.836$</div>
<div class="a " style="left:72.40px;top:1141.80px;width:89.80px;height:25.30px;border:1.5px solid #6e6e6e;background:#f0f0f0"></div>
<div class="t r " style="right:1852.20px;top:1145.30px;font-size:14px;transform:scaleX(.97);transform-origin:100% 50%">0,30</div>
<div class="a " style="left:167.00px;top:1097.20px;width:89.60px;height:23.70px;border:1.5px solid #6e6e6e;background:#f0f0f0"></div>
<div class="t r " style="right:1757.70px;top:1100.70px;font-size:14px;transform:scaleX(.97);transform-origin:100% 50%">5.189$</div>
<div class="a " style="left:167.00px;top:1119.40px;width:89.60px;height:23.90px;border:1.5px solid #6e6e6e;background:#f0f0f0"></div>
<div class="t r " style="right:1757.70px;top:1122.90px;font-size:14px;transform:scaleX(.97);transform-origin:100% 50%">4.038$</div>
<div class="a " style="left:167.00px;top:1141.80px;width:89.60px;height:25.30px;border:1.5px solid #6e6e6e;background:#f0f0f0"></div>
<div class="t r " style="right:1757.70px;top:1145.30px;font-size:14px;transform:scaleX(.97);transform-origin:100% 50%">0,23</div>
<div class="a " style="left:267.70px;top:1097.20px;width:90.10px;height:23.70px;border:1.5px solid #6e6e6e;background:#f0f0f0"></div>
<div class="t r " style="right:1656.20px;top:1100.70px;font-size:14px;transform:scaleX(.97);transform-origin:100% 50%">3.617$</div>
<div class="a " style="left:267.70px;top:1119.40px;width:90.10px;height:23.90px;border:1.5px solid #6e6e6e;background:#f0f0f0"></div>
<div class="t r " style="right:1656.20px;top:1122.90px;font-size:14px;transform:scaleX(.97);transform-origin:100% 50%">2.563$</div>
<div class="a " style="left:267.70px;top:1141.80px;width:90.10px;height:25.30px;border:1.5px solid #6e6e6e;background:#f0f0f0"></div>
<div class="t r " style="right:1656.20px;top:1145.30px;font-size:14px;transform:scaleX(.97);transform-origin:100% 50%">0,29</div>
<div class="a " style="left:362.60px;top:1097.20px;width:90.00px;height:23.70px;border:1.5px solid #6e6e6e;background:#f0f0f0"></div>
<div class="t r " style="right:1561.20px;top:1100.70px;font-size:14px;transform:scaleX(.97);transform-origin:100% 50%">4.653$</div>
<div class="a " style="left:362.60px;top:1119.40px;width:90.00px;height:23.90px;border:1.5px solid #6e6e6e;background:#f0f0f0"></div>
<div class="t r " style="right:1561.20px;top:1122.90px;font-size:14px;transform:scaleX(.97);transform-origin:100% 50%">3.599$</div>
<div class="a " style="left:362.60px;top:1141.80px;width:90.00px;height:25.30px;border:1.5px solid #6e6e6e;background:#f0f0f0"></div>
<div class="t r " style="right:1561.20px;top:1145.30px;font-size:14px;transform:scaleX(.97);transform-origin:100% 50%">0,22</div>
<div class="t r " style="right:1938.00px;top:1100.70px;font-size:13.5px">Init</div>
<div class="t r " style="right:1938.00px;top:1122.90px;font-size:13.5px">Maint</div>
<div class="t r " style="right:1938.00px;top:1145.30px;font-size:13.5px">Cash/Init</div>
<div class="a " style="left:537.70px;top:1075.50px;width:89.90px;height:23.20px;border:1.5px solid #6e6e6e;background:#f0f0f0"></div>
<div class="t r " style="right:1386.20px;top:1079.00px;font-size:14px;transform:scaleX(.97);transform-origin:100% 50%">+1.203$</div>
<div class="a " style="left:537.70px;top:1097.20px;width:89.90px;height:23.70px;border:1.5px solid #6e6e6e;background:#f0f0f0"></div>
<div class="t r " style="right:1386.20px;top:1100.70px;font-size:14px;transform:scaleX(.97);transform-origin:100% 50%">-755$</div>
<div class="a " style="left:537.70px;top:1119.40px;width:89.90px;height:23.90px;border:1.5px solid #6e6e6e;background:#f0f0f0"></div>
<div class="t r " style="right:1386.20px;top:1122.90px;font-size:14px;transform:scaleX(.97);transform-origin:100% 50%">+53$</div>
<div class="a " style="left:537.70px;top:1141.80px;width:89.90px;height:25.30px;border:1.5px solid #6e6e6e;background:#f0f0f0"></div>
<div class="t r " style="right:1386.20px;top:1145.30px;font-size:14px;transform:scaleX(.97);transform-origin:100% 50%">8,80$</div>
<div class="a " style="left:631.70px;top:1075.50px;width:89.90px;height:23.20px;border:1.5px solid #6e6e6e;background:#f0f0f0"></div>
<div class="t r " style="right:1292.20px;top:1079.00px;font-size:14px;transform:scaleX(.97);transform-origin:100% 50%">+1.036$</div>
<div class="a " style="left:631.70px;top:1097.20px;width:89.90px;height:23.70px;border:1.5px solid #6e6e6e;background:#f0f0f0"></div>
<div class="t r " style="right:1292.20px;top:1100.70px;font-size:14px;transform:scaleX(.97);transform-origin:100% 50%">-755$</div>
<div class="a " style="left:631.70px;top:1119.40px;width:89.90px;height:23.90px;border:1.5px solid #6e6e6e;background:#f0f0f0"></div>
<div class="t r " style="right:1292.20px;top:1122.90px;font-size:14px;transform:scaleX(.97);transform-origin:100% 50%">+53$</div>
<div class="a " style="left:631.70px;top:1141.80px;width:89.90px;height:25.30px;border:1.5px solid #6e6e6e;background:#f0f0f0"></div>
<div class="t r " style="right:1292.20px;top:1145.30px;font-size:14px;transform:scaleX(.97);transform-origin:100% 50%">10,40$</div>
<div class="t r " style="right:1469.50px;top:1079.00px;font-size:13.5px">Cash Flow</div>
<div class="t r " style="right:1469.50px;top:1100.70px;font-size:13.5px">Cur. Value</div>
<div class="t r " style="right:1469.50px;top:1122.90px;font-size:13.5px">Gain/Loss</div>
<div class="t r " style="right:1469.50px;top:1145.30px;font-size:13.5px">Commis</div>
<div class="a " style="left:794.00px;top:1075.50px;width:66.80px;height:23.20px;border:1.5px solid #6e6e6e;background:#f0f0f0"></div>
<div class="t r " style="right:1152.70px;top:1079.00px;font-size:14px;transform:scaleX(.97);transform-origin:100% 50%">-9,54</div>
<div class="a " style="left:794.00px;top:1097.20px;width:66.80px;height:23.70px;border:1.5px solid #6e6e6e;background:#f0f0f0"></div>
<div class="t r " style="right:1152.70px;top:1100.70px;font-size:14px;transform:scaleX(.97);transform-origin:100% 50%">-0,54</div>
<div class="a " style="left:794.00px;top:1119.40px;width:66.80px;height:23.90px;border:1.5px solid #6e6e6e;background:#f0f0f0"></div>
<div class="t r " style="right:1152.70px;top:1122.90px;font-size:14px;transform:scaleX(.97);transform-origin:100% 50%">45,03</div>
<div class="a " style="left:794.00px;top:1141.80px;width:66.80px;height:25.30px;border:1.5px solid #6e6e6e;background:#f0f0f0"></div>
<div class="t r " style="right:1152.70px;top:1145.30px;font-size:14px;transform:scaleX(.97);transform-origin:100% 50%">-154,1</div>
<div class="a " style="left:864.60px;top:1075.50px;width:67.00px;height:23.20px;border:1.5px solid #6e6e6e;background:#f0f0f0"></div>
<div class="t r " style="right:1081.70px;top:1079.00px;font-size:14px;transform:scaleX(.97);transform-origin:100% 50%">-1,82</div>
<div class="a " style="left:864.60px;top:1097.20px;width:67.00px;height:23.70px;border:1.5px solid #6e6e6e;background:#f0f0f0"></div>
<div class="t r " style="right:1081.70px;top:1100.70px;font-size:14px;transform:scaleX(.97);transform-origin:100% 50%">-0,39</div>
<div class="a " style="left:864.60px;top:1119.40px;width:67.00px;height:23.90px;border:1.5px solid #6e6e6e;background:#f0f0f0"></div>
<div class="t r " style="right:1081.70px;top:1122.90px;font-size:14px;transform:scaleX(.97);transform-origin:100% 50%">40,25</div>
<div class="a " style="left:864.60px;top:1141.80px;width:67.00px;height:25.30px;border:1.5px solid #6e6e6e;background:#f0f0f0"></div>
<div class="t r " style="right:1081.70px;top:1145.30px;font-size:14px;transform:scaleX(.97);transform-origin:100% 50%">-133,5</div>
<div class="t r " style="right:1220.00px;top:1079.00px;font-size:13.5px">Delta</div>
<div class="t r " style="right:1220.00px;top:1100.70px;font-size:13.5px">Gamma</div>
<div class="t r " style="right:1220.00px;top:1122.90px;font-size:13.5px">Theta</div>
<div class="t r " style="right:1220.00px;top:1145.30px;font-size:13.5px">Vega</div>
<div class="t " style="left:726.00px;top:1127.00px;font-size:12px">*</div>
<div class="a " style="left:1005.00px;top:1075.50px;width:67.60px;height:23.20px;border:1.5px solid #6e6e6e;background:#f0f0f0"></div>
<div class="t r " style="right:941.20px;top:1079.00px;font-size:14px;transform:scaleX(.97);transform-origin:100% 50%">13,9%</div>
<div class="a " style="left:1005.00px;top:1097.20px;width:67.60px;height:23.70px;border:1.5px solid #6e6e6e;background:#f0f0f0"></div>
<div class="t r " style="right:941.20px;top:1100.70px;font-size:14px;transform:scaleX(.97);transform-origin:100% 50%">13,8%</div>
<div class="a " style="left:1005.00px;top:1119.40px;width:67.60px;height:23.90px;border:1.5px solid #6e6e6e;background:#f0f0f0"></div>
<div class="t r " style="right:941.20px;top:1122.90px;font-size:14px;transform:scaleX(.97);transform-origin:100% 50%">14,0%</div>
<div class="a " style="left:1005.00px;top:1141.80px;width:67.60px;height:25.30px;border:1.5px solid #6e6e6e;background:#f0f0f0"></div>
<div class="t r " style="right:941.20px;top:1145.30px;font-size:14px;transform:scaleX(.97);transform-origin:100% 50%">0,93</div>
<div class="t r " style="right:1001.50px;top:1078.50px;font-size:13.5px">Avg.IV</div>
<div class="t r " style="right:1001.50px;top:1100.20px;font-size:13.5px">Calls.IV</div>
<div class="t r " style="right:1001.50px;top:1122.40px;font-size:13.5px">Puts.IV</div>
<div class="t r " style="right:1001.50px;top:1144.80px;font-size:13.5px">P/C (Vol)</div>
<div class="t r " style="right:16.00px;top:1051.00px;font-size:13.7px">Volty model: Var 1 day</div>
<div class="a " style="left:0.00px;top:1168.80px;width:2002.00px;height:1.50px;background:#b0b0b0"></div>
<div class="a " style="left:0.00px;top:1170.30px;width:2002.00px;height:1.00px;background:#f8f8f8"></div>
</body></html>
